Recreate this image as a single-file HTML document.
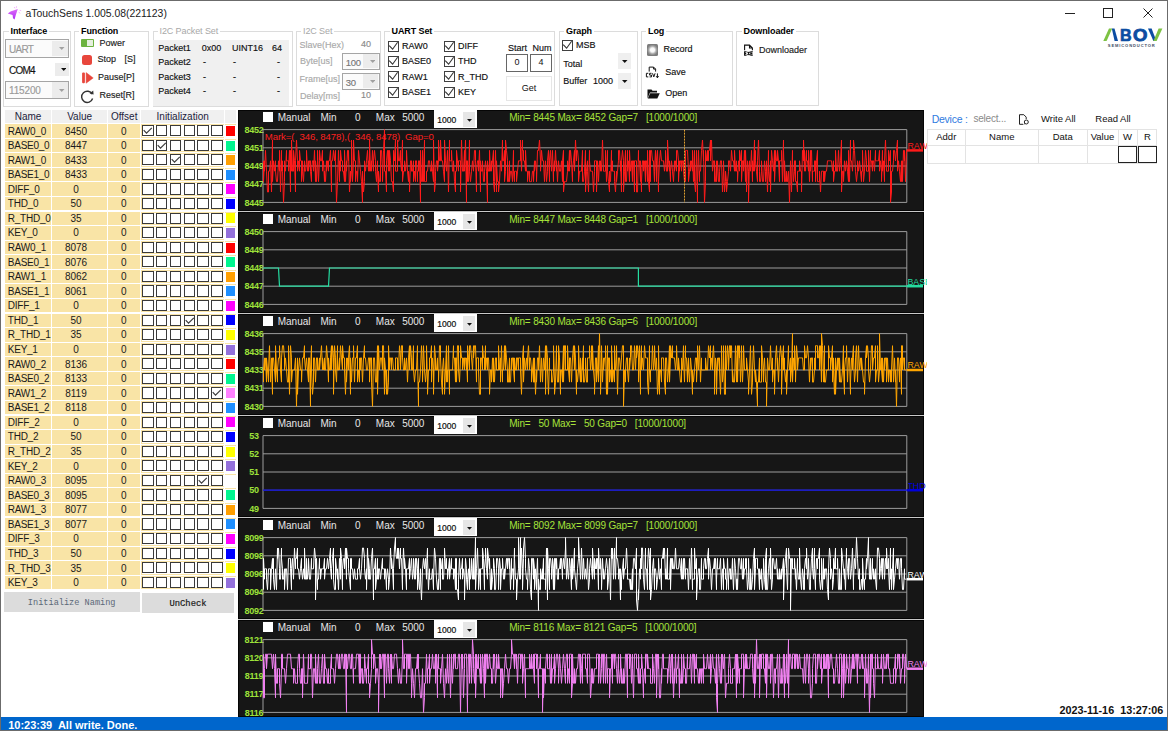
<!DOCTYPE html><html><head><meta charset="utf-8"><style>
*{margin:0;padding:0;box-sizing:border-box}
html,body{width:1168px;height:731px;overflow:hidden;background:#fff;font-family:"Liberation Sans",sans-serif;color:#000}
.ab{position:absolute;white-space:nowrap}
.t9{font-size:9px;line-height:10px;-webkit-text-stroke:0.15px currentColor}
.gb{position:absolute;border:1px solid #dcdcdc}
.gt{position:absolute;font-weight:bold;font-size:9px;line-height:10px;background:#fff;padding:0 2px;letter-spacing:-0.1px}
.cb{position:absolute;width:11px;height:11px;border:1px solid #333;background:#fff}
.cb svg{position:absolute;left:0;top:0}
</style></head><body>

<div class="ab" style="left:0;top:0;width:1168px;height:1px;background:#6b6b6b"></div>
<div class="ab" style="left:0;top:0;width:1px;height:731px;background:#6b6b6b"></div>
<div class="ab" style="left:1167px;top:0;width:1px;height:731px;background:#6b6b6b"></div>
<div class="ab" style="left:0;top:730px;width:1168px;height:1px;background:#6b6b6b"></div>
<svg class="ab" style="left:0;top:0" width="24" height="24" viewBox="0 0 24 24">
<defs><linearGradient id="ig" x1="0" y1="0" x2="0" y2="1"><stop offset="0" stop-color="#dc6cf8"/><stop offset="1" stop-color="#b02cf6"/></linearGradient></defs>
<path d="M7.8 13.4 L10.5 11.6 L17.8 9 L15.8 15 L14.6 19.6 L13 18.2 L12.6 15 Z" fill="url(#ig)"/>
<path d="M14.2 7 L14.9 8.3 M16.5 6.3 L16.3 7.9 M19.6 10.3 L21.2 10.6 M18.6 12.2 L20.3 13.3" stroke="#f0b0fa" stroke-width="0.9"/>
</svg>
<div class="ab" style="left:25.5px;top:7px;font-size:10.4px;line-height:14px;color:#1a1a1a">aTouchSens 1.005.08(221123)</div>
<div class="ab" style="left:1065px;top:12.5px;width:9.5px;height:1px;background:#222"></div>
<div class="ab" style="left:1103px;top:8px;width:9.5px;height:9.5px;border:1px solid #222"></div>
<svg class="ab" style="left:1142.5px;top:8px" width="10" height="10" viewBox="0 0 10 10"><path d="M0.5 0.5 L9.5 9.5 M9.5 0.5 L0.5 9.5" stroke="#222" stroke-width="1"/></svg>
<svg class="ab" style="left:1098px;top:22px" width="68" height="30" viewBox="0 0 68 30">
<path d="M5.3 18.9 L11 6.4 L14.2 6.4 L8.6 18.9 Z" fill="#7dc243"/>
<path d="M13.8 6.4 L16.5 6.4 L20 18.9 L16.6 18.9 Z" fill="#0c4da2"/>
<text x="22" y="18.6" font-family="Liberation Sans" font-weight="bold" font-size="17.4" fill="#0c4da2" stroke="#0c4da2" stroke-width="0.7" textLength="11.6" lengthAdjust="spacingAndGlyphs">B</text>
<text x="35" y="18.6" font-family="Liberation Sans" font-weight="bold" font-size="17.4" fill="#0c4da2" stroke="#0c4da2" stroke-width="0.9" textLength="14.4" lengthAdjust="spacingAndGlyphs">O</text>
<path d="M50 6.4 L53.6 6.4 L58.4 18.9 L55.4 18.9 Z" fill="#0c4da2"/>
<path d="M60.6 6.4 L64.4 6.4 L58.6 18.9 L55.4 18.9 Z" fill="#7dc243"/>
<text x="9.8" y="24.8" font-family="Liberation Sans" font-weight="bold" font-size="4.1" fill="#3d4c63" textLength="47" lengthAdjust="spacing">SEMICONDUCTOR</text>
</svg>
<div class="gb" style="left:3px;top:31px;width:68px;height:75.5px"></div>
<div class="gt" style="left:8.5px;top:26px;color:#000;font-weight:bold">Interface</div>
<div class="gb" style="left:73.5px;top:31px;width:75.5px;height:75.5px"></div>
<div class="gt" style="left:79px;top:26px;color:#000;font-weight:bold">Function</div>
<div class="gb" style="left:152.5px;top:31px;width:140.0px;height:75.5px"></div>
<div class="gt" style="left:157.5px;top:26px;color:#a8a8a8;font-weight:normal">I2C Packet Set</div>
<div class="gb" style="left:295.5px;top:31px;width:85.0px;height:74.5px"></div>
<div class="gt" style="left:301px;top:26px;color:#a8a8a8;font-weight:normal">I2C Set</div>
<div class="gb" style="left:384px;top:31px;width:171px;height:74.5px"></div>
<div class="gt" style="left:389.5px;top:26px;color:#000;font-weight:bold">UART Set</div>
<div class="gb" style="left:558.5px;top:31px;width:79.0px;height:74.5px"></div>
<div class="gt" style="left:564px;top:26px;color:#000;font-weight:bold">Graph</div>
<div class="gb" style="left:640.5px;top:31px;width:92.0px;height:74.5px"></div>
<div class="gt" style="left:646px;top:26px;color:#000;font-weight:bold">Log</div>
<div class="gb" style="left:735.5px;top:31px;width:83.0px;height:74.5px"></div>
<div class="gt" style="left:741.5px;top:26px;color:#000;font-weight:bold">Downloader</div>
<div class="ab" style="left:5px;top:39px;width:64px;height:18.5px;border:1.5px solid #a5a5a5;background:#fbfbfb"></div>
<div class="ab" style="left:52px;top:40.5px;width:15.5px;height:15.5px;background:#ececec"></div>
<svg class="ab" style="left:59.25px;top:47.25px" width="5.5" height="3.2" viewBox="0 0 5.5 3.2"><path d="M0 0 L5.5 0 L2.75 3Z" fill="#a0a0a0"/></svg>
<div class="ab t9" style="left:9px;top:43.65px;color:#9a9a9a;font-size:10px;line-height:11px;letter-spacing:-0.7px">UART</div>
<div class="ab" style="left:55px;top:62.5px;width:14.0px;height:13.5px;background:#ececec"></div>
<svg class="ab" style="left:60.75px;top:68.25px" width="5.5" height="3.2" viewBox="0 0 5.5 3.2"><path d="M0 0 L5.5 0 L2.75 3Z" fill="#111"/></svg>
<div class="ab t9" style="left:9px;top:64.65px;color:#111;font-size:10px;line-height:11px;letter-spacing:-0.75px">COM4</div>
<div class="ab" style="left:5px;top:80.5px;width:64px;height:18.5px;border:1.5px solid #a5a5a5;background:#fbfbfb"></div>
<div class="ab" style="left:52px;top:82.0px;width:15.5px;height:15.5px;background:#ececec"></div>
<svg class="ab" style="left:59.25px;top:88.75px" width="5.5" height="3.2" viewBox="0 0 5.5 3.2"><path d="M0 0 L5.5 0 L2.75 3Z" fill="#a0a0a0"/></svg>
<div class="ab t9" style="left:9px;top:85.15px;color:#9a9a9a;font-size:10px;line-height:11px;letter-spacing:-0.15px">115200</div>
<div class="ab" style="left:80.7px;top:38.7px;width:13.5px;height:8.1px;background:#6db33f;border-radius:1px"></div>
<div class="ab" style="left:86.5px;top:39.9px;width:6.5px;height:5.7px;background:#e6efdf"></div>
<div class="ab t9" style="left:99.5px;top:38px;font-size:9px;line-height:11px;color:#222">Power</div>
<div class="ab" style="left:82px;top:54.5px;width:10px;height:10px;background:#e8463c;border-radius:2.5px"></div>
<div class="ab t9" style="left:97.5px;top:54px;font-size:9px;line-height:11px;color:#222">Stop</div>
<div class="ab t9" style="left:124.5px;top:54px;font-size:9px;line-height:11px;color:#222">[S]</div>
<svg class="ab" style="left:81px;top:71.5px" width="13" height="12" viewBox="0 0 13 12"><rect x="1.1" y="0.6" width="2.8" height="10.6" rx="1" fill="#e8463c"/><path d="M5.1 0.6 L12.2 5.9 L5.1 11.2Z" fill="#e8463c" stroke="#e8463c" stroke-width="0.5" stroke-linejoin="round"/></svg>
<div class="ab t9" style="left:98px;top:72px;font-size:9px;line-height:11px;color:#222">Pause[P]</div>
<svg class="ab" style="left:80px;top:88.5px" width="15" height="15" viewBox="0 0 15 15"><path d="M12.2 5.2 A5.6 5.6 0 1 0 12.6 9.5" fill="none" stroke="#333" stroke-width="1.4"/><path d="M9.6 4.6 L13.6 5.6 L13.2 1.4Z" fill="#333"/></svg>
<div class="ab t9" style="left:99.5px;top:89.5px;font-size:9px;line-height:11px;color:#222">Reset[R]</div>
<div class="ab" style="left:153px;top:40px;width:136px;height:65.5px;background:#f0f0f0"></div>
<div class="ab t9" style="left:158.3px;top:42.5px;font-size:9px;line-height:11px;color:#111">Packet1</div>
<div class="ab t9" style="left:201.8px;top:42.5px;font-size:9px;line-height:11px;color:#111">0x00</div>
<div class="ab t9" style="left:232px;top:42.5px;font-size:9px;line-height:11px;color:#111">UINT16</div>
<div class="ab t9" style="left:272px;top:42.5px;font-size:9px;line-height:11px;color:#111">64</div>
<div class="ab t9" style="left:158.3px;top:57.05px;font-size:9px;line-height:11px;color:#111">Packet2</div>
<div class="ab t9" style="left:203px;top:57.05px;font-size:9px;line-height:11px;color:#111">-</div>
<div class="ab t9" style="left:233px;top:57.05px;font-size:9px;line-height:11px;color:#111">-</div>
<div class="ab t9" style="left:277px;top:57.05px;font-size:9px;line-height:11px;color:#111">-</div>
<div class="ab t9" style="left:158.3px;top:71.6px;font-size:9px;line-height:11px;color:#111">Packet3</div>
<div class="ab t9" style="left:203px;top:71.6px;font-size:9px;line-height:11px;color:#111">-</div>
<div class="ab t9" style="left:233px;top:71.6px;font-size:9px;line-height:11px;color:#111">-</div>
<div class="ab t9" style="left:277px;top:71.6px;font-size:9px;line-height:11px;color:#111">-</div>
<div class="ab t9" style="left:158.3px;top:86.15px;font-size:9px;line-height:11px;color:#111">Packet4</div>
<div class="ab t9" style="left:203px;top:86.15px;font-size:9px;line-height:11px;color:#111">-</div>
<div class="ab t9" style="left:233px;top:86.15px;font-size:9px;line-height:11px;color:#111">-</div>
<div class="ab t9" style="left:277px;top:86.15px;font-size:9px;line-height:11px;color:#111">-</div>
<div class="ab t9" style="left:299.5px;top:40px;font-size:9px;line-height:11px;color:#a9a9a9">Slave(Hex)</div>
<div class="ab t9" style="left:359px;top:39px;width:12px;text-align:right;font-size:9px;line-height:11px;color:#8a8a8a">40</div>
<div class="ab t9" style="left:300px;top:56px;font-size:9px;line-height:11px;color:#a9a9a9">Byte[us]</div>
<div class="ab" style="left:341.7px;top:52.6px;width:38.0px;height:17.4px;border:1.5px solid #a5a5a5;background:#fbfbfb"></div>
<div class="ab" style="left:362.7px;top:54.1px;width:15.5px;height:14.399999999999999px;background:#ececec"></div>
<svg class="ab" style="left:369.95px;top:60.3px" width="5.5" height="3.2" viewBox="0 0 5.5 3.2"><path d="M0 0 L5.5 0 L2.75 3Z" fill="#a0a0a0"/></svg>
<div class="ab t9" style="left:345.7px;top:56.699999999999996px;color:#777;font-size:9.5px;line-height:11px;letter-spacing:-0.2px">100</div>
<div class="ab t9" style="left:299.5px;top:73.5px;font-size:9px;line-height:11px;color:#a9a9a9">Frame[us]</div>
<div class="ab" style="left:341.7px;top:72.7px;width:38.0px;height:16.89999999999999px;border:1.5px solid #a5a5a5;background:#fbfbfb"></div>
<div class="ab" style="left:362.7px;top:74.2px;width:15.5px;height:13.899999999999991px;background:#ececec"></div>
<svg class="ab" style="left:369.95px;top:80.15px" width="5.5" height="3.2" viewBox="0 0 5.5 3.2"><path d="M0 0 L5.5 0 L2.75 3Z" fill="#a0a0a0"/></svg>
<div class="ab t9" style="left:345.7px;top:76.55000000000001px;color:#777;font-size:9.5px;line-height:11px;letter-spacing:-0.2px">30</div>
<div class="ab t9" style="left:300px;top:90.5px;font-size:9px;line-height:11px;color:#a9a9a9">Delay[ms]</div>
<div class="ab t9" style="left:359px;top:90px;width:12px;text-align:right;font-size:9px;line-height:11px;color:#8a8a8a">10</div>
<div class="ab" style="left:388px;top:40.5px;width:11px;height:11px;border:1.5px solid #404040;background:#fff"><svg width="11" height="11" viewBox="0 0 11 11" style="position:absolute;left:-1px;top:-1px"><path d="M1.2 4.6 L4.6 8.2 L9.6 1.2" fill="none" stroke="#333" stroke-width="1.1"/></svg></div>
<div class="ab t9" style="left:402px;top:41.0px;font-size:9px;line-height:11px;color:#111">RAW0</div>
<div class="ab" style="left:444px;top:40.5px;width:11px;height:11px;border:1.5px solid #404040;background:#fff"><svg width="11" height="11" viewBox="0 0 11 11" style="position:absolute;left:-1px;top:-1px"><path d="M1.2 4.6 L4.6 8.2 L9.6 1.2" fill="none" stroke="#333" stroke-width="1.1"/></svg></div>
<div class="ab t9" style="left:458px;top:41.0px;font-size:9px;line-height:11px;color:#111">DIFF</div>
<div class="ab" style="left:388px;top:55.85px;width:11px;height:11px;border:1.5px solid #404040;background:#fff"><svg width="11" height="11" viewBox="0 0 11 11" style="position:absolute;left:-1px;top:-1px"><path d="M1.2 4.6 L4.6 8.2 L9.6 1.2" fill="none" stroke="#333" stroke-width="1.1"/></svg></div>
<div class="ab t9" style="left:402px;top:56.35px;font-size:9px;line-height:11px;color:#111">BASE0</div>
<div class="ab" style="left:444px;top:55.85px;width:11px;height:11px;border:1.5px solid #404040;background:#fff"><svg width="11" height="11" viewBox="0 0 11 11" style="position:absolute;left:-1px;top:-1px"><path d="M1.2 4.6 L4.6 8.2 L9.6 1.2" fill="none" stroke="#333" stroke-width="1.1"/></svg></div>
<div class="ab t9" style="left:458px;top:56.35px;font-size:9px;line-height:11px;color:#111">THD</div>
<div class="ab" style="left:388px;top:71.2px;width:11px;height:11px;border:1.5px solid #404040;background:#fff"><svg width="11" height="11" viewBox="0 0 11 11" style="position:absolute;left:-1px;top:-1px"><path d="M1.2 4.6 L4.6 8.2 L9.6 1.2" fill="none" stroke="#333" stroke-width="1.1"/></svg></div>
<div class="ab t9" style="left:402px;top:71.7px;font-size:9px;line-height:11px;color:#111">RAW1</div>
<div class="ab" style="left:444px;top:71.2px;width:11px;height:11px;border:1.5px solid #404040;background:#fff"><svg width="11" height="11" viewBox="0 0 11 11" style="position:absolute;left:-1px;top:-1px"><path d="M1.2 4.6 L4.6 8.2 L9.6 1.2" fill="none" stroke="#333" stroke-width="1.1"/></svg></div>
<div class="ab t9" style="left:458px;top:71.7px;font-size:9px;line-height:11px;color:#111">R_THD</div>
<div class="ab" style="left:388px;top:86.55px;width:11px;height:11px;border:1.5px solid #404040;background:#fff"><svg width="11" height="11" viewBox="0 0 11 11" style="position:absolute;left:-1px;top:-1px"><path d="M1.2 4.6 L4.6 8.2 L9.6 1.2" fill="none" stroke="#333" stroke-width="1.1"/></svg></div>
<div class="ab t9" style="left:402px;top:87.05px;font-size:9px;line-height:11px;color:#111">BASE1</div>
<div class="ab" style="left:444px;top:86.55px;width:11px;height:11px;border:1.5px solid #404040;background:#fff"><svg width="11" height="11" viewBox="0 0 11 11" style="position:absolute;left:-1px;top:-1px"><path d="M1.2 4.6 L4.6 8.2 L9.6 1.2" fill="none" stroke="#333" stroke-width="1.1"/></svg></div>
<div class="ab t9" style="left:458px;top:87.05px;font-size:9px;line-height:11px;color:#111">KEY</div>
<div class="ab t9" style="left:508px;top:43px;font-size:9px;line-height:11px;color:#111">Start</div>
<div class="ab t9" style="left:532.5px;top:43px;font-size:9px;line-height:11px;color:#111">Num</div>
<div class="ab" style="left:506.4px;top:54.2px;width:21.4px;height:17.6px;border:1.2px solid #666;background:#fff;font-size:9px;line-height:14.5px;text-align:center;color:#111">0</div>
<div class="ab" style="left:530.3px;top:54.2px;width:21.4px;height:17.6px;border:1.2px solid #666;background:#fff;font-size:9px;line-height:14.5px;text-align:center;color:#111">4</div>
<div class="ab" style="left:506.4px;top:75.5px;width:45.3px;height:25px;border:1px solid #e6e6e6;background:#fff;font-size:9px;line-height:23px;text-align:center;color:#111">Get</div>
<div class="ab" style="left:562.2px;top:39.5px;width:11px;height:11px;border:1.5px solid #404040;background:#fff"><svg width="11" height="11" viewBox="0 0 11 11" style="position:absolute;left:-1px;top:-1px"><path d="M1.2 4.6 L4.6 8.2 L9.6 1.2" fill="none" stroke="#333" stroke-width="1.1"/></svg></div>
<div class="ab t9" style="left:576px;top:40px;font-size:9px;line-height:11px;color:#111">MSB</div>
<div class="ab t9" style="left:563.3px;top:58.5px;font-size:9px;line-height:11px;color:#111">Total</div>
<div class="ab" style="left:618px;top:52.5px;width:13.3px;height:16px;background:#efefef"></div>
<svg class="ab" style="left:622px;top:59.5px" width="5.5" height="3.2" viewBox="0 0 5.5 3.2"><path d="M0 0 L5.5 0 L2.75 3Z" fill="#111"/></svg>
<div class="ab t9" style="left:563.3px;top:76px;font-size:9px;line-height:11px;color:#111">Buffer</div>
<div class="ab t9" style="left:593px;top:75.5px;font-size:9px;line-height:11px;color:#111">1000</div>
<div class="ab" style="left:618px;top:72.9px;width:13.3px;height:15.7px;background:#efefef"></div>
<svg class="ab" style="left:622px;top:79.5px" width="5.5" height="3.2" viewBox="0 0 5.5 3.2"><path d="M0 0 L5.5 0 L2.75 3Z" fill="#111"/></svg>
<div class="ab" style="left:647px;top:44px;width:11.2px;height:11.5px;background:radial-gradient(circle closest-side,#ffffff 0,#f8f8f8 38%,#a8a8a8 70%,#7c7c7c 100%);border-radius:1.5px"></div>
<div class="ab t9" style="left:663.5px;top:44px;font-size:9px;line-height:11px;color:#111">Record</div>
<svg class="ab" style="left:645px;top:66px" width="16" height="13" viewBox="0 0 16 13"><path d="M4.2 5.6 V1.1 H8.6 L10.6 3.1 V5.6 M8.6 1.1 V3.1 H10.6" fill="none" stroke="#111" stroke-width="1"/><path d="M3.3 7.3 H1.4 V10.9 H3.3 M6.5 7.3 H4.6 V9.1 H6.5 V10.9 H4.6 M7.5 7.3 L8.8 10.9 L10.1 7.3" fill="none" stroke="#111" stroke-width="1"/><path d="M12.4 7.4 V11.6 M11.2 10.2 L12.4 11.8 L13.6 10.2" fill="none" stroke="#111" stroke-width="1"/></svg>
<div class="ab t9" style="left:665.2px;top:66.5px;font-size:9px;line-height:11px;color:#111">Save</div>
<svg class="ab" style="left:646.5px;top:88.5px" width="13" height="10" viewBox="0 0 13 10"><path d="M0.5 0.5 H4.5 L5.5 1.7 H10 V3.5 H3 L0.5 9.5Z" fill="#111"/><path d="M3.2 4.2 H12.8 L10.3 9.6 H0.8Z" fill="#111"/></svg>
<div class="ab t9" style="left:665.2px;top:88px;font-size:9px;line-height:11px;color:#111">Open</div>
<svg class="ab" style="left:743px;top:43.5px" width="12" height="13" viewBox="0 0 12 13"><path d="M1.6 6.3 V1.1 H6.5 L9.4 4 V6.3 M6.5 1.1 V4 H9.4" fill="none" stroke="#111" stroke-width="1.1"/><path d="M3.6 7.7 H1.6 V11.1 H3.6 M1.6 9.4 H3.2 M4.6 7.7 L6.6 11.1 M6.6 7.7 L4.6 11.1 M9.8 7.7 H7.8 V11.1 H9.8 M7.8 9.4 H9.4" fill="none" stroke="#111" stroke-width="1.1"/></svg>
<div class="ab t9" style="left:759px;top:44.5px;font-size:9px;line-height:11px;color:#222">Downloader</div>
<div class="ab" style="left:5px;top:109.6px;width:231px;height:13.4px;background:#f0f0f0"></div>
<div class="ab" style="left:50.9px;top:109.6px;width:1.6000000000000014px;height:13.4px;background:#fff"></div>
<div class="ab" style="left:106.8px;top:109.6px;width:1.4000000000000057px;height:13.4px;background:#fff"></div>
<div class="ab" style="left:140.2px;top:109.6px;width:1.200000000000017px;height:13.4px;background:#fff"></div>
<div class="ab" style="left:224px;top:109.6px;width:1.3000000000000114px;height:13.4px;background:#fff"></div>
<div class="ab" style="left:-12px;top:110.5px;width:80px;text-align:center;font-size:10px;line-height:12px;color:#1c1c3c">Name</div>
<div class="ab" style="left:39.599999999999994px;top:110.5px;width:80px;text-align:center;font-size:10px;line-height:12px;color:#1c1c3c">Value</div>
<div class="ab" style="left:84.2px;top:110.5px;width:80px;text-align:center;font-size:10px;line-height:12px;color:#1c1c3c">Offset</div>
<div class="ab" style="left:142.7px;top:110.5px;width:80px;text-align:center;font-size:10px;line-height:12px;color:#1c1c3c">Initialization</div>
<div class="ab" style="left:5px;top:124.20px;width:231px;height:13.4px;background:#f9e4a6"></div>
<div class="ab" style="left:50.9px;top:124.20px;width:1.6000000000000014px;height:13.4px;background:#fff"></div>
<div class="ab" style="left:106.8px;top:124.20px;width:1.4000000000000057px;height:13.4px;background:#fff"></div>
<div class="ab" style="left:140.2px;top:124.20px;width:1.200000000000017px;height:13.4px;background:#fff"></div>
<div class="ab" style="left:224px;top:124.20px;width:1.3000000000000114px;height:13.4px;background:#fff"></div>
<div class="ab" style="left:142px;top:125.20px;width:82px;height:11.4px;background:#fff"></div>
<div class="ab" style="left:7.8px;top:125.50px;font-size:10px;line-height:12.5px;color:#1a1a1a;letter-spacing:-0.25px">RAW0_0</div>
<div class="ab" style="left:52.5px;top:125.50px;width:47px;text-align:center;font-size:10px;line-height:12.5px;color:#1a1a1a">8450</div>
<div class="ab" style="left:108.2px;top:125.50px;width:31px;text-align:center;font-size:10px;line-height:12.5px;color:#1a1a1a">0</div>
<div class="ab" style="left:142.20px;top:125.10px;width:11.5px;height:11.2px;border:1.4px solid #3a3a3a;background:#fff"><svg width="11" height="11" viewBox="0 0 11 11" style="position:absolute;left:-1px;top:-1px"><path d="M1.7 5.2 L4.5 8.1 L9.8 2.9" fill="none" stroke="#3c3c3c" stroke-width="1.2"/></svg></div>
<div class="ab" style="left:155.98px;top:125.10px;width:11.5px;height:11.2px;border:1.4px solid #3a3a3a;background:#fff"></div>
<div class="ab" style="left:169.76px;top:125.10px;width:11.5px;height:11.2px;border:1.4px solid #3a3a3a;background:#fff"></div>
<div class="ab" style="left:183.54px;top:125.10px;width:11.5px;height:11.2px;border:1.4px solid #3a3a3a;background:#fff"></div>
<div class="ab" style="left:197.32px;top:125.10px;width:11.5px;height:11.2px;border:1.4px solid #3a3a3a;background:#fff"></div>
<div class="ab" style="left:211.10px;top:125.10px;width:11.5px;height:11.2px;border:1.4px solid #3a3a3a;background:#fff"></div>
<div class="ab" style="left:225.3px;top:125.20px;width:10.7px;height:12.4px;background:#fff"></div>
<div class="ab" style="left:225.9px;top:126.00px;width:9.3px;height:10px;background:#ff0000"></div>
<div class="ab" style="left:5px;top:138.77px;width:231px;height:13.4px;background:#f9e4a6"></div>
<div class="ab" style="left:50.9px;top:138.77px;width:1.6000000000000014px;height:13.4px;background:#fff"></div>
<div class="ab" style="left:106.8px;top:138.77px;width:1.4000000000000057px;height:13.4px;background:#fff"></div>
<div class="ab" style="left:140.2px;top:138.77px;width:1.200000000000017px;height:13.4px;background:#fff"></div>
<div class="ab" style="left:224px;top:138.77px;width:1.3000000000000114px;height:13.4px;background:#fff"></div>
<div class="ab" style="left:142px;top:139.77px;width:82px;height:11.4px;background:#fff"></div>
<div class="ab" style="left:7.8px;top:140.07px;font-size:10px;line-height:12.5px;color:#1a1a1a;letter-spacing:-0.25px">BASE0_0</div>
<div class="ab" style="left:52.5px;top:140.07px;width:47px;text-align:center;font-size:10px;line-height:12.5px;color:#1a1a1a">8447</div>
<div class="ab" style="left:108.2px;top:140.07px;width:31px;text-align:center;font-size:10px;line-height:12.5px;color:#1a1a1a">0</div>
<div class="ab" style="left:142.20px;top:139.67px;width:11.5px;height:11.2px;border:1.4px solid #3a3a3a;background:#fff"></div>
<div class="ab" style="left:155.98px;top:139.67px;width:11.5px;height:11.2px;border:1.4px solid #3a3a3a;background:#fff"><svg width="11" height="11" viewBox="0 0 11 11" style="position:absolute;left:-1px;top:-1px"><path d="M1.7 5.2 L4.5 8.1 L9.8 2.9" fill="none" stroke="#3c3c3c" stroke-width="1.2"/></svg></div>
<div class="ab" style="left:169.76px;top:139.67px;width:11.5px;height:11.2px;border:1.4px solid #3a3a3a;background:#fff"></div>
<div class="ab" style="left:183.54px;top:139.67px;width:11.5px;height:11.2px;border:1.4px solid #3a3a3a;background:#fff"></div>
<div class="ab" style="left:197.32px;top:139.67px;width:11.5px;height:11.2px;border:1.4px solid #3a3a3a;background:#fff"></div>
<div class="ab" style="left:211.10px;top:139.67px;width:11.5px;height:11.2px;border:1.4px solid #3a3a3a;background:#fff"></div>
<div class="ab" style="left:225.3px;top:139.77px;width:10.7px;height:12.4px;background:#fff"></div>
<div class="ab" style="left:225.9px;top:140.57px;width:9.3px;height:10px;background:#00f590"></div>
<div class="ab" style="left:5px;top:153.34px;width:231px;height:13.4px;background:#f9e4a6"></div>
<div class="ab" style="left:50.9px;top:153.34px;width:1.6000000000000014px;height:13.4px;background:#fff"></div>
<div class="ab" style="left:106.8px;top:153.34px;width:1.4000000000000057px;height:13.4px;background:#fff"></div>
<div class="ab" style="left:140.2px;top:153.34px;width:1.200000000000017px;height:13.4px;background:#fff"></div>
<div class="ab" style="left:224px;top:153.34px;width:1.3000000000000114px;height:13.4px;background:#fff"></div>
<div class="ab" style="left:142px;top:154.34px;width:82px;height:11.4px;background:#fff"></div>
<div class="ab" style="left:7.8px;top:154.64px;font-size:10px;line-height:12.5px;color:#1a1a1a;letter-spacing:-0.25px">RAW1_0</div>
<div class="ab" style="left:52.5px;top:154.64px;width:47px;text-align:center;font-size:10px;line-height:12.5px;color:#1a1a1a">8433</div>
<div class="ab" style="left:108.2px;top:154.64px;width:31px;text-align:center;font-size:10px;line-height:12.5px;color:#1a1a1a">0</div>
<div class="ab" style="left:142.20px;top:154.24px;width:11.5px;height:11.2px;border:1.4px solid #3a3a3a;background:#fff"></div>
<div class="ab" style="left:155.98px;top:154.24px;width:11.5px;height:11.2px;border:1.4px solid #3a3a3a;background:#fff"></div>
<div class="ab" style="left:169.76px;top:154.24px;width:11.5px;height:11.2px;border:1.4px solid #3a3a3a;background:#fff"><svg width="11" height="11" viewBox="0 0 11 11" style="position:absolute;left:-1px;top:-1px"><path d="M1.7 5.2 L4.5 8.1 L9.8 2.9" fill="none" stroke="#3c3c3c" stroke-width="1.2"/></svg></div>
<div class="ab" style="left:183.54px;top:154.24px;width:11.5px;height:11.2px;border:1.4px solid #3a3a3a;background:#fff"></div>
<div class="ab" style="left:197.32px;top:154.24px;width:11.5px;height:11.2px;border:1.4px solid #3a3a3a;background:#fff"></div>
<div class="ab" style="left:211.10px;top:154.24px;width:11.5px;height:11.2px;border:1.4px solid #3a3a3a;background:#fff"></div>
<div class="ab" style="left:225.3px;top:154.34px;width:10.7px;height:12.4px;background:#fff"></div>
<div class="ab" style="left:225.9px;top:155.14px;width:9.3px;height:10px;background:#ff9f00"></div>
<div class="ab" style="left:5px;top:167.91px;width:231px;height:13.4px;background:#f9e4a6"></div>
<div class="ab" style="left:50.9px;top:167.91px;width:1.6000000000000014px;height:13.4px;background:#fff"></div>
<div class="ab" style="left:106.8px;top:167.91px;width:1.4000000000000057px;height:13.4px;background:#fff"></div>
<div class="ab" style="left:140.2px;top:167.91px;width:1.200000000000017px;height:13.4px;background:#fff"></div>
<div class="ab" style="left:224px;top:167.91px;width:1.3000000000000114px;height:13.4px;background:#fff"></div>
<div class="ab" style="left:142px;top:168.91px;width:82px;height:11.4px;background:#fff"></div>
<div class="ab" style="left:7.8px;top:169.21px;font-size:10px;line-height:12.5px;color:#1a1a1a;letter-spacing:-0.25px">BASE1_0</div>
<div class="ab" style="left:52.5px;top:169.21px;width:47px;text-align:center;font-size:10px;line-height:12.5px;color:#1a1a1a">8433</div>
<div class="ab" style="left:108.2px;top:169.21px;width:31px;text-align:center;font-size:10px;line-height:12.5px;color:#1a1a1a">0</div>
<div class="ab" style="left:142.20px;top:168.81px;width:11.5px;height:11.2px;border:1.4px solid #3a3a3a;background:#fff"></div>
<div class="ab" style="left:155.98px;top:168.81px;width:11.5px;height:11.2px;border:1.4px solid #3a3a3a;background:#fff"></div>
<div class="ab" style="left:169.76px;top:168.81px;width:11.5px;height:11.2px;border:1.4px solid #3a3a3a;background:#fff"></div>
<div class="ab" style="left:183.54px;top:168.81px;width:11.5px;height:11.2px;border:1.4px solid #3a3a3a;background:#fff"></div>
<div class="ab" style="left:197.32px;top:168.81px;width:11.5px;height:11.2px;border:1.4px solid #3a3a3a;background:#fff"></div>
<div class="ab" style="left:211.10px;top:168.81px;width:11.5px;height:11.2px;border:1.4px solid #3a3a3a;background:#fff"></div>
<div class="ab" style="left:225.3px;top:168.91px;width:10.7px;height:12.4px;background:#fff"></div>
<div class="ab" style="left:225.9px;top:169.71px;width:9.3px;height:10px;background:#1e8fff"></div>
<div class="ab" style="left:5px;top:182.48px;width:231px;height:13.4px;background:#f9e4a6"></div>
<div class="ab" style="left:50.9px;top:182.48px;width:1.6000000000000014px;height:13.4px;background:#fff"></div>
<div class="ab" style="left:106.8px;top:182.48px;width:1.4000000000000057px;height:13.4px;background:#fff"></div>
<div class="ab" style="left:140.2px;top:182.48px;width:1.200000000000017px;height:13.4px;background:#fff"></div>
<div class="ab" style="left:224px;top:182.48px;width:1.3000000000000114px;height:13.4px;background:#fff"></div>
<div class="ab" style="left:142px;top:183.48px;width:82px;height:11.4px;background:#fff"></div>
<div class="ab" style="left:7.8px;top:183.78px;font-size:10px;line-height:12.5px;color:#1a1a1a;letter-spacing:-0.25px">DIFF_0</div>
<div class="ab" style="left:52.5px;top:183.78px;width:47px;text-align:center;font-size:10px;line-height:12.5px;color:#1a1a1a">0</div>
<div class="ab" style="left:108.2px;top:183.78px;width:31px;text-align:center;font-size:10px;line-height:12.5px;color:#1a1a1a">0</div>
<div class="ab" style="left:142.20px;top:183.38px;width:11.5px;height:11.2px;border:1.4px solid #3a3a3a;background:#fff"></div>
<div class="ab" style="left:155.98px;top:183.38px;width:11.5px;height:11.2px;border:1.4px solid #3a3a3a;background:#fff"></div>
<div class="ab" style="left:169.76px;top:183.38px;width:11.5px;height:11.2px;border:1.4px solid #3a3a3a;background:#fff"></div>
<div class="ab" style="left:183.54px;top:183.38px;width:11.5px;height:11.2px;border:1.4px solid #3a3a3a;background:#fff"></div>
<div class="ab" style="left:197.32px;top:183.38px;width:11.5px;height:11.2px;border:1.4px solid #3a3a3a;background:#fff"></div>
<div class="ab" style="left:211.10px;top:183.38px;width:11.5px;height:11.2px;border:1.4px solid #3a3a3a;background:#fff"></div>
<div class="ab" style="left:225.3px;top:183.48px;width:10.7px;height:12.4px;background:#fff"></div>
<div class="ab" style="left:225.9px;top:184.28px;width:9.3px;height:10px;background:#ff00ff"></div>
<div class="ab" style="left:5px;top:197.05px;width:231px;height:13.4px;background:#f9e4a6"></div>
<div class="ab" style="left:50.9px;top:197.05px;width:1.6000000000000014px;height:13.4px;background:#fff"></div>
<div class="ab" style="left:106.8px;top:197.05px;width:1.4000000000000057px;height:13.4px;background:#fff"></div>
<div class="ab" style="left:140.2px;top:197.05px;width:1.200000000000017px;height:13.4px;background:#fff"></div>
<div class="ab" style="left:224px;top:197.05px;width:1.3000000000000114px;height:13.4px;background:#fff"></div>
<div class="ab" style="left:142px;top:198.05px;width:82px;height:11.4px;background:#fff"></div>
<div class="ab" style="left:7.8px;top:198.35px;font-size:10px;line-height:12.5px;color:#1a1a1a;letter-spacing:-0.25px">THD_0</div>
<div class="ab" style="left:52.5px;top:198.35px;width:47px;text-align:center;font-size:10px;line-height:12.5px;color:#1a1a1a">50</div>
<div class="ab" style="left:108.2px;top:198.35px;width:31px;text-align:center;font-size:10px;line-height:12.5px;color:#1a1a1a">0</div>
<div class="ab" style="left:142.20px;top:197.95px;width:11.5px;height:11.2px;border:1.4px solid #3a3a3a;background:#fff"></div>
<div class="ab" style="left:155.98px;top:197.95px;width:11.5px;height:11.2px;border:1.4px solid #3a3a3a;background:#fff"></div>
<div class="ab" style="left:169.76px;top:197.95px;width:11.5px;height:11.2px;border:1.4px solid #3a3a3a;background:#fff"></div>
<div class="ab" style="left:183.54px;top:197.95px;width:11.5px;height:11.2px;border:1.4px solid #3a3a3a;background:#fff"></div>
<div class="ab" style="left:197.32px;top:197.95px;width:11.5px;height:11.2px;border:1.4px solid #3a3a3a;background:#fff"></div>
<div class="ab" style="left:211.10px;top:197.95px;width:11.5px;height:11.2px;border:1.4px solid #3a3a3a;background:#fff"></div>
<div class="ab" style="left:225.3px;top:198.05px;width:10.7px;height:12.4px;background:#fff"></div>
<div class="ab" style="left:225.9px;top:198.85px;width:9.3px;height:10px;background:#0000ff"></div>
<div class="ab" style="left:5px;top:211.62px;width:231px;height:13.4px;background:#f9e4a6"></div>
<div class="ab" style="left:50.9px;top:211.62px;width:1.6000000000000014px;height:13.4px;background:#fff"></div>
<div class="ab" style="left:106.8px;top:211.62px;width:1.4000000000000057px;height:13.4px;background:#fff"></div>
<div class="ab" style="left:140.2px;top:211.62px;width:1.200000000000017px;height:13.4px;background:#fff"></div>
<div class="ab" style="left:224px;top:211.62px;width:1.3000000000000114px;height:13.4px;background:#fff"></div>
<div class="ab" style="left:142px;top:212.62px;width:82px;height:11.4px;background:#fff"></div>
<div class="ab" style="left:7.8px;top:212.92px;font-size:10px;line-height:12.5px;color:#1a1a1a;letter-spacing:-0.25px">R_THD_0</div>
<div class="ab" style="left:52.5px;top:212.92px;width:47px;text-align:center;font-size:10px;line-height:12.5px;color:#1a1a1a">35</div>
<div class="ab" style="left:108.2px;top:212.92px;width:31px;text-align:center;font-size:10px;line-height:12.5px;color:#1a1a1a">0</div>
<div class="ab" style="left:142.20px;top:212.52px;width:11.5px;height:11.2px;border:1.4px solid #3a3a3a;background:#fff"></div>
<div class="ab" style="left:155.98px;top:212.52px;width:11.5px;height:11.2px;border:1.4px solid #3a3a3a;background:#fff"></div>
<div class="ab" style="left:169.76px;top:212.52px;width:11.5px;height:11.2px;border:1.4px solid #3a3a3a;background:#fff"></div>
<div class="ab" style="left:183.54px;top:212.52px;width:11.5px;height:11.2px;border:1.4px solid #3a3a3a;background:#fff"></div>
<div class="ab" style="left:197.32px;top:212.52px;width:11.5px;height:11.2px;border:1.4px solid #3a3a3a;background:#fff"></div>
<div class="ab" style="left:211.10px;top:212.52px;width:11.5px;height:11.2px;border:1.4px solid #3a3a3a;background:#fff"></div>
<div class="ab" style="left:225.3px;top:212.62px;width:10.7px;height:12.4px;background:#fff"></div>
<div class="ab" style="left:225.9px;top:213.42px;width:9.3px;height:10px;background:#ffff00"></div>
<div class="ab" style="left:5px;top:226.19px;width:231px;height:13.4px;background:#f9e4a6"></div>
<div class="ab" style="left:50.9px;top:226.19px;width:1.6000000000000014px;height:13.4px;background:#fff"></div>
<div class="ab" style="left:106.8px;top:226.19px;width:1.4000000000000057px;height:13.4px;background:#fff"></div>
<div class="ab" style="left:140.2px;top:226.19px;width:1.200000000000017px;height:13.4px;background:#fff"></div>
<div class="ab" style="left:224px;top:226.19px;width:1.3000000000000114px;height:13.4px;background:#fff"></div>
<div class="ab" style="left:142px;top:227.19px;width:82px;height:11.4px;background:#fff"></div>
<div class="ab" style="left:7.8px;top:227.49px;font-size:10px;line-height:12.5px;color:#1a1a1a;letter-spacing:-0.25px">KEY_0</div>
<div class="ab" style="left:52.5px;top:227.49px;width:47px;text-align:center;font-size:10px;line-height:12.5px;color:#1a1a1a">0</div>
<div class="ab" style="left:108.2px;top:227.49px;width:31px;text-align:center;font-size:10px;line-height:12.5px;color:#1a1a1a">0</div>
<div class="ab" style="left:142.20px;top:227.09px;width:11.5px;height:11.2px;border:1.4px solid #3a3a3a;background:#fff"></div>
<div class="ab" style="left:155.98px;top:227.09px;width:11.5px;height:11.2px;border:1.4px solid #3a3a3a;background:#fff"></div>
<div class="ab" style="left:169.76px;top:227.09px;width:11.5px;height:11.2px;border:1.4px solid #3a3a3a;background:#fff"></div>
<div class="ab" style="left:183.54px;top:227.09px;width:11.5px;height:11.2px;border:1.4px solid #3a3a3a;background:#fff"></div>
<div class="ab" style="left:197.32px;top:227.09px;width:11.5px;height:11.2px;border:1.4px solid #3a3a3a;background:#fff"></div>
<div class="ab" style="left:211.10px;top:227.09px;width:11.5px;height:11.2px;border:1.4px solid #3a3a3a;background:#fff"></div>
<div class="ab" style="left:225.3px;top:227.19px;width:10.7px;height:12.4px;background:#fff"></div>
<div class="ab" style="left:225.9px;top:227.99px;width:9.3px;height:10px;background:#9370db"></div>
<div class="ab" style="left:5px;top:240.76px;width:231px;height:13.4px;background:#f9e4a6"></div>
<div class="ab" style="left:50.9px;top:240.76px;width:1.6000000000000014px;height:13.4px;background:#fff"></div>
<div class="ab" style="left:106.8px;top:240.76px;width:1.4000000000000057px;height:13.4px;background:#fff"></div>
<div class="ab" style="left:140.2px;top:240.76px;width:1.200000000000017px;height:13.4px;background:#fff"></div>
<div class="ab" style="left:224px;top:240.76px;width:1.3000000000000114px;height:13.4px;background:#fff"></div>
<div class="ab" style="left:142px;top:241.76px;width:82px;height:11.4px;background:#fff"></div>
<div class="ab" style="left:7.8px;top:242.06px;font-size:10px;line-height:12.5px;color:#1a1a1a;letter-spacing:-0.25px">RAW0_1</div>
<div class="ab" style="left:52.5px;top:242.06px;width:47px;text-align:center;font-size:10px;line-height:12.5px;color:#1a1a1a">8078</div>
<div class="ab" style="left:108.2px;top:242.06px;width:31px;text-align:center;font-size:10px;line-height:12.5px;color:#1a1a1a">0</div>
<div class="ab" style="left:142.20px;top:241.66px;width:11.5px;height:11.2px;border:1.4px solid #3a3a3a;background:#fff"></div>
<div class="ab" style="left:155.98px;top:241.66px;width:11.5px;height:11.2px;border:1.4px solid #3a3a3a;background:#fff"></div>
<div class="ab" style="left:169.76px;top:241.66px;width:11.5px;height:11.2px;border:1.4px solid #3a3a3a;background:#fff"></div>
<div class="ab" style="left:183.54px;top:241.66px;width:11.5px;height:11.2px;border:1.4px solid #3a3a3a;background:#fff"></div>
<div class="ab" style="left:197.32px;top:241.66px;width:11.5px;height:11.2px;border:1.4px solid #3a3a3a;background:#fff"></div>
<div class="ab" style="left:211.10px;top:241.66px;width:11.5px;height:11.2px;border:1.4px solid #3a3a3a;background:#fff"></div>
<div class="ab" style="left:225.3px;top:241.76px;width:10.7px;height:12.4px;background:#fff"></div>
<div class="ab" style="left:225.9px;top:242.56px;width:9.3px;height:10px;background:#ff0000"></div>
<div class="ab" style="left:5px;top:255.33px;width:231px;height:13.4px;background:#f9e4a6"></div>
<div class="ab" style="left:50.9px;top:255.33px;width:1.6000000000000014px;height:13.4px;background:#fff"></div>
<div class="ab" style="left:106.8px;top:255.33px;width:1.4000000000000057px;height:13.4px;background:#fff"></div>
<div class="ab" style="left:140.2px;top:255.33px;width:1.200000000000017px;height:13.4px;background:#fff"></div>
<div class="ab" style="left:224px;top:255.33px;width:1.3000000000000114px;height:13.4px;background:#fff"></div>
<div class="ab" style="left:142px;top:256.33px;width:82px;height:11.4px;background:#fff"></div>
<div class="ab" style="left:7.8px;top:256.63px;font-size:10px;line-height:12.5px;color:#1a1a1a;letter-spacing:-0.25px">BASE0_1</div>
<div class="ab" style="left:52.5px;top:256.63px;width:47px;text-align:center;font-size:10px;line-height:12.5px;color:#1a1a1a">8076</div>
<div class="ab" style="left:108.2px;top:256.63px;width:31px;text-align:center;font-size:10px;line-height:12.5px;color:#1a1a1a">0</div>
<div class="ab" style="left:142.20px;top:256.23px;width:11.5px;height:11.2px;border:1.4px solid #3a3a3a;background:#fff"></div>
<div class="ab" style="left:155.98px;top:256.23px;width:11.5px;height:11.2px;border:1.4px solid #3a3a3a;background:#fff"></div>
<div class="ab" style="left:169.76px;top:256.23px;width:11.5px;height:11.2px;border:1.4px solid #3a3a3a;background:#fff"></div>
<div class="ab" style="left:183.54px;top:256.23px;width:11.5px;height:11.2px;border:1.4px solid #3a3a3a;background:#fff"></div>
<div class="ab" style="left:197.32px;top:256.23px;width:11.5px;height:11.2px;border:1.4px solid #3a3a3a;background:#fff"></div>
<div class="ab" style="left:211.10px;top:256.23px;width:11.5px;height:11.2px;border:1.4px solid #3a3a3a;background:#fff"></div>
<div class="ab" style="left:225.3px;top:256.33px;width:10.7px;height:12.4px;background:#fff"></div>
<div class="ab" style="left:225.9px;top:257.13px;width:9.3px;height:10px;background:#00f590"></div>
<div class="ab" style="left:5px;top:269.90px;width:231px;height:13.4px;background:#f9e4a6"></div>
<div class="ab" style="left:50.9px;top:269.90px;width:1.6000000000000014px;height:13.4px;background:#fff"></div>
<div class="ab" style="left:106.8px;top:269.90px;width:1.4000000000000057px;height:13.4px;background:#fff"></div>
<div class="ab" style="left:140.2px;top:269.90px;width:1.200000000000017px;height:13.4px;background:#fff"></div>
<div class="ab" style="left:224px;top:269.90px;width:1.3000000000000114px;height:13.4px;background:#fff"></div>
<div class="ab" style="left:142px;top:270.90px;width:82px;height:11.4px;background:#fff"></div>
<div class="ab" style="left:7.8px;top:271.20px;font-size:10px;line-height:12.5px;color:#1a1a1a;letter-spacing:-0.25px">RAW1_1</div>
<div class="ab" style="left:52.5px;top:271.20px;width:47px;text-align:center;font-size:10px;line-height:12.5px;color:#1a1a1a">8062</div>
<div class="ab" style="left:108.2px;top:271.20px;width:31px;text-align:center;font-size:10px;line-height:12.5px;color:#1a1a1a">0</div>
<div class="ab" style="left:142.20px;top:270.80px;width:11.5px;height:11.2px;border:1.4px solid #3a3a3a;background:#fff"></div>
<div class="ab" style="left:155.98px;top:270.80px;width:11.5px;height:11.2px;border:1.4px solid #3a3a3a;background:#fff"></div>
<div class="ab" style="left:169.76px;top:270.80px;width:11.5px;height:11.2px;border:1.4px solid #3a3a3a;background:#fff"></div>
<div class="ab" style="left:183.54px;top:270.80px;width:11.5px;height:11.2px;border:1.4px solid #3a3a3a;background:#fff"></div>
<div class="ab" style="left:197.32px;top:270.80px;width:11.5px;height:11.2px;border:1.4px solid #3a3a3a;background:#fff"></div>
<div class="ab" style="left:211.10px;top:270.80px;width:11.5px;height:11.2px;border:1.4px solid #3a3a3a;background:#fff"></div>
<div class="ab" style="left:225.3px;top:270.90px;width:10.7px;height:12.4px;background:#fff"></div>
<div class="ab" style="left:225.9px;top:271.70px;width:9.3px;height:10px;background:#ff9f00"></div>
<div class="ab" style="left:5px;top:284.47px;width:231px;height:13.4px;background:#f9e4a6"></div>
<div class="ab" style="left:50.9px;top:284.47px;width:1.6000000000000014px;height:13.4px;background:#fff"></div>
<div class="ab" style="left:106.8px;top:284.47px;width:1.4000000000000057px;height:13.4px;background:#fff"></div>
<div class="ab" style="left:140.2px;top:284.47px;width:1.200000000000017px;height:13.4px;background:#fff"></div>
<div class="ab" style="left:224px;top:284.47px;width:1.3000000000000114px;height:13.4px;background:#fff"></div>
<div class="ab" style="left:142px;top:285.47px;width:82px;height:11.4px;background:#fff"></div>
<div class="ab" style="left:7.8px;top:285.77px;font-size:10px;line-height:12.5px;color:#1a1a1a;letter-spacing:-0.25px">BASE1_1</div>
<div class="ab" style="left:52.5px;top:285.77px;width:47px;text-align:center;font-size:10px;line-height:12.5px;color:#1a1a1a">8061</div>
<div class="ab" style="left:108.2px;top:285.77px;width:31px;text-align:center;font-size:10px;line-height:12.5px;color:#1a1a1a">0</div>
<div class="ab" style="left:142.20px;top:285.37px;width:11.5px;height:11.2px;border:1.4px solid #3a3a3a;background:#fff"></div>
<div class="ab" style="left:155.98px;top:285.37px;width:11.5px;height:11.2px;border:1.4px solid #3a3a3a;background:#fff"></div>
<div class="ab" style="left:169.76px;top:285.37px;width:11.5px;height:11.2px;border:1.4px solid #3a3a3a;background:#fff"></div>
<div class="ab" style="left:183.54px;top:285.37px;width:11.5px;height:11.2px;border:1.4px solid #3a3a3a;background:#fff"></div>
<div class="ab" style="left:197.32px;top:285.37px;width:11.5px;height:11.2px;border:1.4px solid #3a3a3a;background:#fff"></div>
<div class="ab" style="left:211.10px;top:285.37px;width:11.5px;height:11.2px;border:1.4px solid #3a3a3a;background:#fff"></div>
<div class="ab" style="left:225.3px;top:285.47px;width:10.7px;height:12.4px;background:#fff"></div>
<div class="ab" style="left:225.9px;top:286.27px;width:9.3px;height:10px;background:#1e8fff"></div>
<div class="ab" style="left:5px;top:299.04px;width:231px;height:13.4px;background:#f9e4a6"></div>
<div class="ab" style="left:50.9px;top:299.04px;width:1.6000000000000014px;height:13.4px;background:#fff"></div>
<div class="ab" style="left:106.8px;top:299.04px;width:1.4000000000000057px;height:13.4px;background:#fff"></div>
<div class="ab" style="left:140.2px;top:299.04px;width:1.200000000000017px;height:13.4px;background:#fff"></div>
<div class="ab" style="left:224px;top:299.04px;width:1.3000000000000114px;height:13.4px;background:#fff"></div>
<div class="ab" style="left:142px;top:300.04px;width:82px;height:11.4px;background:#fff"></div>
<div class="ab" style="left:7.8px;top:300.34px;font-size:10px;line-height:12.5px;color:#1a1a1a;letter-spacing:-0.25px">DIFF_1</div>
<div class="ab" style="left:52.5px;top:300.34px;width:47px;text-align:center;font-size:10px;line-height:12.5px;color:#1a1a1a">0</div>
<div class="ab" style="left:108.2px;top:300.34px;width:31px;text-align:center;font-size:10px;line-height:12.5px;color:#1a1a1a">0</div>
<div class="ab" style="left:142.20px;top:299.94px;width:11.5px;height:11.2px;border:1.4px solid #3a3a3a;background:#fff"></div>
<div class="ab" style="left:155.98px;top:299.94px;width:11.5px;height:11.2px;border:1.4px solid #3a3a3a;background:#fff"></div>
<div class="ab" style="left:169.76px;top:299.94px;width:11.5px;height:11.2px;border:1.4px solid #3a3a3a;background:#fff"></div>
<div class="ab" style="left:183.54px;top:299.94px;width:11.5px;height:11.2px;border:1.4px solid #3a3a3a;background:#fff"></div>
<div class="ab" style="left:197.32px;top:299.94px;width:11.5px;height:11.2px;border:1.4px solid #3a3a3a;background:#fff"></div>
<div class="ab" style="left:211.10px;top:299.94px;width:11.5px;height:11.2px;border:1.4px solid #3a3a3a;background:#fff"></div>
<div class="ab" style="left:225.3px;top:300.04px;width:10.7px;height:12.4px;background:#fff"></div>
<div class="ab" style="left:225.9px;top:300.84px;width:9.3px;height:10px;background:#ff00ff"></div>
<div class="ab" style="left:5px;top:313.61px;width:231px;height:13.4px;background:#f9e4a6"></div>
<div class="ab" style="left:50.9px;top:313.61px;width:1.6000000000000014px;height:13.4px;background:#fff"></div>
<div class="ab" style="left:106.8px;top:313.61px;width:1.4000000000000057px;height:13.4px;background:#fff"></div>
<div class="ab" style="left:140.2px;top:313.61px;width:1.200000000000017px;height:13.4px;background:#fff"></div>
<div class="ab" style="left:224px;top:313.61px;width:1.3000000000000114px;height:13.4px;background:#fff"></div>
<div class="ab" style="left:142px;top:314.61px;width:82px;height:11.4px;background:#fff"></div>
<div class="ab" style="left:7.8px;top:314.91px;font-size:10px;line-height:12.5px;color:#1a1a1a;letter-spacing:-0.25px">THD_1</div>
<div class="ab" style="left:52.5px;top:314.91px;width:47px;text-align:center;font-size:10px;line-height:12.5px;color:#1a1a1a">50</div>
<div class="ab" style="left:108.2px;top:314.91px;width:31px;text-align:center;font-size:10px;line-height:12.5px;color:#1a1a1a">0</div>
<div class="ab" style="left:142.20px;top:314.51px;width:11.5px;height:11.2px;border:1.4px solid #3a3a3a;background:#fff"></div>
<div class="ab" style="left:155.98px;top:314.51px;width:11.5px;height:11.2px;border:1.4px solid #3a3a3a;background:#fff"></div>
<div class="ab" style="left:169.76px;top:314.51px;width:11.5px;height:11.2px;border:1.4px solid #3a3a3a;background:#fff"></div>
<div class="ab" style="left:183.54px;top:314.51px;width:11.5px;height:11.2px;border:1.4px solid #3a3a3a;background:#fff"><svg width="11" height="11" viewBox="0 0 11 11" style="position:absolute;left:-1px;top:-1px"><path d="M1.7 5.2 L4.5 8.1 L9.8 2.9" fill="none" stroke="#3c3c3c" stroke-width="1.2"/></svg></div>
<div class="ab" style="left:197.32px;top:314.51px;width:11.5px;height:11.2px;border:1.4px solid #3a3a3a;background:#fff"></div>
<div class="ab" style="left:211.10px;top:314.51px;width:11.5px;height:11.2px;border:1.4px solid #3a3a3a;background:#fff"></div>
<div class="ab" style="left:225.3px;top:314.61px;width:10.7px;height:12.4px;background:#fff"></div>
<div class="ab" style="left:225.9px;top:315.41px;width:9.3px;height:10px;background:#0000ff"></div>
<div class="ab" style="left:5px;top:328.18px;width:231px;height:13.4px;background:#f9e4a6"></div>
<div class="ab" style="left:50.9px;top:328.18px;width:1.6000000000000014px;height:13.4px;background:#fff"></div>
<div class="ab" style="left:106.8px;top:328.18px;width:1.4000000000000057px;height:13.4px;background:#fff"></div>
<div class="ab" style="left:140.2px;top:328.18px;width:1.200000000000017px;height:13.4px;background:#fff"></div>
<div class="ab" style="left:224px;top:328.18px;width:1.3000000000000114px;height:13.4px;background:#fff"></div>
<div class="ab" style="left:142px;top:329.18px;width:82px;height:11.4px;background:#fff"></div>
<div class="ab" style="left:7.8px;top:329.48px;font-size:10px;line-height:12.5px;color:#1a1a1a;letter-spacing:-0.25px">R_THD_1</div>
<div class="ab" style="left:52.5px;top:329.48px;width:47px;text-align:center;font-size:10px;line-height:12.5px;color:#1a1a1a">35</div>
<div class="ab" style="left:108.2px;top:329.48px;width:31px;text-align:center;font-size:10px;line-height:12.5px;color:#1a1a1a">0</div>
<div class="ab" style="left:142.20px;top:329.08px;width:11.5px;height:11.2px;border:1.4px solid #3a3a3a;background:#fff"></div>
<div class="ab" style="left:155.98px;top:329.08px;width:11.5px;height:11.2px;border:1.4px solid #3a3a3a;background:#fff"></div>
<div class="ab" style="left:169.76px;top:329.08px;width:11.5px;height:11.2px;border:1.4px solid #3a3a3a;background:#fff"></div>
<div class="ab" style="left:183.54px;top:329.08px;width:11.5px;height:11.2px;border:1.4px solid #3a3a3a;background:#fff"></div>
<div class="ab" style="left:197.32px;top:329.08px;width:11.5px;height:11.2px;border:1.4px solid #3a3a3a;background:#fff"></div>
<div class="ab" style="left:211.10px;top:329.08px;width:11.5px;height:11.2px;border:1.4px solid #3a3a3a;background:#fff"></div>
<div class="ab" style="left:225.3px;top:329.18px;width:10.7px;height:12.4px;background:#fff"></div>
<div class="ab" style="left:225.9px;top:329.98px;width:9.3px;height:10px;background:#ffff00"></div>
<div class="ab" style="left:5px;top:342.75px;width:231px;height:13.4px;background:#f9e4a6"></div>
<div class="ab" style="left:50.9px;top:342.75px;width:1.6000000000000014px;height:13.4px;background:#fff"></div>
<div class="ab" style="left:106.8px;top:342.75px;width:1.4000000000000057px;height:13.4px;background:#fff"></div>
<div class="ab" style="left:140.2px;top:342.75px;width:1.200000000000017px;height:13.4px;background:#fff"></div>
<div class="ab" style="left:224px;top:342.75px;width:1.3000000000000114px;height:13.4px;background:#fff"></div>
<div class="ab" style="left:142px;top:343.75px;width:82px;height:11.4px;background:#fff"></div>
<div class="ab" style="left:7.8px;top:344.05px;font-size:10px;line-height:12.5px;color:#1a1a1a;letter-spacing:-0.25px">KEY_1</div>
<div class="ab" style="left:52.5px;top:344.05px;width:47px;text-align:center;font-size:10px;line-height:12.5px;color:#1a1a1a">0</div>
<div class="ab" style="left:108.2px;top:344.05px;width:31px;text-align:center;font-size:10px;line-height:12.5px;color:#1a1a1a">0</div>
<div class="ab" style="left:142.20px;top:343.65px;width:11.5px;height:11.2px;border:1.4px solid #3a3a3a;background:#fff"></div>
<div class="ab" style="left:155.98px;top:343.65px;width:11.5px;height:11.2px;border:1.4px solid #3a3a3a;background:#fff"></div>
<div class="ab" style="left:169.76px;top:343.65px;width:11.5px;height:11.2px;border:1.4px solid #3a3a3a;background:#fff"></div>
<div class="ab" style="left:183.54px;top:343.65px;width:11.5px;height:11.2px;border:1.4px solid #3a3a3a;background:#fff"></div>
<div class="ab" style="left:197.32px;top:343.65px;width:11.5px;height:11.2px;border:1.4px solid #3a3a3a;background:#fff"></div>
<div class="ab" style="left:211.10px;top:343.65px;width:11.5px;height:11.2px;border:1.4px solid #3a3a3a;background:#fff"></div>
<div class="ab" style="left:225.3px;top:343.75px;width:10.7px;height:12.4px;background:#fff"></div>
<div class="ab" style="left:225.9px;top:344.55px;width:9.3px;height:10px;background:#9370db"></div>
<div class="ab" style="left:5px;top:357.32px;width:231px;height:13.4px;background:#f9e4a6"></div>
<div class="ab" style="left:50.9px;top:357.32px;width:1.6000000000000014px;height:13.4px;background:#fff"></div>
<div class="ab" style="left:106.8px;top:357.32px;width:1.4000000000000057px;height:13.4px;background:#fff"></div>
<div class="ab" style="left:140.2px;top:357.32px;width:1.200000000000017px;height:13.4px;background:#fff"></div>
<div class="ab" style="left:224px;top:357.32px;width:1.3000000000000114px;height:13.4px;background:#fff"></div>
<div class="ab" style="left:142px;top:358.32px;width:82px;height:11.4px;background:#fff"></div>
<div class="ab" style="left:7.8px;top:358.62px;font-size:10px;line-height:12.5px;color:#1a1a1a;letter-spacing:-0.25px">RAW0_2</div>
<div class="ab" style="left:52.5px;top:358.62px;width:47px;text-align:center;font-size:10px;line-height:12.5px;color:#1a1a1a">8136</div>
<div class="ab" style="left:108.2px;top:358.62px;width:31px;text-align:center;font-size:10px;line-height:12.5px;color:#1a1a1a">0</div>
<div class="ab" style="left:142.20px;top:358.22px;width:11.5px;height:11.2px;border:1.4px solid #3a3a3a;background:#fff"></div>
<div class="ab" style="left:155.98px;top:358.22px;width:11.5px;height:11.2px;border:1.4px solid #3a3a3a;background:#fff"></div>
<div class="ab" style="left:169.76px;top:358.22px;width:11.5px;height:11.2px;border:1.4px solid #3a3a3a;background:#fff"></div>
<div class="ab" style="left:183.54px;top:358.22px;width:11.5px;height:11.2px;border:1.4px solid #3a3a3a;background:#fff"></div>
<div class="ab" style="left:197.32px;top:358.22px;width:11.5px;height:11.2px;border:1.4px solid #3a3a3a;background:#fff"></div>
<div class="ab" style="left:211.10px;top:358.22px;width:11.5px;height:11.2px;border:1.4px solid #3a3a3a;background:#fff"></div>
<div class="ab" style="left:225.3px;top:358.32px;width:10.7px;height:12.4px;background:#fff"></div>
<div class="ab" style="left:225.9px;top:359.12px;width:9.3px;height:10px;background:#ff0000"></div>
<div class="ab" style="left:5px;top:371.89px;width:231px;height:13.4px;background:#f9e4a6"></div>
<div class="ab" style="left:50.9px;top:371.89px;width:1.6000000000000014px;height:13.4px;background:#fff"></div>
<div class="ab" style="left:106.8px;top:371.89px;width:1.4000000000000057px;height:13.4px;background:#fff"></div>
<div class="ab" style="left:140.2px;top:371.89px;width:1.200000000000017px;height:13.4px;background:#fff"></div>
<div class="ab" style="left:224px;top:371.89px;width:1.3000000000000114px;height:13.4px;background:#fff"></div>
<div class="ab" style="left:142px;top:372.89px;width:82px;height:11.4px;background:#fff"></div>
<div class="ab" style="left:7.8px;top:373.19px;font-size:10px;line-height:12.5px;color:#1a1a1a;letter-spacing:-0.25px">BASE0_2</div>
<div class="ab" style="left:52.5px;top:373.19px;width:47px;text-align:center;font-size:10px;line-height:12.5px;color:#1a1a1a">8133</div>
<div class="ab" style="left:108.2px;top:373.19px;width:31px;text-align:center;font-size:10px;line-height:12.5px;color:#1a1a1a">0</div>
<div class="ab" style="left:142.20px;top:372.79px;width:11.5px;height:11.2px;border:1.4px solid #3a3a3a;background:#fff"></div>
<div class="ab" style="left:155.98px;top:372.79px;width:11.5px;height:11.2px;border:1.4px solid #3a3a3a;background:#fff"></div>
<div class="ab" style="left:169.76px;top:372.79px;width:11.5px;height:11.2px;border:1.4px solid #3a3a3a;background:#fff"></div>
<div class="ab" style="left:183.54px;top:372.79px;width:11.5px;height:11.2px;border:1.4px solid #3a3a3a;background:#fff"></div>
<div class="ab" style="left:197.32px;top:372.79px;width:11.5px;height:11.2px;border:1.4px solid #3a3a3a;background:#fff"></div>
<div class="ab" style="left:211.10px;top:372.79px;width:11.5px;height:11.2px;border:1.4px solid #3a3a3a;background:#fff"></div>
<div class="ab" style="left:225.3px;top:372.89px;width:10.7px;height:12.4px;background:#fff"></div>
<div class="ab" style="left:225.9px;top:373.69px;width:9.3px;height:10px;background:#00f590"></div>
<div class="ab" style="left:5px;top:386.46px;width:231px;height:13.4px;background:#f9e4a6"></div>
<div class="ab" style="left:50.9px;top:386.46px;width:1.6000000000000014px;height:13.4px;background:#fff"></div>
<div class="ab" style="left:106.8px;top:386.46px;width:1.4000000000000057px;height:13.4px;background:#fff"></div>
<div class="ab" style="left:140.2px;top:386.46px;width:1.200000000000017px;height:13.4px;background:#fff"></div>
<div class="ab" style="left:224px;top:386.46px;width:1.3000000000000114px;height:13.4px;background:#fff"></div>
<div class="ab" style="left:142px;top:387.46px;width:82px;height:11.4px;background:#fff"></div>
<div class="ab" style="left:7.8px;top:387.76px;font-size:10px;line-height:12.5px;color:#1a1a1a;letter-spacing:-0.25px">RAW1_2</div>
<div class="ab" style="left:52.5px;top:387.76px;width:47px;text-align:center;font-size:10px;line-height:12.5px;color:#1a1a1a">8119</div>
<div class="ab" style="left:108.2px;top:387.76px;width:31px;text-align:center;font-size:10px;line-height:12.5px;color:#1a1a1a">0</div>
<div class="ab" style="left:142.20px;top:387.36px;width:11.5px;height:11.2px;border:1.4px solid #3a3a3a;background:#fff"></div>
<div class="ab" style="left:155.98px;top:387.36px;width:11.5px;height:11.2px;border:1.4px solid #3a3a3a;background:#fff"></div>
<div class="ab" style="left:169.76px;top:387.36px;width:11.5px;height:11.2px;border:1.4px solid #3a3a3a;background:#fff"></div>
<div class="ab" style="left:183.54px;top:387.36px;width:11.5px;height:11.2px;border:1.4px solid #3a3a3a;background:#fff"></div>
<div class="ab" style="left:197.32px;top:387.36px;width:11.5px;height:11.2px;border:1.4px solid #3a3a3a;background:#fff"></div>
<div class="ab" style="left:211.10px;top:387.36px;width:11.5px;height:11.2px;border:1.4px solid #3a3a3a;background:#fff"><svg width="11" height="11" viewBox="0 0 11 11" style="position:absolute;left:-1px;top:-1px"><path d="M1.7 5.2 L4.5 8.1 L9.8 2.9" fill="none" stroke="#3c3c3c" stroke-width="1.2"/></svg></div>
<div class="ab" style="left:225.3px;top:387.46px;width:10.7px;height:12.4px;background:#fff"></div>
<div class="ab" style="left:225.9px;top:388.26px;width:9.3px;height:10px;background:#ff80ff"></div>
<div class="ab" style="left:5px;top:401.03px;width:231px;height:13.4px;background:#f9e4a6"></div>
<div class="ab" style="left:50.9px;top:401.03px;width:1.6000000000000014px;height:13.4px;background:#fff"></div>
<div class="ab" style="left:106.8px;top:401.03px;width:1.4000000000000057px;height:13.4px;background:#fff"></div>
<div class="ab" style="left:140.2px;top:401.03px;width:1.200000000000017px;height:13.4px;background:#fff"></div>
<div class="ab" style="left:224px;top:401.03px;width:1.3000000000000114px;height:13.4px;background:#fff"></div>
<div class="ab" style="left:142px;top:402.03px;width:82px;height:11.4px;background:#fff"></div>
<div class="ab" style="left:7.8px;top:402.33px;font-size:10px;line-height:12.5px;color:#1a1a1a;letter-spacing:-0.25px">BASE1_2</div>
<div class="ab" style="left:52.5px;top:402.33px;width:47px;text-align:center;font-size:10px;line-height:12.5px;color:#1a1a1a">8118</div>
<div class="ab" style="left:108.2px;top:402.33px;width:31px;text-align:center;font-size:10px;line-height:12.5px;color:#1a1a1a">0</div>
<div class="ab" style="left:142.20px;top:401.93px;width:11.5px;height:11.2px;border:1.4px solid #3a3a3a;background:#fff"></div>
<div class="ab" style="left:155.98px;top:401.93px;width:11.5px;height:11.2px;border:1.4px solid #3a3a3a;background:#fff"></div>
<div class="ab" style="left:169.76px;top:401.93px;width:11.5px;height:11.2px;border:1.4px solid #3a3a3a;background:#fff"></div>
<div class="ab" style="left:183.54px;top:401.93px;width:11.5px;height:11.2px;border:1.4px solid #3a3a3a;background:#fff"></div>
<div class="ab" style="left:197.32px;top:401.93px;width:11.5px;height:11.2px;border:1.4px solid #3a3a3a;background:#fff"></div>
<div class="ab" style="left:211.10px;top:401.93px;width:11.5px;height:11.2px;border:1.4px solid #3a3a3a;background:#fff"></div>
<div class="ab" style="left:225.3px;top:402.03px;width:10.7px;height:12.4px;background:#fff"></div>
<div class="ab" style="left:225.9px;top:402.83px;width:9.3px;height:10px;background:#1e8fff"></div>
<div class="ab" style="left:5px;top:415.60px;width:231px;height:13.4px;background:#f9e4a6"></div>
<div class="ab" style="left:50.9px;top:415.60px;width:1.6000000000000014px;height:13.4px;background:#fff"></div>
<div class="ab" style="left:106.8px;top:415.60px;width:1.4000000000000057px;height:13.4px;background:#fff"></div>
<div class="ab" style="left:140.2px;top:415.60px;width:1.200000000000017px;height:13.4px;background:#fff"></div>
<div class="ab" style="left:224px;top:415.60px;width:1.3000000000000114px;height:13.4px;background:#fff"></div>
<div class="ab" style="left:142px;top:416.60px;width:82px;height:11.4px;background:#fff"></div>
<div class="ab" style="left:7.8px;top:416.90px;font-size:10px;line-height:12.5px;color:#1a1a1a;letter-spacing:-0.25px">DIFF_2</div>
<div class="ab" style="left:52.5px;top:416.90px;width:47px;text-align:center;font-size:10px;line-height:12.5px;color:#1a1a1a">0</div>
<div class="ab" style="left:108.2px;top:416.90px;width:31px;text-align:center;font-size:10px;line-height:12.5px;color:#1a1a1a">0</div>
<div class="ab" style="left:142.20px;top:416.50px;width:11.5px;height:11.2px;border:1.4px solid #3a3a3a;background:#fff"></div>
<div class="ab" style="left:155.98px;top:416.50px;width:11.5px;height:11.2px;border:1.4px solid #3a3a3a;background:#fff"></div>
<div class="ab" style="left:169.76px;top:416.50px;width:11.5px;height:11.2px;border:1.4px solid #3a3a3a;background:#fff"></div>
<div class="ab" style="left:183.54px;top:416.50px;width:11.5px;height:11.2px;border:1.4px solid #3a3a3a;background:#fff"></div>
<div class="ab" style="left:197.32px;top:416.50px;width:11.5px;height:11.2px;border:1.4px solid #3a3a3a;background:#fff"></div>
<div class="ab" style="left:211.10px;top:416.50px;width:11.5px;height:11.2px;border:1.4px solid #3a3a3a;background:#fff"></div>
<div class="ab" style="left:225.3px;top:416.60px;width:10.7px;height:12.4px;background:#fff"></div>
<div class="ab" style="left:225.9px;top:417.40px;width:9.3px;height:10px;background:#ff00ff"></div>
<div class="ab" style="left:5px;top:430.17px;width:231px;height:13.4px;background:#f9e4a6"></div>
<div class="ab" style="left:50.9px;top:430.17px;width:1.6000000000000014px;height:13.4px;background:#fff"></div>
<div class="ab" style="left:106.8px;top:430.17px;width:1.4000000000000057px;height:13.4px;background:#fff"></div>
<div class="ab" style="left:140.2px;top:430.17px;width:1.200000000000017px;height:13.4px;background:#fff"></div>
<div class="ab" style="left:224px;top:430.17px;width:1.3000000000000114px;height:13.4px;background:#fff"></div>
<div class="ab" style="left:142px;top:431.17px;width:82px;height:11.4px;background:#fff"></div>
<div class="ab" style="left:7.8px;top:431.47px;font-size:10px;line-height:12.5px;color:#1a1a1a;letter-spacing:-0.25px">THD_2</div>
<div class="ab" style="left:52.5px;top:431.47px;width:47px;text-align:center;font-size:10px;line-height:12.5px;color:#1a1a1a">50</div>
<div class="ab" style="left:108.2px;top:431.47px;width:31px;text-align:center;font-size:10px;line-height:12.5px;color:#1a1a1a">0</div>
<div class="ab" style="left:142.20px;top:431.07px;width:11.5px;height:11.2px;border:1.4px solid #3a3a3a;background:#fff"></div>
<div class="ab" style="left:155.98px;top:431.07px;width:11.5px;height:11.2px;border:1.4px solid #3a3a3a;background:#fff"></div>
<div class="ab" style="left:169.76px;top:431.07px;width:11.5px;height:11.2px;border:1.4px solid #3a3a3a;background:#fff"></div>
<div class="ab" style="left:183.54px;top:431.07px;width:11.5px;height:11.2px;border:1.4px solid #3a3a3a;background:#fff"></div>
<div class="ab" style="left:197.32px;top:431.07px;width:11.5px;height:11.2px;border:1.4px solid #3a3a3a;background:#fff"></div>
<div class="ab" style="left:211.10px;top:431.07px;width:11.5px;height:11.2px;border:1.4px solid #3a3a3a;background:#fff"></div>
<div class="ab" style="left:225.3px;top:431.17px;width:10.7px;height:12.4px;background:#fff"></div>
<div class="ab" style="left:225.9px;top:431.97px;width:9.3px;height:10px;background:#0000ff"></div>
<div class="ab" style="left:5px;top:444.74px;width:231px;height:13.4px;background:#f9e4a6"></div>
<div class="ab" style="left:50.9px;top:444.74px;width:1.6000000000000014px;height:13.4px;background:#fff"></div>
<div class="ab" style="left:106.8px;top:444.74px;width:1.4000000000000057px;height:13.4px;background:#fff"></div>
<div class="ab" style="left:140.2px;top:444.74px;width:1.200000000000017px;height:13.4px;background:#fff"></div>
<div class="ab" style="left:224px;top:444.74px;width:1.3000000000000114px;height:13.4px;background:#fff"></div>
<div class="ab" style="left:142px;top:445.74px;width:82px;height:11.4px;background:#fff"></div>
<div class="ab" style="left:7.8px;top:446.04px;font-size:10px;line-height:12.5px;color:#1a1a1a;letter-spacing:-0.25px">R_THD_2</div>
<div class="ab" style="left:52.5px;top:446.04px;width:47px;text-align:center;font-size:10px;line-height:12.5px;color:#1a1a1a">35</div>
<div class="ab" style="left:108.2px;top:446.04px;width:31px;text-align:center;font-size:10px;line-height:12.5px;color:#1a1a1a">0</div>
<div class="ab" style="left:142.20px;top:445.64px;width:11.5px;height:11.2px;border:1.4px solid #3a3a3a;background:#fff"></div>
<div class="ab" style="left:155.98px;top:445.64px;width:11.5px;height:11.2px;border:1.4px solid #3a3a3a;background:#fff"></div>
<div class="ab" style="left:169.76px;top:445.64px;width:11.5px;height:11.2px;border:1.4px solid #3a3a3a;background:#fff"></div>
<div class="ab" style="left:183.54px;top:445.64px;width:11.5px;height:11.2px;border:1.4px solid #3a3a3a;background:#fff"></div>
<div class="ab" style="left:197.32px;top:445.64px;width:11.5px;height:11.2px;border:1.4px solid #3a3a3a;background:#fff"></div>
<div class="ab" style="left:211.10px;top:445.64px;width:11.5px;height:11.2px;border:1.4px solid #3a3a3a;background:#fff"></div>
<div class="ab" style="left:225.3px;top:445.74px;width:10.7px;height:12.4px;background:#fff"></div>
<div class="ab" style="left:225.9px;top:446.54px;width:9.3px;height:10px;background:#ffff00"></div>
<div class="ab" style="left:5px;top:459.31px;width:231px;height:13.4px;background:#f9e4a6"></div>
<div class="ab" style="left:50.9px;top:459.31px;width:1.6000000000000014px;height:13.4px;background:#fff"></div>
<div class="ab" style="left:106.8px;top:459.31px;width:1.4000000000000057px;height:13.4px;background:#fff"></div>
<div class="ab" style="left:140.2px;top:459.31px;width:1.200000000000017px;height:13.4px;background:#fff"></div>
<div class="ab" style="left:224px;top:459.31px;width:1.3000000000000114px;height:13.4px;background:#fff"></div>
<div class="ab" style="left:142px;top:460.31px;width:82px;height:11.4px;background:#fff"></div>
<div class="ab" style="left:7.8px;top:460.61px;font-size:10px;line-height:12.5px;color:#1a1a1a;letter-spacing:-0.25px">KEY_2</div>
<div class="ab" style="left:52.5px;top:460.61px;width:47px;text-align:center;font-size:10px;line-height:12.5px;color:#1a1a1a">0</div>
<div class="ab" style="left:108.2px;top:460.61px;width:31px;text-align:center;font-size:10px;line-height:12.5px;color:#1a1a1a">0</div>
<div class="ab" style="left:142.20px;top:460.21px;width:11.5px;height:11.2px;border:1.4px solid #3a3a3a;background:#fff"></div>
<div class="ab" style="left:155.98px;top:460.21px;width:11.5px;height:11.2px;border:1.4px solid #3a3a3a;background:#fff"></div>
<div class="ab" style="left:169.76px;top:460.21px;width:11.5px;height:11.2px;border:1.4px solid #3a3a3a;background:#fff"></div>
<div class="ab" style="left:183.54px;top:460.21px;width:11.5px;height:11.2px;border:1.4px solid #3a3a3a;background:#fff"></div>
<div class="ab" style="left:197.32px;top:460.21px;width:11.5px;height:11.2px;border:1.4px solid #3a3a3a;background:#fff"></div>
<div class="ab" style="left:211.10px;top:460.21px;width:11.5px;height:11.2px;border:1.4px solid #3a3a3a;background:#fff"></div>
<div class="ab" style="left:225.3px;top:460.31px;width:10.7px;height:12.4px;background:#fff"></div>
<div class="ab" style="left:225.9px;top:461.11px;width:9.3px;height:10px;background:#9370db"></div>
<div class="ab" style="left:5px;top:473.88px;width:231px;height:13.4px;background:#f9e4a6"></div>
<div class="ab" style="left:50.9px;top:473.88px;width:1.6000000000000014px;height:13.4px;background:#fff"></div>
<div class="ab" style="left:106.8px;top:473.88px;width:1.4000000000000057px;height:13.4px;background:#fff"></div>
<div class="ab" style="left:140.2px;top:473.88px;width:1.200000000000017px;height:13.4px;background:#fff"></div>
<div class="ab" style="left:224px;top:473.88px;width:1.3000000000000114px;height:13.4px;background:#fff"></div>
<div class="ab" style="left:142px;top:474.88px;width:82px;height:11.4px;background:#fff"></div>
<div class="ab" style="left:7.8px;top:475.18px;font-size:10px;line-height:12.5px;color:#1a1a1a;letter-spacing:-0.25px">RAW0_3</div>
<div class="ab" style="left:52.5px;top:475.18px;width:47px;text-align:center;font-size:10px;line-height:12.5px;color:#1a1a1a">8095</div>
<div class="ab" style="left:108.2px;top:475.18px;width:31px;text-align:center;font-size:10px;line-height:12.5px;color:#1a1a1a">0</div>
<div class="ab" style="left:142.20px;top:474.78px;width:11.5px;height:11.2px;border:1.4px solid #3a3a3a;background:#fff"></div>
<div class="ab" style="left:155.98px;top:474.78px;width:11.5px;height:11.2px;border:1.4px solid #3a3a3a;background:#fff"></div>
<div class="ab" style="left:169.76px;top:474.78px;width:11.5px;height:11.2px;border:1.4px solid #3a3a3a;background:#fff"></div>
<div class="ab" style="left:183.54px;top:474.78px;width:11.5px;height:11.2px;border:1.4px solid #3a3a3a;background:#fff"></div>
<div class="ab" style="left:197.32px;top:474.78px;width:11.5px;height:11.2px;border:1.4px solid #3a3a3a;background:#fff"><svg width="11" height="11" viewBox="0 0 11 11" style="position:absolute;left:-1px;top:-1px"><path d="M1.7 5.2 L4.5 8.1 L9.8 2.9" fill="none" stroke="#3c3c3c" stroke-width="1.2"/></svg></div>
<div class="ab" style="left:211.10px;top:474.78px;width:11.5px;height:11.2px;border:1.4px solid #3a3a3a;background:#fff"></div>
<div class="ab" style="left:225.3px;top:474.88px;width:10.7px;height:12.4px;background:#fff"></div>
<div class="ab" style="left:225.9px;top:475.68px;width:9.3px;height:10px;background:#ffffff"></div>
<div class="ab" style="left:5px;top:488.45px;width:231px;height:13.4px;background:#f9e4a6"></div>
<div class="ab" style="left:50.9px;top:488.45px;width:1.6000000000000014px;height:13.4px;background:#fff"></div>
<div class="ab" style="left:106.8px;top:488.45px;width:1.4000000000000057px;height:13.4px;background:#fff"></div>
<div class="ab" style="left:140.2px;top:488.45px;width:1.200000000000017px;height:13.4px;background:#fff"></div>
<div class="ab" style="left:224px;top:488.45px;width:1.3000000000000114px;height:13.4px;background:#fff"></div>
<div class="ab" style="left:142px;top:489.45px;width:82px;height:11.4px;background:#fff"></div>
<div class="ab" style="left:7.8px;top:489.75px;font-size:10px;line-height:12.5px;color:#1a1a1a;letter-spacing:-0.25px">BASE0_3</div>
<div class="ab" style="left:52.5px;top:489.75px;width:47px;text-align:center;font-size:10px;line-height:12.5px;color:#1a1a1a">8095</div>
<div class="ab" style="left:108.2px;top:489.75px;width:31px;text-align:center;font-size:10px;line-height:12.5px;color:#1a1a1a">0</div>
<div class="ab" style="left:142.20px;top:489.35px;width:11.5px;height:11.2px;border:1.4px solid #3a3a3a;background:#fff"></div>
<div class="ab" style="left:155.98px;top:489.35px;width:11.5px;height:11.2px;border:1.4px solid #3a3a3a;background:#fff"></div>
<div class="ab" style="left:169.76px;top:489.35px;width:11.5px;height:11.2px;border:1.4px solid #3a3a3a;background:#fff"></div>
<div class="ab" style="left:183.54px;top:489.35px;width:11.5px;height:11.2px;border:1.4px solid #3a3a3a;background:#fff"></div>
<div class="ab" style="left:197.32px;top:489.35px;width:11.5px;height:11.2px;border:1.4px solid #3a3a3a;background:#fff"></div>
<div class="ab" style="left:211.10px;top:489.35px;width:11.5px;height:11.2px;border:1.4px solid #3a3a3a;background:#fff"></div>
<div class="ab" style="left:225.3px;top:489.45px;width:10.7px;height:12.4px;background:#fff"></div>
<div class="ab" style="left:225.9px;top:490.25px;width:9.3px;height:10px;background:#00f590"></div>
<div class="ab" style="left:5px;top:503.02px;width:231px;height:13.4px;background:#f9e4a6"></div>
<div class="ab" style="left:50.9px;top:503.02px;width:1.6000000000000014px;height:13.4px;background:#fff"></div>
<div class="ab" style="left:106.8px;top:503.02px;width:1.4000000000000057px;height:13.4px;background:#fff"></div>
<div class="ab" style="left:140.2px;top:503.02px;width:1.200000000000017px;height:13.4px;background:#fff"></div>
<div class="ab" style="left:224px;top:503.02px;width:1.3000000000000114px;height:13.4px;background:#fff"></div>
<div class="ab" style="left:142px;top:504.02px;width:82px;height:11.4px;background:#fff"></div>
<div class="ab" style="left:7.8px;top:504.32px;font-size:10px;line-height:12.5px;color:#1a1a1a;letter-spacing:-0.25px">RAW1_3</div>
<div class="ab" style="left:52.5px;top:504.32px;width:47px;text-align:center;font-size:10px;line-height:12.5px;color:#1a1a1a">8077</div>
<div class="ab" style="left:108.2px;top:504.32px;width:31px;text-align:center;font-size:10px;line-height:12.5px;color:#1a1a1a">0</div>
<div class="ab" style="left:142.20px;top:503.92px;width:11.5px;height:11.2px;border:1.4px solid #3a3a3a;background:#fff"></div>
<div class="ab" style="left:155.98px;top:503.92px;width:11.5px;height:11.2px;border:1.4px solid #3a3a3a;background:#fff"></div>
<div class="ab" style="left:169.76px;top:503.92px;width:11.5px;height:11.2px;border:1.4px solid #3a3a3a;background:#fff"></div>
<div class="ab" style="left:183.54px;top:503.92px;width:11.5px;height:11.2px;border:1.4px solid #3a3a3a;background:#fff"></div>
<div class="ab" style="left:197.32px;top:503.92px;width:11.5px;height:11.2px;border:1.4px solid #3a3a3a;background:#fff"></div>
<div class="ab" style="left:211.10px;top:503.92px;width:11.5px;height:11.2px;border:1.4px solid #3a3a3a;background:#fff"></div>
<div class="ab" style="left:225.3px;top:504.02px;width:10.7px;height:12.4px;background:#fff"></div>
<div class="ab" style="left:225.9px;top:504.82px;width:9.3px;height:10px;background:#ff9f00"></div>
<div class="ab" style="left:5px;top:517.59px;width:231px;height:13.4px;background:#f9e4a6"></div>
<div class="ab" style="left:50.9px;top:517.59px;width:1.6000000000000014px;height:13.4px;background:#fff"></div>
<div class="ab" style="left:106.8px;top:517.59px;width:1.4000000000000057px;height:13.4px;background:#fff"></div>
<div class="ab" style="left:140.2px;top:517.59px;width:1.200000000000017px;height:13.4px;background:#fff"></div>
<div class="ab" style="left:224px;top:517.59px;width:1.3000000000000114px;height:13.4px;background:#fff"></div>
<div class="ab" style="left:142px;top:518.59px;width:82px;height:11.4px;background:#fff"></div>
<div class="ab" style="left:7.8px;top:518.89px;font-size:10px;line-height:12.5px;color:#1a1a1a;letter-spacing:-0.25px">BASE1_3</div>
<div class="ab" style="left:52.5px;top:518.89px;width:47px;text-align:center;font-size:10px;line-height:12.5px;color:#1a1a1a">8077</div>
<div class="ab" style="left:108.2px;top:518.89px;width:31px;text-align:center;font-size:10px;line-height:12.5px;color:#1a1a1a">0</div>
<div class="ab" style="left:142.20px;top:518.49px;width:11.5px;height:11.2px;border:1.4px solid #3a3a3a;background:#fff"></div>
<div class="ab" style="left:155.98px;top:518.49px;width:11.5px;height:11.2px;border:1.4px solid #3a3a3a;background:#fff"></div>
<div class="ab" style="left:169.76px;top:518.49px;width:11.5px;height:11.2px;border:1.4px solid #3a3a3a;background:#fff"></div>
<div class="ab" style="left:183.54px;top:518.49px;width:11.5px;height:11.2px;border:1.4px solid #3a3a3a;background:#fff"></div>
<div class="ab" style="left:197.32px;top:518.49px;width:11.5px;height:11.2px;border:1.4px solid #3a3a3a;background:#fff"></div>
<div class="ab" style="left:211.10px;top:518.49px;width:11.5px;height:11.2px;border:1.4px solid #3a3a3a;background:#fff"></div>
<div class="ab" style="left:225.3px;top:518.59px;width:10.7px;height:12.4px;background:#fff"></div>
<div class="ab" style="left:225.9px;top:519.39px;width:9.3px;height:10px;background:#1e8fff"></div>
<div class="ab" style="left:5px;top:532.16px;width:231px;height:13.4px;background:#f9e4a6"></div>
<div class="ab" style="left:50.9px;top:532.16px;width:1.6000000000000014px;height:13.4px;background:#fff"></div>
<div class="ab" style="left:106.8px;top:532.16px;width:1.4000000000000057px;height:13.4px;background:#fff"></div>
<div class="ab" style="left:140.2px;top:532.16px;width:1.200000000000017px;height:13.4px;background:#fff"></div>
<div class="ab" style="left:224px;top:532.16px;width:1.3000000000000114px;height:13.4px;background:#fff"></div>
<div class="ab" style="left:142px;top:533.16px;width:82px;height:11.4px;background:#fff"></div>
<div class="ab" style="left:7.8px;top:533.46px;font-size:10px;line-height:12.5px;color:#1a1a1a;letter-spacing:-0.25px">DIFF_3</div>
<div class="ab" style="left:52.5px;top:533.46px;width:47px;text-align:center;font-size:10px;line-height:12.5px;color:#1a1a1a">0</div>
<div class="ab" style="left:108.2px;top:533.46px;width:31px;text-align:center;font-size:10px;line-height:12.5px;color:#1a1a1a">0</div>
<div class="ab" style="left:142.20px;top:533.06px;width:11.5px;height:11.2px;border:1.4px solid #3a3a3a;background:#fff"></div>
<div class="ab" style="left:155.98px;top:533.06px;width:11.5px;height:11.2px;border:1.4px solid #3a3a3a;background:#fff"></div>
<div class="ab" style="left:169.76px;top:533.06px;width:11.5px;height:11.2px;border:1.4px solid #3a3a3a;background:#fff"></div>
<div class="ab" style="left:183.54px;top:533.06px;width:11.5px;height:11.2px;border:1.4px solid #3a3a3a;background:#fff"></div>
<div class="ab" style="left:197.32px;top:533.06px;width:11.5px;height:11.2px;border:1.4px solid #3a3a3a;background:#fff"></div>
<div class="ab" style="left:211.10px;top:533.06px;width:11.5px;height:11.2px;border:1.4px solid #3a3a3a;background:#fff"></div>
<div class="ab" style="left:225.3px;top:533.16px;width:10.7px;height:12.4px;background:#fff"></div>
<div class="ab" style="left:225.9px;top:533.96px;width:9.3px;height:10px;background:#ff00ff"></div>
<div class="ab" style="left:5px;top:546.73px;width:231px;height:13.4px;background:#f9e4a6"></div>
<div class="ab" style="left:50.9px;top:546.73px;width:1.6000000000000014px;height:13.4px;background:#fff"></div>
<div class="ab" style="left:106.8px;top:546.73px;width:1.4000000000000057px;height:13.4px;background:#fff"></div>
<div class="ab" style="left:140.2px;top:546.73px;width:1.200000000000017px;height:13.4px;background:#fff"></div>
<div class="ab" style="left:224px;top:546.73px;width:1.3000000000000114px;height:13.4px;background:#fff"></div>
<div class="ab" style="left:142px;top:547.73px;width:82px;height:11.4px;background:#fff"></div>
<div class="ab" style="left:7.8px;top:548.03px;font-size:10px;line-height:12.5px;color:#1a1a1a;letter-spacing:-0.25px">THD_3</div>
<div class="ab" style="left:52.5px;top:548.03px;width:47px;text-align:center;font-size:10px;line-height:12.5px;color:#1a1a1a">50</div>
<div class="ab" style="left:108.2px;top:548.03px;width:31px;text-align:center;font-size:10px;line-height:12.5px;color:#1a1a1a">0</div>
<div class="ab" style="left:142.20px;top:547.63px;width:11.5px;height:11.2px;border:1.4px solid #3a3a3a;background:#fff"></div>
<div class="ab" style="left:155.98px;top:547.63px;width:11.5px;height:11.2px;border:1.4px solid #3a3a3a;background:#fff"></div>
<div class="ab" style="left:169.76px;top:547.63px;width:11.5px;height:11.2px;border:1.4px solid #3a3a3a;background:#fff"></div>
<div class="ab" style="left:183.54px;top:547.63px;width:11.5px;height:11.2px;border:1.4px solid #3a3a3a;background:#fff"></div>
<div class="ab" style="left:197.32px;top:547.63px;width:11.5px;height:11.2px;border:1.4px solid #3a3a3a;background:#fff"></div>
<div class="ab" style="left:211.10px;top:547.63px;width:11.5px;height:11.2px;border:1.4px solid #3a3a3a;background:#fff"></div>
<div class="ab" style="left:225.3px;top:547.73px;width:10.7px;height:12.4px;background:#fff"></div>
<div class="ab" style="left:225.9px;top:548.53px;width:9.3px;height:10px;background:#0000ff"></div>
<div class="ab" style="left:5px;top:561.30px;width:231px;height:13.4px;background:#f9e4a6"></div>
<div class="ab" style="left:50.9px;top:561.30px;width:1.6000000000000014px;height:13.4px;background:#fff"></div>
<div class="ab" style="left:106.8px;top:561.30px;width:1.4000000000000057px;height:13.4px;background:#fff"></div>
<div class="ab" style="left:140.2px;top:561.30px;width:1.200000000000017px;height:13.4px;background:#fff"></div>
<div class="ab" style="left:224px;top:561.30px;width:1.3000000000000114px;height:13.4px;background:#fff"></div>
<div class="ab" style="left:142px;top:562.30px;width:82px;height:11.4px;background:#fff"></div>
<div class="ab" style="left:7.8px;top:562.60px;font-size:10px;line-height:12.5px;color:#1a1a1a;letter-spacing:-0.25px">R_THD_3</div>
<div class="ab" style="left:52.5px;top:562.60px;width:47px;text-align:center;font-size:10px;line-height:12.5px;color:#1a1a1a">35</div>
<div class="ab" style="left:108.2px;top:562.60px;width:31px;text-align:center;font-size:10px;line-height:12.5px;color:#1a1a1a">0</div>
<div class="ab" style="left:142.20px;top:562.20px;width:11.5px;height:11.2px;border:1.4px solid #3a3a3a;background:#fff"></div>
<div class="ab" style="left:155.98px;top:562.20px;width:11.5px;height:11.2px;border:1.4px solid #3a3a3a;background:#fff"></div>
<div class="ab" style="left:169.76px;top:562.20px;width:11.5px;height:11.2px;border:1.4px solid #3a3a3a;background:#fff"></div>
<div class="ab" style="left:183.54px;top:562.20px;width:11.5px;height:11.2px;border:1.4px solid #3a3a3a;background:#fff"></div>
<div class="ab" style="left:197.32px;top:562.20px;width:11.5px;height:11.2px;border:1.4px solid #3a3a3a;background:#fff"></div>
<div class="ab" style="left:211.10px;top:562.20px;width:11.5px;height:11.2px;border:1.4px solid #3a3a3a;background:#fff"></div>
<div class="ab" style="left:225.3px;top:562.30px;width:10.7px;height:12.4px;background:#fff"></div>
<div class="ab" style="left:225.9px;top:563.10px;width:9.3px;height:10px;background:#ffff00"></div>
<div class="ab" style="left:5px;top:575.87px;width:231px;height:13.4px;background:#f9e4a6"></div>
<div class="ab" style="left:50.9px;top:575.87px;width:1.6000000000000014px;height:13.4px;background:#fff"></div>
<div class="ab" style="left:106.8px;top:575.87px;width:1.4000000000000057px;height:13.4px;background:#fff"></div>
<div class="ab" style="left:140.2px;top:575.87px;width:1.200000000000017px;height:13.4px;background:#fff"></div>
<div class="ab" style="left:224px;top:575.87px;width:1.3000000000000114px;height:13.4px;background:#fff"></div>
<div class="ab" style="left:142px;top:576.87px;width:82px;height:11.4px;background:#fff"></div>
<div class="ab" style="left:7.8px;top:577.17px;font-size:10px;line-height:12.5px;color:#1a1a1a;letter-spacing:-0.25px">KEY_3</div>
<div class="ab" style="left:52.5px;top:577.17px;width:47px;text-align:center;font-size:10px;line-height:12.5px;color:#1a1a1a">0</div>
<div class="ab" style="left:108.2px;top:577.17px;width:31px;text-align:center;font-size:10px;line-height:12.5px;color:#1a1a1a">0</div>
<div class="ab" style="left:142.20px;top:576.77px;width:11.5px;height:11.2px;border:1.4px solid #3a3a3a;background:#fff"></div>
<div class="ab" style="left:155.98px;top:576.77px;width:11.5px;height:11.2px;border:1.4px solid #3a3a3a;background:#fff"></div>
<div class="ab" style="left:169.76px;top:576.77px;width:11.5px;height:11.2px;border:1.4px solid #3a3a3a;background:#fff"></div>
<div class="ab" style="left:183.54px;top:576.77px;width:11.5px;height:11.2px;border:1.4px solid #3a3a3a;background:#fff"></div>
<div class="ab" style="left:197.32px;top:576.77px;width:11.5px;height:11.2px;border:1.4px solid #3a3a3a;background:#fff"></div>
<div class="ab" style="left:211.10px;top:576.77px;width:11.5px;height:11.2px;border:1.4px solid #3a3a3a;background:#fff"></div>
<div class="ab" style="left:225.3px;top:576.87px;width:10.7px;height:12.4px;background:#fff"></div>
<div class="ab" style="left:225.9px;top:577.67px;width:9.3px;height:10px;background:#9370db"></div>
<div class="ab" style="left:3.7px;top:592.2px;width:136px;height:19.5px;background:#dcdcdc;font-family:'Liberation Mono',monospace;font-size:8.6px;line-height:22.5px;text-align:center;color:#5b6878">Initialize Naming</div>
<div class="ab" style="left:141.8px;top:593px;width:92.4px;height:19.5px;background:#dcdcdc;font-family:'Liberation Mono',monospace;font-size:8.8px;line-height:22px;text-align:center;color:#1a1a1a;-webkit-text-stroke:0.2px #1a1a1a">UnCheck</div>
<div class="ab" style="left:1px;top:717px;width:1166px;height:13px;background:#0066cc"></div>
<div class="ab" style="left:8.2px;top:718.5px;font-size:11px;line-height:13.5px;font-weight:bold;color:#fff">10:23:39&nbsp; All write. Done.</div>
<div class="ab" style="left:1059.5px;top:703.5px;font-size:10.8px;line-height:12px;font-weight:bold;color:#111;letter-spacing:0px">2023-11-16&nbsp;&nbsp;13:27:06</div>
<div class="ab" style="left:238px;top:109.5px;width:685.5px;height:607.5px;background:#c8c8c8"></div>
<div class="ab" style="left:238px;top:109.5px;width:685.5px;height:101.5px;background:#161616;border:1px solid #050505"></div>
<div class="ab" style="left:263.1px;top:112.1px;width:10.1px;height:10px;background:#fff"></div>
<div class="ab" style="left:277.7px;top:112.1px;font-size:10px;line-height:12px;color:#e8e8e8">Manual</div>
<div class="ab" style="left:320.4px;top:112.1px;font-size:10px;line-height:12px;color:#e8e8e8">Min</div>
<div class="ab" style="left:354.9px;top:112.1px;font-size:10px;line-height:12px;color:#e8e8e8">0</div>
<div class="ab" style="left:375.8px;top:112.1px;font-size:10px;line-height:12px;color:#e8e8e8">Max</div>
<div class="ab" style="left:402.2px;top:112.1px;font-size:10px;line-height:12px;color:#e8e8e8">5000</div>
<div class="ab" style="left:434.3px;top:110.4px;width:42.8px;height:18px;background:#fff"></div>
<div class="ab" style="left:462.7px;top:111.9px;width:12.5px;height:15px;background:#e6e6e6"></div>
<svg class="ab" style="left:466.5px;top:118.5px" width="5" height="3" viewBox="0 0 5 3"><path d="M0 0 L5 0 L2.5 2.8Z" fill="#111"/></svg>
<div class="ab" style="left:437.3px;top:114.5px;font-size:8.5px;line-height:10px;color:#111;-webkit-text-stroke:0.2px #111">1000</div>
<div class="ab" style="left:509.2px;top:111.8px;font-size:10px;line-height:12px;letter-spacing:-0.15px;color:#a6e33a">Min= 8445 Max= 8452 Gap=7&nbsp;&nbsp;&nbsp;[1000/1000]</div>
<div class="ab" style="left:234px;top:124.80px;width:40px;text-align:center;font-size:9px;line-height:11px;font-weight:bold;letter-spacing:-0.2px;color:#9ee23a">8452</div>
<div class="ab" style="left:234px;top:143.00px;width:40px;text-align:center;font-size:9px;line-height:11px;font-weight:bold;letter-spacing:-0.2px;color:#9ee23a">8451</div>
<div class="ab" style="left:234px;top:161.20px;width:40px;text-align:center;font-size:9px;line-height:11px;font-weight:bold;letter-spacing:-0.2px;color:#9ee23a">8449</div>
<div class="ab" style="left:234px;top:179.40px;width:40px;text-align:center;font-size:9px;line-height:11px;font-weight:bold;letter-spacing:-0.2px;color:#9ee23a">8447</div>
<div class="ab" style="left:234px;top:197.60px;width:40px;text-align:center;font-size:9px;line-height:11px;font-weight:bold;letter-spacing:-0.2px;color:#9ee23a">8445</div>
<div class="ab" style="left:907.5px;top:141.8px;width:19.5px;overflow:hidden;font-size:8.8px;line-height:9px;color:#ff1a1a;z-index:3">RAW0</div>
<div class="ab" style="left:264.8px;top:130.8px;font-size:9.6px;line-height:11px;letter-spacing:-0.1px;color:#ff2020;z-index:3">Mark=(&nbsp;&nbsp;346, 8478),(&nbsp;&nbsp;346, 8478)&nbsp;&nbsp;Gap=0</div>
<div class="ab" style="left:238px;top:211.5px;width:685.5px;height:101.5px;background:#161616;border:1px solid #050505"></div>
<div class="ab" style="left:263.1px;top:214.1px;width:10.1px;height:10px;background:#fff"></div>
<div class="ab" style="left:277.7px;top:214.1px;font-size:10px;line-height:12px;color:#e8e8e8">Manual</div>
<div class="ab" style="left:320.4px;top:214.1px;font-size:10px;line-height:12px;color:#e8e8e8">Min</div>
<div class="ab" style="left:354.9px;top:214.1px;font-size:10px;line-height:12px;color:#e8e8e8">0</div>
<div class="ab" style="left:375.8px;top:214.1px;font-size:10px;line-height:12px;color:#e8e8e8">Max</div>
<div class="ab" style="left:402.2px;top:214.1px;font-size:10px;line-height:12px;color:#e8e8e8">5000</div>
<div class="ab" style="left:434.3px;top:212.4px;width:42.8px;height:18px;background:#fff"></div>
<div class="ab" style="left:462.7px;top:213.9px;width:12.5px;height:15px;background:#e6e6e6"></div>
<svg class="ab" style="left:466.5px;top:220.5px" width="5" height="3" viewBox="0 0 5 3"><path d="M0 0 L5 0 L2.5 2.8Z" fill="#111"/></svg>
<div class="ab" style="left:437.3px;top:216.5px;font-size:8.5px;line-height:10px;color:#111;-webkit-text-stroke:0.2px #111">1000</div>
<div class="ab" style="left:509.2px;top:213.79999999999998px;font-size:10px;line-height:12px;letter-spacing:-0.15px;color:#a6e33a">Min= 8447 Max= 8448 Gap=1&nbsp;&nbsp;&nbsp;[1000/1000]</div>
<div class="ab" style="left:234px;top:226.80px;width:40px;text-align:center;font-size:9px;line-height:11px;font-weight:bold;letter-spacing:-0.2px;color:#9ee23a">8450</div>
<div class="ab" style="left:234px;top:245.00px;width:40px;text-align:center;font-size:9px;line-height:11px;font-weight:bold;letter-spacing:-0.2px;color:#9ee23a">8449</div>
<div class="ab" style="left:234px;top:263.20px;width:40px;text-align:center;font-size:9px;line-height:11px;font-weight:bold;letter-spacing:-0.2px;color:#9ee23a">8448</div>
<div class="ab" style="left:234px;top:281.40px;width:40px;text-align:center;font-size:9px;line-height:11px;font-weight:bold;letter-spacing:-0.2px;color:#9ee23a">8447</div>
<div class="ab" style="left:234px;top:299.60px;width:40px;text-align:center;font-size:9px;line-height:11px;font-weight:bold;letter-spacing:-0.2px;color:#9ee23a">8446</div>
<div class="ab" style="left:907.5px;top:277.6px;width:19.5px;overflow:hidden;font-size:8.8px;line-height:9px;color:#24dca0;z-index:3">BASE0</div>
<div class="ab" style="left:238px;top:313.5px;width:685.5px;height:101.5px;background:#161616;border:1px solid #050505"></div>
<div class="ab" style="left:263.1px;top:316.1px;width:10.1px;height:10px;background:#fff"></div>
<div class="ab" style="left:277.7px;top:316.1px;font-size:10px;line-height:12px;color:#e8e8e8">Manual</div>
<div class="ab" style="left:320.4px;top:316.1px;font-size:10px;line-height:12px;color:#e8e8e8">Min</div>
<div class="ab" style="left:354.9px;top:316.1px;font-size:10px;line-height:12px;color:#e8e8e8">0</div>
<div class="ab" style="left:375.8px;top:316.1px;font-size:10px;line-height:12px;color:#e8e8e8">Max</div>
<div class="ab" style="left:402.2px;top:316.1px;font-size:10px;line-height:12px;color:#e8e8e8">5000</div>
<div class="ab" style="left:434.3px;top:314.4px;width:42.8px;height:18px;background:#fff"></div>
<div class="ab" style="left:462.7px;top:315.9px;width:12.5px;height:15px;background:#e6e6e6"></div>
<svg class="ab" style="left:466.5px;top:322.5px" width="5" height="3" viewBox="0 0 5 3"><path d="M0 0 L5 0 L2.5 2.8Z" fill="#111"/></svg>
<div class="ab" style="left:437.3px;top:318.5px;font-size:8.5px;line-height:10px;color:#111;-webkit-text-stroke:0.2px #111">1000</div>
<div class="ab" style="left:509.2px;top:315.8px;font-size:10px;line-height:12px;letter-spacing:-0.15px;color:#a6e33a">Min= 8430 Max= 8436 Gap=6&nbsp;&nbsp;&nbsp;[1000/1000]</div>
<div class="ab" style="left:234px;top:328.80px;width:40px;text-align:center;font-size:9px;line-height:11px;font-weight:bold;letter-spacing:-0.2px;color:#9ee23a">8436</div>
<div class="ab" style="left:234px;top:347.00px;width:40px;text-align:center;font-size:9px;line-height:11px;font-weight:bold;letter-spacing:-0.2px;color:#9ee23a">8435</div>
<div class="ab" style="left:234px;top:365.20px;width:40px;text-align:center;font-size:9px;line-height:11px;font-weight:bold;letter-spacing:-0.2px;color:#9ee23a">8433</div>
<div class="ab" style="left:234px;top:383.40px;width:40px;text-align:center;font-size:9px;line-height:11px;font-weight:bold;letter-spacing:-0.2px;color:#9ee23a">8431</div>
<div class="ab" style="left:234px;top:401.60px;width:40px;text-align:center;font-size:9px;line-height:11px;font-weight:bold;letter-spacing:-0.2px;color:#9ee23a">8430</div>
<div class="ab" style="left:907.5px;top:361.4px;width:19.5px;overflow:hidden;font-size:8.8px;line-height:9px;color:#ffa500;z-index:3">RAW1</div>
<div class="ab" style="left:238px;top:415.5px;width:685.5px;height:101.5px;background:#161616;border:1px solid #050505"></div>
<div class="ab" style="left:263.1px;top:418.1px;width:10.1px;height:10px;background:#fff"></div>
<div class="ab" style="left:277.7px;top:418.1px;font-size:10px;line-height:12px;color:#e8e8e8">Manual</div>
<div class="ab" style="left:320.4px;top:418.1px;font-size:10px;line-height:12px;color:#e8e8e8">Min</div>
<div class="ab" style="left:354.9px;top:418.1px;font-size:10px;line-height:12px;color:#e8e8e8">0</div>
<div class="ab" style="left:375.8px;top:418.1px;font-size:10px;line-height:12px;color:#e8e8e8">Max</div>
<div class="ab" style="left:402.2px;top:418.1px;font-size:10px;line-height:12px;color:#e8e8e8">5000</div>
<div class="ab" style="left:434.3px;top:416.4px;width:42.8px;height:18px;background:#fff"></div>
<div class="ab" style="left:462.7px;top:417.9px;width:12.5px;height:15px;background:#e6e6e6"></div>
<svg class="ab" style="left:466.5px;top:424.5px" width="5" height="3" viewBox="0 0 5 3"><path d="M0 0 L5 0 L2.5 2.8Z" fill="#111"/></svg>
<div class="ab" style="left:437.3px;top:420.5px;font-size:8.5px;line-height:10px;color:#111;-webkit-text-stroke:0.2px #111">1000</div>
<div class="ab" style="left:509.2px;top:417.8px;font-size:10px;line-height:12px;letter-spacing:-0.15px;color:#a6e33a">Min=&nbsp;&nbsp;&nbsp;50 Max=&nbsp;&nbsp;&nbsp;50 Gap=0&nbsp;&nbsp;&nbsp;[1000/1000]</div>
<div class="ab" style="left:234px;top:430.80px;width:40px;text-align:center;font-size:9px;line-height:11px;font-weight:bold;letter-spacing:-0.2px;color:#9ee23a">53</div>
<div class="ab" style="left:234px;top:449.00px;width:40px;text-align:center;font-size:9px;line-height:11px;font-weight:bold;letter-spacing:-0.2px;color:#9ee23a">52</div>
<div class="ab" style="left:234px;top:467.20px;width:40px;text-align:center;font-size:9px;line-height:11px;font-weight:bold;letter-spacing:-0.2px;color:#9ee23a">51</div>
<div class="ab" style="left:234px;top:485.40px;width:40px;text-align:center;font-size:9px;line-height:11px;font-weight:bold;letter-spacing:-0.2px;color:#9ee23a">50</div>
<div class="ab" style="left:234px;top:503.60px;width:40px;text-align:center;font-size:9px;line-height:11px;font-weight:bold;letter-spacing:-0.2px;color:#9ee23a">49</div>
<div class="ab" style="left:907.5px;top:481.6px;width:19.5px;overflow:hidden;font-size:8.8px;line-height:9px;color:#0000dd;z-index:3">THD</div>
<div class="ab" style="left:238px;top:517.5px;width:685.5px;height:101.5px;background:#161616;border:1px solid #050505"></div>
<div class="ab" style="left:263.1px;top:520.1px;width:10.1px;height:10px;background:#fff"></div>
<div class="ab" style="left:277.7px;top:520.1px;font-size:10px;line-height:12px;color:#e8e8e8">Manual</div>
<div class="ab" style="left:320.4px;top:520.1px;font-size:10px;line-height:12px;color:#e8e8e8">Min</div>
<div class="ab" style="left:354.9px;top:520.1px;font-size:10px;line-height:12px;color:#e8e8e8">0</div>
<div class="ab" style="left:375.8px;top:520.1px;font-size:10px;line-height:12px;color:#e8e8e8">Max</div>
<div class="ab" style="left:402.2px;top:520.1px;font-size:10px;line-height:12px;color:#e8e8e8">5000</div>
<div class="ab" style="left:434.3px;top:518.4px;width:42.8px;height:18px;background:#fff"></div>
<div class="ab" style="left:462.7px;top:519.9px;width:12.5px;height:15px;background:#e6e6e6"></div>
<svg class="ab" style="left:466.5px;top:526.5px" width="5" height="3" viewBox="0 0 5 3"><path d="M0 0 L5 0 L2.5 2.8Z" fill="#111"/></svg>
<div class="ab" style="left:437.3px;top:522.5px;font-size:8.5px;line-height:10px;color:#111;-webkit-text-stroke:0.2px #111">1000</div>
<div class="ab" style="left:509.2px;top:519.8000000000001px;font-size:10px;line-height:12px;letter-spacing:-0.15px;color:#a6e33a">Min= 8092 Max= 8099 Gap=7&nbsp;&nbsp;&nbsp;[1000/1000]</div>
<div class="ab" style="left:234px;top:532.80px;width:40px;text-align:center;font-size:9px;line-height:11px;font-weight:bold;letter-spacing:-0.2px;color:#9ee23a">8099</div>
<div class="ab" style="left:234px;top:551.00px;width:40px;text-align:center;font-size:9px;line-height:11px;font-weight:bold;letter-spacing:-0.2px;color:#9ee23a">8098</div>
<div class="ab" style="left:234px;top:569.20px;width:40px;text-align:center;font-size:9px;line-height:11px;font-weight:bold;letter-spacing:-0.2px;color:#9ee23a">8096</div>
<div class="ab" style="left:234px;top:587.40px;width:40px;text-align:center;font-size:9px;line-height:11px;font-weight:bold;letter-spacing:-0.2px;color:#9ee23a">8094</div>
<div class="ab" style="left:234px;top:605.60px;width:40px;text-align:center;font-size:9px;line-height:11px;font-weight:bold;letter-spacing:-0.2px;color:#9ee23a">8092</div>
<div class="ab" style="left:907.5px;top:570.6px;width:19.5px;overflow:hidden;font-size:8.8px;line-height:9px;color:#ffffff;z-index:3">RAW0</div>
<div class="ab" style="left:238px;top:619.5px;width:685.5px;height:97.5px;background:#161616;border:1px solid #050505"></div>
<div class="ab" style="left:263.1px;top:622.1px;width:10.1px;height:10px;background:#fff"></div>
<div class="ab" style="left:277.7px;top:622.1px;font-size:10px;line-height:12px;color:#e8e8e8">Manual</div>
<div class="ab" style="left:320.4px;top:622.1px;font-size:10px;line-height:12px;color:#e8e8e8">Min</div>
<div class="ab" style="left:354.9px;top:622.1px;font-size:10px;line-height:12px;color:#e8e8e8">0</div>
<div class="ab" style="left:375.8px;top:622.1px;font-size:10px;line-height:12px;color:#e8e8e8">Max</div>
<div class="ab" style="left:402.2px;top:622.1px;font-size:10px;line-height:12px;color:#e8e8e8">5000</div>
<div class="ab" style="left:434.3px;top:620.4px;width:42.8px;height:18px;background:#fff"></div>
<div class="ab" style="left:462.7px;top:621.9px;width:12.5px;height:15px;background:#e6e6e6"></div>
<svg class="ab" style="left:466.5px;top:628.5px" width="5" height="3" viewBox="0 0 5 3"><path d="M0 0 L5 0 L2.5 2.8Z" fill="#111"/></svg>
<div class="ab" style="left:437.3px;top:624.5px;font-size:8.5px;line-height:10px;color:#111;-webkit-text-stroke:0.2px #111">1000</div>
<div class="ab" style="left:509.2px;top:621.8000000000001px;font-size:10px;line-height:12px;letter-spacing:-0.15px;color:#a6e33a">Min= 8116 Max= 8121 Gap=5&nbsp;&nbsp;&nbsp;[1000/1000]</div>
<div class="ab" style="left:234px;top:634.80px;width:40px;text-align:center;font-size:9px;line-height:11px;font-weight:bold;letter-spacing:-0.2px;color:#9ee23a">8121</div>
<div class="ab" style="left:234px;top:653.00px;width:40px;text-align:center;font-size:9px;line-height:11px;font-weight:bold;letter-spacing:-0.2px;color:#9ee23a">8120</div>
<div class="ab" style="left:234px;top:671.20px;width:40px;text-align:center;font-size:9px;line-height:11px;font-weight:bold;letter-spacing:-0.2px;color:#9ee23a">8119</div>
<div class="ab" style="left:234px;top:689.40px;width:40px;text-align:center;font-size:9px;line-height:11px;font-weight:bold;letter-spacing:-0.2px;color:#9ee23a">8117</div>
<div class="ab" style="left:234px;top:707.60px;width:40px;text-align:center;font-size:9px;line-height:11px;font-weight:bold;letter-spacing:-0.2px;color:#9ee23a">8116</div>
<div class="ab" style="left:907.5px;top:660.1px;width:19.5px;overflow:hidden;font-size:8.8px;line-height:9px;color:#f080f0;z-index:3">RAW1</div>
<div class="ab" style="left:0;top:0;width:1168px;height:731px;z-index:2"><svg class="ab" style="left:0;top:0" width="1168" height="731" viewBox="0 0 1168 731">
<line x1="263.0" y1="129.60" x2="906.8" y2="129.60" stroke="#9c9c9c" stroke-width="1"/>
<line x1="263.0" y1="147.80" x2="906.8" y2="147.80" stroke="#9c9c9c" stroke-width="1"/>
<line x1="263.0" y1="166.00" x2="906.8" y2="166.00" stroke="#9c9c9c" stroke-width="1"/>
<line x1="263.0" y1="184.20" x2="906.8" y2="184.20" stroke="#9c9c9c" stroke-width="1"/>
<line x1="263.0" y1="202.40" x2="906.8" y2="202.40" stroke="#9c9c9c" stroke-width="1"/>
<line x1="263.0" y1="129.60" x2="263.0" y2="202.40" stroke="#9c9c9c" stroke-width="1"/>
<line x1="906.8" y1="129.60" x2="906.8" y2="202.40" stroke="#9c9c9c" stroke-width="1"/>
<polyline points="263.5,160.8 263.5,181.6 264.5,160.8 264.5,171.2 265.5,150.4 266.5,171.2 266.5,171.2 267.5,192.0 268.5,192.0 268.5,171.2 269.5,171.2 270.5,160.8 270.5,160.8 271.5,192.0 272.5,140.0 272.5,181.6 273.5,160.8 273.5,160.8 274.5,171.2 275.5,160.8 275.5,171.2 276.5,181.6 277.5,181.6 277.5,181.6 278.5,160.8 279.5,171.2 279.5,150.4 280.5,192.0 281.5,150.4 281.5,171.2 282.5,160.8 282.5,171.2 283.5,202.4 284.5,181.6 284.5,160.8 285.5,171.2 286.5,150.4 286.5,160.8 287.5,160.8 288.5,160.8 288.5,171.2 289.5,150.4 290.5,192.0 290.5,150.4 291.5,171.2 291.5,140.0 292.5,171.2 293.5,171.2 293.5,150.4 294.5,160.8 295.5,192.0 295.5,160.8 296.5,140.0 297.5,160.8 297.5,171.2 298.5,160.8 299.5,171.2 299.5,150.4 300.5,160.8 301.5,160.8 301.5,181.6 302.5,160.8 302.5,171.2 303.5,181.6 304.5,160.8 304.5,171.2 305.5,171.2 306.5,160.8 306.5,150.4 307.5,171.2 308.5,160.8 308.5,171.2 309.5,160.8 310.5,160.8 310.5,171.2 311.5,181.6 311.5,171.2 312.5,160.8 313.5,160.8 313.5,171.2 314.5,150.4 315.5,181.6 315.5,160.8 316.5,181.6 317.5,160.8 317.5,150.4 318.5,181.6 319.5,160.8 319.5,150.4 320.5,160.8 320.5,160.8 321.5,160.8 322.5,150.4 322.5,171.2 323.5,160.8 324.5,181.6 324.5,171.2 325.5,181.6 326.5,160.8 326.5,171.2 327.5,160.8 328.5,171.2 328.5,160.8 329.5,160.8 330.5,150.4 330.5,150.4 331.5,192.0 331.5,160.8 332.5,160.8 333.5,150.4 333.5,150.4 334.5,160.8 335.5,150.4 335.5,160.8 336.5,202.4 337.5,181.6 337.5,181.6 338.5,150.4 339.5,181.6 339.5,160.8 340.5,171.2 340.5,150.4 341.5,160.8 342.5,160.8 342.5,171.2 343.5,171.2 344.5,181.6 344.5,150.4 345.5,181.6 346.5,160.8 346.5,171.2 347.5,150.4 348.5,160.8 348.5,150.4 349.5,192.0 350.5,171.2 350.5,181.6 351.5,171.2 351.5,140.0 352.5,181.6 353.5,160.8 353.5,140.0 354.5,160.8 355.5,160.8 355.5,181.6 356.5,171.2 357.5,171.2 357.5,181.6 358.5,150.4 359.5,160.8 359.5,160.8 360.5,171.2 360.5,171.2 361.5,181.6 362.5,202.4 362.5,171.2 363.5,192.0 364.5,181.6 364.5,160.8 365.5,171.2 366.5,160.8 366.5,160.8 367.5,150.4 368.5,171.2 368.5,160.8 369.5,171.2 369.5,140.0 370.5,171.2 371.5,160.8 371.5,171.2 372.5,150.4 373.5,171.2 373.5,160.8 374.5,150.4 375.5,160.8 375.5,171.2 376.5,181.6 377.5,160.8 377.5,171.2 378.5,192.0 378.5,171.2 379.5,181.6 380.5,181.6 380.5,150.4 381.5,150.4 382.5,171.2 382.5,181.6 383.5,150.4 384.5,129.6 384.5,171.2 385.5,171.2 386.5,192.0 386.5,160.8 387.5,150.4 388.5,171.2 388.5,150.4 389.5,171.2 389.5,150.4 390.5,160.8 391.5,181.6 391.5,181.6 392.5,181.6 393.5,192.0 393.5,150.4 394.5,160.8 395.5,140.0 395.5,171.2 396.5,171.2 397.5,171.2 397.5,140.0 398.5,160.8 398.5,160.8 399.5,160.8 400.5,150.4 400.5,160.8 401.5,171.2 402.5,140.0 402.5,181.6 403.5,171.2 404.5,171.2 404.5,160.8 405.5,171.2 406.5,160.8 406.5,150.4 407.5,171.2 408.5,181.6 408.5,171.2 409.5,181.6 409.5,192.0 410.5,160.8 411.5,160.8 411.5,171.2 412.5,171.2 413.5,160.8 413.5,181.6 414.5,171.2 415.5,181.6 415.5,160.8 416.5,160.8 417.5,181.6 417.5,171.2 418.5,171.2 418.5,160.8 419.5,160.8 420.5,202.4 420.5,150.4 421.5,181.6 422.5,181.6 422.5,150.4 423.5,181.6 424.5,140.0 424.5,181.6 425.5,181.6 426.5,181.6 426.5,171.2 427.5,171.2 427.5,171.2 428.5,160.8 429.5,160.8 429.5,160.8 430.5,171.2 431.5,171.2 431.5,160.8 432.5,171.2 433.5,181.6 433.5,140.0 434.5,192.0 435.5,181.6 435.5,171.2 436.5,160.8 437.5,160.8 437.5,171.2 438.5,160.8 438.5,140.0 439.5,160.8 440.5,160.8 440.5,140.0 441.5,160.8 442.5,160.8 442.5,160.8 443.5,171.2 444.5,181.6 444.5,140.0 445.5,160.8 446.5,171.2 446.5,171.2 447.5,150.4 447.5,150.4 448.5,192.0 449.5,140.0 449.5,160.8 450.5,160.8 451.5,160.8 451.5,150.4 452.5,171.2 453.5,171.2 453.5,160.8 454.5,181.6 455.5,192.0 455.5,171.2 456.5,171.2 456.5,150.4 457.5,160.8 458.5,171.2 458.5,160.8 459.5,160.8 460.5,160.8 460.5,192.0 461.5,140.0 462.5,171.2 462.5,171.2 463.5,171.2 464.5,150.4 464.5,171.2 465.5,140.0 466.5,202.4 466.5,160.8 467.5,160.8 467.5,181.6 468.5,181.6 469.5,140.0 469.5,171.2 470.5,181.6 471.5,171.2 471.5,171.2 472.5,160.8 473.5,171.2 473.5,171.2 474.5,150.4 475.5,150.4 475.5,160.8 476.5,192.0 476.5,171.2 477.5,160.8 478.5,160.8 478.5,171.2 479.5,150.4 480.5,192.0 480.5,160.8 481.5,171.2 482.5,171.2 482.5,160.8 483.5,181.6 484.5,181.6 484.5,171.2 485.5,160.8 485.5,160.8 486.5,171.2 487.5,202.4 487.5,160.8 488.5,171.2 489.5,171.2 489.5,150.4 490.5,171.2 491.5,160.8 491.5,171.2 492.5,160.8 493.5,150.4 493.5,181.6 494.5,192.0 494.5,181.6 495.5,150.4 496.5,192.0 496.5,160.8 497.5,181.6 498.5,181.6 498.5,192.0 499.5,181.6 500.5,160.8 500.5,160.8 501.5,171.2 502.5,140.0 502.5,160.8 503.5,160.8 504.5,150.4 504.5,181.6 505.5,171.2 505.5,140.0 506.5,150.4 507.5,160.8 507.5,181.6 508.5,181.6 509.5,160.8 509.5,181.6 510.5,171.2 511.5,171.2 511.5,171.2 512.5,181.6 513.5,150.4 513.5,171.2 514.5,181.6 514.5,171.2 515.5,171.2 516.5,171.2 516.5,181.6 517.5,171.2 518.5,160.8 518.5,160.8 519.5,160.8 520.5,160.8 520.5,140.0 521.5,171.2 522.5,140.0 522.5,150.4 523.5,150.4 523.5,160.8 524.5,160.8 525.5,171.2 525.5,150.4 526.5,171.2 527.5,171.2 527.5,181.6 528.5,171.2 529.5,171.2 529.5,181.6 530.5,181.6 531.5,181.6 531.5,181.6 532.5,171.2 533.5,171.2 533.5,181.6 534.5,160.8 534.5,171.2 535.5,160.8 536.5,171.2 536.5,181.6 537.5,150.4 538.5,150.4 538.5,150.4 539.5,140.0 540.5,160.8 540.5,171.2 541.5,150.4 542.5,160.8 542.5,160.8 543.5,160.8 543.5,160.8 544.5,181.6 545.5,160.8 545.5,160.8 546.5,181.6 547.5,171.2 547.5,160.8 548.5,150.4 549.5,181.6 549.5,160.8 550.5,150.4 551.5,171.2 551.5,171.2 552.5,150.4 553.5,181.6 553.5,171.2 554.5,160.8 554.5,171.2 555.5,150.4 556.5,171.2 556.5,160.8 557.5,181.6 558.5,160.8 558.5,160.8 559.5,171.2 560.5,171.2 560.5,171.2 561.5,160.8 562.5,181.6 562.5,160.8 563.5,150.4 563.5,192.0 564.5,181.6 565.5,181.6 565.5,181.6 566.5,181.6 567.5,171.2 567.5,160.8 568.5,171.2 569.5,150.4 569.5,171.2 570.5,150.4 571.5,160.8 571.5,160.8 572.5,181.6 572.5,171.2 573.5,160.8 574.5,150.4 574.5,171.2 575.5,140.0 576.5,160.8 576.5,150.4 577.5,150.4 578.5,160.8 578.5,181.6 579.5,171.2 580.5,171.2 580.5,171.2 581.5,171.2 582.5,150.4 582.5,181.6 583.5,181.6 583.5,181.6 584.5,171.2 585.5,150.4 585.5,192.0 586.5,171.2 587.5,160.8 587.5,171.2 588.5,192.0 589.5,150.4 589.5,160.8 590.5,171.2 591.5,171.2 591.5,171.2 592.5,171.2 592.5,171.2 593.5,192.0 594.5,171.2 594.5,160.8 595.5,160.8 596.5,160.8 596.5,192.0 597.5,160.8 598.5,181.6 598.5,181.6 599.5,160.8 600.5,171.2 600.5,160.8 601.5,171.2 601.5,171.2 602.5,140.0 603.5,171.2 603.5,171.2 604.5,171.2 605.5,171.2 605.5,150.4 606.5,181.6 607.5,150.4 607.5,171.2 608.5,181.6 609.5,192.0 609.5,171.2 610.5,181.6 611.5,150.4 611.5,171.2 612.5,160.8 612.5,171.2 613.5,171.2 614.5,171.2 614.5,181.6 615.5,192.0 616.5,171.2 616.5,181.6 617.5,171.2 618.5,160.8 618.5,150.4 619.5,150.4 620.5,171.2 620.5,160.8 621.5,192.0 621.5,160.8 622.5,150.4 623.5,160.8 623.5,192.0 624.5,171.2 625.5,150.4 625.5,181.6 626.5,181.6 627.5,150.4 627.5,171.2 628.5,160.8 629.5,181.6 629.5,150.4 630.5,171.2 630.5,171.2 631.5,160.8 632.5,181.6 632.5,160.8 633.5,160.8 634.5,192.0 634.5,160.8 635.5,160.8 636.5,160.8 636.5,192.0 637.5,192.0 638.5,150.4 638.5,160.8 639.5,160.8 640.5,181.6 640.5,160.8 641.5,192.0 641.5,181.6 642.5,160.8 643.5,160.8 643.5,171.2 644.5,160.8 645.5,181.6 645.5,160.8 646.5,160.8 647.5,181.6 647.5,150.4 648.5,181.6 649.5,192.0 649.5,150.4 650.5,181.6 650.5,150.4 651.5,150.4 652.5,160.8 652.5,160.8 653.5,160.8 654.5,181.6 654.5,171.2 655.5,150.4 656.5,181.6 656.5,160.8 657.5,150.4 658.5,192.0 658.5,181.6 659.5,160.8 659.5,160.8 660.5,150.4 661.5,160.8 661.5,160.8 662.5,160.8 663.5,160.8 663.5,160.8 664.5,171.2 665.5,160.8 665.5,150.4 666.5,171.2 667.5,171.2 667.5,140.0 668.5,160.8 669.5,171.2 669.5,160.8 670.5,181.6 670.5,171.2 671.5,160.8 672.5,171.2 672.5,171.2 673.5,181.6 674.5,160.8 674.5,171.2 675.5,160.8 676.5,171.2 676.5,150.4 677.5,150.4 678.5,160.8 678.5,181.6 679.5,160.8 679.5,171.2 680.5,160.8 681.5,160.8 681.5,171.2 682.5,160.8 683.5,160.8 683.5,171.2 684.5,181.6 685.5,181.6 685.5,150.4 686.5,150.4 687.5,150.4 687.5,150.4 688.5,171.2 688.5,181.6 689.5,171.2 690.5,160.8 690.5,171.2 691.5,160.8 692.5,171.2 692.5,150.4 693.5,181.6 694.5,150.4 694.5,181.6 695.5,192.0 696.5,150.4 696.5,150.4 697.5,202.4 697.5,181.6 698.5,150.4 699.5,181.6 699.5,171.2 700.5,171.2 701.5,150.4 701.5,150.4 702.5,140.0 703.5,160.8 703.5,150.4 704.5,202.4 705.5,181.6 705.5,150.4 706.5,160.8 707.5,150.4 707.5,160.8 708.5,160.8 708.5,150.4 709.5,150.4 710.5,140.0 710.5,160.8 711.5,140.0 712.5,171.2 712.5,171.2 713.5,160.8 714.5,160.8 714.5,181.6 715.5,181.6 716.5,160.8 716.5,181.6 717.5,160.8 717.5,160.8 718.5,181.6 719.5,181.6 719.5,171.2 720.5,160.8 721.5,160.8 721.5,160.8 722.5,192.0 723.5,171.2 723.5,160.8 724.5,192.0 725.5,181.6 725.5,171.2 726.5,181.6 726.5,192.0 727.5,181.6 728.5,171.2 728.5,160.8 729.5,160.8 730.5,171.2 730.5,171.2 731.5,150.4 732.5,160.8 732.5,160.8 733.5,160.8 734.5,171.2 734.5,150.4 735.5,171.2 736.5,160.8 736.5,171.2 737.5,171.2 737.5,181.6 738.5,160.8 739.5,171.2 739.5,150.4 740.5,160.8 741.5,150.4 741.5,181.6 742.5,160.8 743.5,160.8 743.5,171.2 744.5,150.4 745.5,181.6 745.5,150.4 746.5,181.6 746.5,192.0 747.5,160.8 748.5,171.2 748.5,202.4 749.5,160.8 750.5,171.2 750.5,171.2 751.5,150.4 752.5,181.6 752.5,160.8 753.5,171.2 754.5,140.0 754.5,171.2 755.5,150.4 755.5,160.8 756.5,171.2 757.5,181.6 757.5,160.8 758.5,140.0 759.5,171.2 759.5,181.6 760.5,181.6 761.5,171.2 761.5,160.8 762.5,181.6 763.5,181.6 763.5,181.6 764.5,160.8 765.5,171.2 765.5,181.6 766.5,171.2 766.5,160.8 767.5,192.0 768.5,150.4 768.5,171.2 769.5,181.6 770.5,160.8 770.5,192.0 771.5,150.4 772.5,160.8 772.5,160.8 773.5,171.2 774.5,150.4 774.5,181.6 775.5,160.8 775.5,150.4 776.5,160.8 777.5,160.8 777.5,150.4 778.5,160.8 779.5,181.6 779.5,160.8 780.5,160.8 781.5,160.8 781.5,150.4 782.5,181.6 783.5,140.0 783.5,150.4 784.5,181.6 784.5,160.8 785.5,181.6 786.5,181.6 786.5,171.2 787.5,181.6 788.5,171.2 788.5,171.2 789.5,202.4 790.5,160.8 790.5,160.8 791.5,192.0 792.5,150.4 792.5,160.8 793.5,181.6 794.5,171.2 794.5,160.8 795.5,160.8 795.5,181.6 796.5,181.6 797.5,192.0 797.5,171.2 798.5,171.2 799.5,171.2 799.5,160.8 800.5,171.2 801.5,171.2 801.5,192.0 802.5,150.4 803.5,160.8 803.5,140.0 804.5,171.2 804.5,150.4 805.5,171.2 806.5,150.4 806.5,160.8 807.5,160.8 808.5,171.2 808.5,150.4 809.5,181.6 810.5,150.4 810.5,171.2 811.5,150.4 812.5,181.6 812.5,171.2 813.5,171.2 814.5,171.2 814.5,160.8 815.5,160.8 815.5,181.6 816.5,160.8 817.5,150.4 817.5,181.6 818.5,181.6 819.5,181.6 819.5,171.2 820.5,192.0 821.5,171.2 821.5,171.2 822.5,171.2 823.5,171.2 823.5,181.6 824.5,171.2 824.5,181.6 825.5,171.2 826.5,171.2 826.5,171.2 827.5,160.8 828.5,160.8 828.5,160.8 829.5,160.8 830.5,160.8 830.5,160.8 831.5,160.8 832.5,171.2 832.5,171.2 833.5,160.8 833.5,181.6 834.5,171.2 835.5,171.2 835.5,150.4 836.5,171.2 837.5,171.2 837.5,171.2 838.5,150.4 839.5,171.2 839.5,171.2 840.5,160.8 841.5,140.0 841.5,192.0 842.5,171.2 843.5,171.2 843.5,181.6 844.5,160.8 844.5,160.8 845.5,171.2 846.5,160.8 846.5,160.8 847.5,171.2 848.5,181.6 848.5,150.4 849.5,181.6 850.5,140.0 850.5,160.8 851.5,160.8 852.5,171.2 852.5,171.2 853.5,150.4 853.5,140.0 854.5,150.4 855.5,171.2 855.5,171.2 856.5,181.6 857.5,171.2 857.5,160.8 858.5,171.2 859.5,160.8 859.5,160.8 860.5,171.2 861.5,181.6 861.5,171.2 862.5,171.2 862.5,150.4 863.5,181.6 864.5,171.2 864.5,171.2 865.5,150.4 866.5,160.8 866.5,171.2 867.5,171.2 868.5,171.2 868.5,150.4 869.5,181.6 870.5,150.4 870.5,160.8 871.5,160.8 872.5,171.2 872.5,160.8 873.5,160.8 873.5,160.8 874.5,171.2 875.5,150.4 875.5,160.8 876.5,160.8 877.5,160.8 877.5,160.8 878.5,160.8 879.5,150.4 879.5,171.2 880.5,160.8 881.5,171.2 881.5,181.6 882.5,150.4 882.5,171.2 883.5,160.8 884.5,181.6 884.5,160.8 885.5,140.0 886.5,171.2 886.5,171.2 887.5,171.2 888.5,171.2 888.5,150.4 889.5,160.8 890.5,150.4 890.5,202.4 891.5,192.0 891.5,171.2 892.5,171.2 893.5,160.8 893.5,150.4 894.5,150.4 895.5,160.8 895.5,160.8 896.5,150.4 897.5,140.0 897.5,171.2 898.5,160.8 899.5,171.2 899.5,171.2 900.5,181.6 901.5,160.8 901.5,181.6 902.5,160.8 902.5,181.6 903.5,150.4 904.5,160.8 904.5,150.4 905.5,181.6 906.5,150.4 906.5,150.4" fill="none" stroke="#ff1a1a" stroke-width="1"/>
<line x1="906.8" y1="150.4" x2="923" y2="150.4" stroke="#ff1a1a" stroke-width="2.5"/>
<line x1="684.5" y1="129.6" x2="684.5" y2="202.39999999999998" stroke="#e0a030" stroke-width="1" stroke-dasharray="2,1"/>
<line x1="263.0" y1="231.60" x2="906.8" y2="231.60" stroke="#9c9c9c" stroke-width="1"/>
<line x1="263.0" y1="249.80" x2="906.8" y2="249.80" stroke="#9c9c9c" stroke-width="1"/>
<line x1="263.0" y1="268.00" x2="906.8" y2="268.00" stroke="#9c9c9c" stroke-width="1"/>
<line x1="263.0" y1="286.20" x2="906.8" y2="286.20" stroke="#9c9c9c" stroke-width="1"/>
<line x1="263.0" y1="304.40" x2="906.8" y2="304.40" stroke="#9c9c9c" stroke-width="1"/>
<line x1="263.0" y1="231.60" x2="263.0" y2="304.40" stroke="#9c9c9c" stroke-width="1"/>
<line x1="906.8" y1="231.60" x2="906.8" y2="304.40" stroke="#9c9c9c" stroke-width="1"/>
<path d="M263.0,268.0 H278.5 L279.5,286.2 H328.5 L329.5,268.0 H638.4 V286.2 H906.8" fill="none" stroke="#24dca0" stroke-width="1.2"/>
<line x1="906.8" y1="286.2" x2="923" y2="286.2" stroke="#24dca0" stroke-width="2.5"/>
<line x1="263.0" y1="333.60" x2="906.8" y2="333.60" stroke="#9c9c9c" stroke-width="1"/>
<line x1="263.0" y1="351.80" x2="906.8" y2="351.80" stroke="#9c9c9c" stroke-width="1"/>
<line x1="263.0" y1="370.00" x2="906.8" y2="370.00" stroke="#9c9c9c" stroke-width="1"/>
<line x1="263.0" y1="388.20" x2="906.8" y2="388.20" stroke="#9c9c9c" stroke-width="1"/>
<line x1="263.0" y1="406.40" x2="906.8" y2="406.40" stroke="#9c9c9c" stroke-width="1"/>
<line x1="263.0" y1="333.60" x2="263.0" y2="406.40" stroke="#9c9c9c" stroke-width="1"/>
<line x1="906.8" y1="333.60" x2="906.8" y2="406.40" stroke="#9c9c9c" stroke-width="1"/>
<polyline points="263.5,382.1 263.5,370.0 264.5,357.9 264.5,370.0 265.5,357.9 266.5,382.1 266.5,357.9 267.5,370.0 268.5,382.1 268.5,370.0 269.5,345.7 270.5,382.1 270.5,382.1 271.5,357.9 272.5,394.3 272.5,357.9 273.5,357.9 273.5,357.9 274.5,370.0 275.5,382.1 275.5,345.7 276.5,370.0 277.5,382.1 277.5,370.0 278.5,357.9 279.5,357.9 279.5,345.7 280.5,370.0 281.5,382.1 281.5,357.9 282.5,345.7 282.5,345.7 283.5,345.7 284.5,357.9 284.5,370.0 285.5,357.9 286.5,370.0 286.5,370.0 287.5,382.1 288.5,382.1 288.5,345.7 289.5,394.3 290.5,345.7 290.5,345.7 291.5,357.9 291.5,382.1 292.5,370.0 293.5,370.0 293.5,370.0 294.5,370.0 295.5,357.9 295.5,357.9 296.5,406.4 297.5,357.9 297.5,394.3 298.5,370.0 299.5,357.9 299.5,357.9 300.5,370.0 301.5,370.0 301.5,382.1 302.5,357.9 302.5,357.9 303.5,357.9 304.5,345.7 304.5,357.9 305.5,370.0 306.5,357.9 306.5,357.9 307.5,370.0 308.5,382.1 308.5,357.9 309.5,357.9 310.5,406.4 310.5,370.0 311.5,345.7 311.5,370.0 312.5,394.3 313.5,382.1 313.5,357.9 314.5,357.9 315.5,382.1 315.5,382.1 316.5,357.9 317.5,357.9 317.5,370.0 318.5,370.0 319.5,357.9 319.5,370.0 320.5,357.9 320.5,357.9 321.5,345.7 322.5,370.0 322.5,357.9 323.5,370.0 324.5,357.9 324.5,370.0 325.5,370.0 326.5,345.7 326.5,345.7 327.5,357.9 328.5,382.1 328.5,357.9 329.5,370.0 330.5,370.0 330.5,357.9 331.5,345.7 331.5,370.0 332.5,345.7 333.5,357.9 333.5,394.3 334.5,345.7 335.5,357.9 335.5,370.0 336.5,382.1 337.5,345.7 337.5,370.0 338.5,370.0 339.5,357.9 339.5,370.0 340.5,345.7 340.5,345.7 341.5,357.9 342.5,370.0 342.5,345.7 343.5,357.9 344.5,357.9 344.5,370.0 345.5,394.3 346.5,357.9 346.5,382.1 347.5,357.9 348.5,370.0 348.5,357.9 349.5,345.7 350.5,394.3 350.5,357.9 351.5,382.1 351.5,382.1 352.5,357.9 353.5,357.9 353.5,345.7 354.5,382.1 355.5,357.9 355.5,357.9 356.5,357.9 357.5,345.7 357.5,382.1 358.5,370.0 359.5,382.1 359.5,357.9 360.5,370.0 360.5,357.9 361.5,357.9 362.5,382.1 362.5,382.1 363.5,357.9 364.5,345.7 364.5,357.9 365.5,357.9 366.5,370.0 366.5,370.0 367.5,370.0 368.5,357.9 368.5,357.9 369.5,357.9 369.5,382.1 370.5,357.9 371.5,357.9 371.5,382.1 372.5,406.4 373.5,357.9 373.5,357.9 374.5,357.9 375.5,382.1 375.5,382.1 376.5,382.1 377.5,345.7 377.5,394.3 378.5,357.9 378.5,345.7 379.5,370.0 380.5,357.9 380.5,357.9 381.5,357.9 382.5,370.0 382.5,345.7 383.5,345.7 384.5,394.3 384.5,357.9 385.5,370.0 386.5,394.3 386.5,370.0 387.5,394.3 388.5,382.1 388.5,345.7 389.5,370.0 389.5,357.9 390.5,357.9 391.5,370.0 391.5,357.9 392.5,357.9 393.5,370.0 393.5,370.0 394.5,370.0 395.5,370.0 395.5,357.9 396.5,357.9 397.5,357.9 397.5,370.0 398.5,370.0 398.5,370.0 399.5,345.7 400.5,357.9 400.5,370.0 401.5,345.7 402.5,345.7 402.5,357.9 403.5,370.0 404.5,370.0 404.5,357.9 405.5,370.0 406.5,357.9 406.5,357.9 407.5,382.1 408.5,357.9 408.5,357.9 409.5,345.7 409.5,370.0 410.5,345.7 411.5,357.9 411.5,370.0 412.5,370.0 413.5,345.7 413.5,370.0 414.5,382.1 415.5,370.0 415.5,370.0 416.5,370.0 417.5,345.7 417.5,357.9 418.5,406.4 418.5,382.1 419.5,382.1 420.5,370.0 420.5,370.0 421.5,345.7 422.5,370.0 422.5,382.1 423.5,345.7 424.5,370.0 424.5,370.0 425.5,382.1 426.5,370.0 426.5,345.7 427.5,382.1 427.5,394.3 428.5,370.0 429.5,370.0 429.5,357.9 430.5,357.9 431.5,345.7 431.5,382.1 432.5,357.9 433.5,370.0 433.5,394.3 434.5,345.7 435.5,357.9 435.5,370.0 436.5,370.0 437.5,357.9 437.5,370.0 438.5,370.0 438.5,382.1 439.5,345.7 440.5,345.7 440.5,357.9 441.5,382.1 442.5,394.3 442.5,370.0 443.5,357.9 444.5,382.1 444.5,394.3 445.5,370.0 446.5,345.7 446.5,382.1 447.5,370.0 447.5,382.1 448.5,345.7 449.5,394.3 449.5,370.0 450.5,370.0 451.5,370.0 451.5,370.0 452.5,370.0 453.5,345.7 453.5,357.9 454.5,357.9 455.5,382.1 455.5,357.9 456.5,357.9 456.5,382.1 457.5,345.7 458.5,345.7 458.5,370.0 459.5,382.1 460.5,357.9 460.5,345.7 461.5,357.9 462.5,357.9 462.5,370.0 463.5,357.9 464.5,370.0 464.5,357.9 465.5,357.9 466.5,370.0 466.5,357.9 467.5,382.1 467.5,345.7 468.5,357.9 469.5,370.0 469.5,345.7 470.5,345.7 471.5,357.9 471.5,357.9 472.5,370.0 473.5,345.7 473.5,357.9 474.5,345.7 475.5,345.7 475.5,345.7 476.5,382.1 476.5,357.9 477.5,357.9 478.5,357.9 478.5,370.0 479.5,394.3 480.5,394.3 480.5,357.9 481.5,357.9 482.5,370.0 482.5,345.7 483.5,357.9 484.5,357.9 484.5,370.0 485.5,345.7 485.5,370.0 486.5,357.9 487.5,370.0 487.5,357.9 488.5,357.9 489.5,382.1 489.5,394.3 490.5,370.0 491.5,370.0 491.5,382.1 492.5,357.9 493.5,382.1 493.5,357.9 494.5,382.1 494.5,382.1 495.5,357.9 496.5,357.9 496.5,370.0 497.5,370.0 498.5,370.0 498.5,345.7 499.5,370.0 500.5,357.9 500.5,382.1 501.5,345.7 502.5,382.1 502.5,370.0 503.5,370.0 504.5,345.7 504.5,357.9 505.5,370.0 505.5,345.7 506.5,357.9 507.5,370.0 507.5,382.1 508.5,382.1 509.5,357.9 509.5,382.1 510.5,382.1 511.5,357.9 511.5,370.0 512.5,357.9 513.5,357.9 513.5,370.0 514.5,382.1 514.5,357.9 515.5,370.0 516.5,370.0 516.5,357.9 517.5,357.9 518.5,370.0 518.5,357.9 519.5,357.9 520.5,357.9 520.5,370.0 521.5,394.3 522.5,357.9 522.5,357.9 523.5,345.7 523.5,382.1 524.5,357.9 525.5,370.0 525.5,370.0 526.5,357.9 527.5,370.0 527.5,357.9 528.5,345.7 529.5,370.0 529.5,357.9 530.5,357.9 531.5,370.0 531.5,382.1 532.5,370.0 533.5,357.9 533.5,382.1 534.5,382.1 534.5,357.9 535.5,394.3 536.5,370.0 536.5,382.1 537.5,357.9 538.5,357.9 538.5,370.0 539.5,345.7 540.5,382.1 540.5,382.1 541.5,357.9 542.5,382.1 542.5,382.1 543.5,357.9 543.5,357.9 544.5,370.0 545.5,345.7 545.5,394.3 546.5,345.7 547.5,357.9 547.5,370.0 548.5,394.3 549.5,357.9 549.5,370.0 550.5,370.0 551.5,370.0 551.5,382.1 552.5,382.1 553.5,370.0 553.5,345.7 554.5,382.1 554.5,394.3 555.5,382.1 556.5,345.7 556.5,357.9 557.5,382.1 558.5,382.1 558.5,345.7 559.5,357.9 560.5,394.3 560.5,370.0 561.5,370.0 562.5,382.1 562.5,370.0 563.5,345.7 563.5,382.1 564.5,345.7 565.5,345.7 565.5,370.0 566.5,370.0 567.5,370.0 567.5,345.7 568.5,370.0 569.5,382.1 569.5,357.9 570.5,357.9 571.5,382.1 571.5,382.1 572.5,357.9 572.5,357.9 573.5,345.7 574.5,370.0 574.5,345.7 575.5,357.9 576.5,394.3 576.5,370.0 577.5,382.1 578.5,370.0 578.5,345.7 579.5,370.0 580.5,382.1 580.5,357.9 581.5,382.1 582.5,357.9 582.5,370.0 583.5,345.7 583.5,382.1 584.5,382.1 585.5,370.0 585.5,357.9 586.5,382.1 587.5,382.1 587.5,357.9 588.5,357.9 589.5,357.9 589.5,345.7 590.5,370.0 591.5,357.9 591.5,345.7 592.5,370.0 592.5,345.7 593.5,370.0 594.5,382.1 594.5,394.3 595.5,357.9 596.5,357.9 596.5,382.1 597.5,370.0 598.5,345.7 598.5,382.1 599.5,333.6 600.5,382.1 600.5,394.3 601.5,357.9 601.5,345.7 602.5,382.1 603.5,357.9 603.5,370.0 604.5,357.9 605.5,357.9 605.5,345.7 606.5,394.3 607.5,345.7 607.5,394.3 608.5,357.9 609.5,357.9 609.5,382.1 610.5,370.0 611.5,382.1 611.5,345.7 612.5,370.0 612.5,382.1 613.5,370.0 614.5,382.1 614.5,345.7 615.5,370.0 616.5,357.9 616.5,345.7 617.5,394.3 618.5,357.9 618.5,357.9 619.5,357.9 620.5,370.0 620.5,370.0 621.5,357.9 621.5,357.9 622.5,345.7 623.5,345.7 623.5,406.4 624.5,370.0 625.5,382.1 625.5,370.0 626.5,357.9 627.5,357.9 627.5,370.0 628.5,382.1 629.5,357.9 629.5,370.0 630.5,357.9 630.5,345.7 631.5,345.7 632.5,370.0 632.5,370.0 633.5,370.0 634.5,345.7 634.5,345.7 635.5,370.0 636.5,345.7 636.5,357.9 637.5,345.7 638.5,357.9 638.5,382.1 639.5,345.7 640.5,394.3 640.5,370.0 641.5,345.7 641.5,370.0 642.5,357.9 643.5,370.0 643.5,370.0 644.5,345.7 645.5,357.9 645.5,357.9 646.5,357.9 647.5,357.9 647.5,382.1 648.5,394.3 649.5,345.7 649.5,370.0 650.5,382.1 650.5,370.0 651.5,370.0 652.5,345.7 652.5,345.7 653.5,370.0 654.5,357.9 654.5,345.7 655.5,370.0 656.5,357.9 656.5,357.9 657.5,394.3 658.5,382.1 658.5,345.7 659.5,394.3 659.5,370.0 660.5,370.0 661.5,382.1 661.5,357.9 662.5,357.9 663.5,357.9 663.5,357.9 664.5,382.1 665.5,394.3 665.5,357.9 666.5,357.9 667.5,382.1 667.5,382.1 668.5,370.0 669.5,345.7 669.5,382.1 670.5,357.9 670.5,345.7 671.5,357.9 672.5,345.7 672.5,357.9 673.5,357.9 674.5,357.9 674.5,357.9 675.5,370.0 676.5,357.9 676.5,345.7 677.5,370.0 678.5,370.0 678.5,357.9 679.5,370.0 679.5,370.0 680.5,382.1 681.5,382.1 681.5,357.9 682.5,370.0 683.5,345.7 683.5,357.9 684.5,382.1 685.5,345.7 685.5,357.9 686.5,357.9 687.5,382.1 687.5,370.0 688.5,357.9 688.5,370.0 689.5,382.1 690.5,357.9 690.5,357.9 691.5,370.0 692.5,394.3 692.5,370.0 693.5,382.1 694.5,370.0 694.5,370.0 695.5,357.9 696.5,357.9 696.5,382.1 697.5,357.9 697.5,345.7 698.5,370.0 699.5,345.7 699.5,345.7 700.5,382.1 701.5,357.9 701.5,370.0 702.5,370.0 703.5,370.0 703.5,370.0 704.5,370.0 705.5,370.0 705.5,357.9 706.5,370.0 707.5,370.0 707.5,370.0 708.5,345.7 708.5,345.7 709.5,357.9 710.5,345.7 710.5,370.0 711.5,357.9 712.5,370.0 712.5,357.9 713.5,345.7 714.5,370.0 714.5,394.3 715.5,357.9 716.5,370.0 716.5,394.3 717.5,357.9 717.5,370.0 718.5,357.9 719.5,357.9 719.5,370.0 720.5,394.3 721.5,357.9 721.5,345.7 722.5,382.1 723.5,370.0 723.5,345.7 724.5,394.3 725.5,394.3 725.5,345.7 726.5,370.0 726.5,370.0 727.5,345.7 728.5,357.9 728.5,370.0 729.5,345.7 730.5,345.7 730.5,357.9 731.5,345.7 732.5,382.1 732.5,370.0 733.5,382.1 734.5,382.1 734.5,382.1 735.5,345.7 736.5,382.1 736.5,370.0 737.5,345.7 737.5,382.1 738.5,345.7 739.5,357.9 739.5,345.7 740.5,382.1 741.5,357.9 741.5,345.7 742.5,382.1 743.5,357.9 743.5,345.7 744.5,370.0 745.5,370.0 745.5,370.0 746.5,370.0 746.5,357.9 747.5,370.0 748.5,382.1 748.5,394.3 749.5,370.0 750.5,345.7 750.5,345.7 751.5,394.3 752.5,382.1 752.5,370.0 753.5,345.7 754.5,370.0 754.5,370.0 755.5,382.1 755.5,370.0 756.5,382.1 757.5,406.4 757.5,382.1 758.5,382.1 759.5,357.9 759.5,382.1 760.5,382.1 761.5,382.1 761.5,345.7 762.5,357.9 763.5,382.1 763.5,370.0 764.5,357.9 765.5,382.1 765.5,382.1 766.5,382.1 766.5,406.4 767.5,357.9 768.5,370.0 768.5,370.0 769.5,370.0 770.5,345.7 770.5,345.7 771.5,370.0 772.5,357.9 772.5,382.1 773.5,370.0 774.5,370.0 774.5,394.3 775.5,357.9 775.5,357.9 776.5,345.7 777.5,370.0 777.5,357.9 778.5,382.1 779.5,357.9 779.5,357.9 780.5,345.7 781.5,357.9 781.5,394.3 782.5,357.9 783.5,345.7 783.5,370.0 784.5,357.9 784.5,370.0 785.5,382.1 786.5,370.0 786.5,394.3 787.5,370.0 788.5,345.7 788.5,357.9 789.5,370.0 790.5,357.9 790.5,382.1 791.5,370.0 792.5,333.6 792.5,382.1 793.5,357.9 794.5,370.0 794.5,345.7 795.5,370.0 795.5,382.1 796.5,345.7 797.5,357.9 797.5,370.0 798.5,357.9 799.5,357.9 799.5,357.9 800.5,357.9 801.5,357.9 801.5,357.9 802.5,357.9 803.5,370.0 803.5,370.0 804.5,370.0 804.5,345.7 805.5,357.9 806.5,357.9 806.5,357.9 807.5,345.7 808.5,357.9 808.5,357.9 809.5,382.1 810.5,357.9 810.5,370.0 811.5,357.9 812.5,357.9 812.5,382.1 813.5,382.1 814.5,370.0 814.5,357.9 815.5,370.0 815.5,345.7 816.5,345.7 817.5,345.7 817.5,357.9 818.5,357.9 819.5,345.7 819.5,370.0 820.5,345.7 821.5,382.1 821.5,333.6 822.5,345.7 823.5,382.1 823.5,382.1 824.5,345.7 824.5,382.1 825.5,382.1 826.5,370.0 826.5,370.0 827.5,370.0 828.5,370.0 828.5,345.7 829.5,357.9 830.5,357.9 830.5,370.0 831.5,357.9 832.5,345.7 832.5,382.1 833.5,357.9 833.5,370.0 834.5,394.3 835.5,357.9 835.5,394.3 836.5,370.0 837.5,357.9 837.5,370.0 838.5,357.9 839.5,382.1 839.5,357.9 840.5,382.1 841.5,382.1 841.5,382.1 842.5,370.0 843.5,345.7 843.5,370.0 844.5,394.3 844.5,370.0 845.5,357.9 846.5,357.9 846.5,345.7 847.5,382.1 848.5,357.9 848.5,357.9 849.5,357.9 850.5,394.3 850.5,382.1 851.5,357.9 852.5,370.0 852.5,357.9 853.5,345.7 853.5,357.9 854.5,382.1 855.5,370.0 855.5,357.9 856.5,345.7 857.5,382.1 857.5,382.1 858.5,345.7 859.5,370.0 859.5,370.0 860.5,357.9 861.5,370.0 861.5,357.9 862.5,370.0 862.5,370.0 863.5,382.1 864.5,382.1 864.5,394.3 865.5,357.9 866.5,345.7 866.5,357.9 867.5,345.7 868.5,357.9 868.5,370.0 869.5,382.1 870.5,370.0 870.5,370.0 871.5,345.7 872.5,345.7 872.5,370.0 873.5,357.9 873.5,357.9 874.5,357.9 875.5,345.7 875.5,382.1 876.5,370.0 877.5,370.0 877.5,345.7 878.5,382.1 879.5,370.0 879.5,333.6 880.5,370.0 881.5,357.9 881.5,370.0 882.5,382.1 882.5,357.9 883.5,382.1 884.5,357.9 884.5,370.0 885.5,357.9 886.5,357.9 886.5,382.1 887.5,357.9 888.5,382.1 888.5,370.0 889.5,370.0 890.5,382.1 890.5,370.0 891.5,382.1 891.5,370.0 892.5,345.7 893.5,382.1 893.5,382.1 894.5,357.9 895.5,382.1 895.5,370.0 896.5,406.4 897.5,357.9 897.5,357.9 898.5,357.9 899.5,382.1 899.5,370.0 900.5,357.9 901.5,394.3 901.5,345.7 902.5,345.7 902.5,370.0 903.5,357.9 904.5,357.9 904.5,370.0 905.5,370.0 906.5,370.0 906.5,370.0" fill="none" stroke="#ffa500" stroke-width="1"/>
<line x1="906.8" y1="370.0" x2="923" y2="370.0" stroke="#ffa500" stroke-width="2.5"/>
<line x1="263.0" y1="435.60" x2="906.8" y2="435.60" stroke="#9c9c9c" stroke-width="1"/>
<line x1="263.0" y1="453.80" x2="906.8" y2="453.80" stroke="#9c9c9c" stroke-width="1"/>
<line x1="263.0" y1="472.00" x2="906.8" y2="472.00" stroke="#9c9c9c" stroke-width="1"/>
<line x1="263.0" y1="490.20" x2="906.8" y2="490.20" stroke="#9c9c9c" stroke-width="1"/>
<line x1="263.0" y1="508.40" x2="906.8" y2="508.40" stroke="#9c9c9c" stroke-width="1"/>
<line x1="263.0" y1="435.60" x2="263.0" y2="508.40" stroke="#9c9c9c" stroke-width="1"/>
<line x1="906.8" y1="435.60" x2="906.8" y2="508.40" stroke="#9c9c9c" stroke-width="1"/>
<line x1="263.0" y1="490.2" x2="906.8" y2="490.2" stroke="#0000dd" stroke-width="1.2"/>
<line x1="906.8" y1="490.2" x2="923" y2="490.2" stroke="#0000dd" stroke-width="2.5"/>
<line x1="263.0" y1="537.60" x2="906.8" y2="537.60" stroke="#9c9c9c" stroke-width="1"/>
<line x1="263.0" y1="555.80" x2="906.8" y2="555.80" stroke="#9c9c9c" stroke-width="1"/>
<line x1="263.0" y1="574.00" x2="906.8" y2="574.00" stroke="#9c9c9c" stroke-width="1"/>
<line x1="263.0" y1="592.20" x2="906.8" y2="592.20" stroke="#9c9c9c" stroke-width="1"/>
<line x1="263.0" y1="610.40" x2="906.8" y2="610.40" stroke="#9c9c9c" stroke-width="1"/>
<line x1="263.0" y1="537.60" x2="263.0" y2="610.40" stroke="#9c9c9c" stroke-width="1"/>
<line x1="906.8" y1="537.60" x2="906.8" y2="610.40" stroke="#9c9c9c" stroke-width="1"/>
<polyline points="263.5,589.6 263.5,558.4 264.5,579.2 264.5,568.8 265.5,568.8 266.5,568.8 266.5,579.2 267.5,589.6 268.5,568.8 268.5,568.8 269.5,568.8 270.5,568.8 270.5,589.6 271.5,568.8 272.5,558.4 272.5,568.8 273.5,558.4 273.5,579.2 274.5,589.6 275.5,568.8 275.5,568.8 276.5,589.6 277.5,548.0 277.5,558.4 278.5,548.0 279.5,568.8 279.5,579.2 280.5,579.2 281.5,548.0 281.5,558.4 282.5,568.8 282.5,579.2 283.5,579.2 284.5,568.8 284.5,589.6 285.5,568.8 286.5,568.8 286.5,568.8 287.5,589.6 288.5,558.4 288.5,558.4 289.5,558.4 290.5,558.4 290.5,568.8 291.5,589.6 291.5,568.8 292.5,558.4 293.5,579.2 293.5,579.2 294.5,548.0 295.5,568.8 295.5,558.4 296.5,558.4 297.5,548.0 297.5,568.8 298.5,568.8 299.5,579.2 299.5,579.2 300.5,568.8 301.5,558.4 301.5,568.8 302.5,579.2 302.5,579.2 303.5,568.8 304.5,579.2 304.5,548.0 305.5,579.2 306.5,579.2 306.5,558.4 307.5,579.2 308.5,568.8 308.5,558.4 309.5,579.2 310.5,579.2 310.5,579.2 311.5,558.4 311.5,568.8 312.5,568.8 313.5,568.8 313.5,568.8 314.5,548.0 315.5,558.4 315.5,600.0 316.5,558.4 317.5,589.6 317.5,579.2 318.5,579.2 319.5,558.4 319.5,568.8 320.5,568.8 320.5,579.2 321.5,568.8 322.5,568.8 322.5,568.8 323.5,568.8 324.5,558.4 324.5,579.2 325.5,568.8 326.5,568.8 326.5,568.8 327.5,558.4 328.5,568.8 328.5,568.8 329.5,558.4 330.5,548.0 330.5,568.8 331.5,579.2 331.5,568.8 332.5,558.4 333.5,548.0 333.5,579.2 334.5,589.6 335.5,589.6 335.5,558.4 336.5,568.8 337.5,579.2 337.5,568.8 338.5,589.6 339.5,558.4 339.5,558.4 340.5,579.2 340.5,548.0 341.5,558.4 342.5,589.6 342.5,568.8 343.5,558.4 344.5,558.4 344.5,568.8 345.5,548.0 346.5,579.2 346.5,548.0 347.5,558.4 348.5,558.4 348.5,568.8 349.5,579.2 350.5,589.6 350.5,558.4 351.5,558.4 351.5,568.8 352.5,568.8 353.5,579.2 353.5,579.2 354.5,568.8 355.5,579.2 355.5,579.2 356.5,579.2 357.5,579.2 357.5,568.8 358.5,568.8 359.5,558.4 359.5,568.8 360.5,579.2 360.5,579.2 361.5,568.8 362.5,548.0 362.5,548.0 363.5,548.0 364.5,558.4 364.5,568.8 365.5,579.2 366.5,568.8 366.5,589.6 367.5,548.0 368.5,579.2 368.5,558.4 369.5,568.8 369.5,579.2 370.5,579.2 371.5,558.4 371.5,558.4 372.5,548.0 373.5,600.0 373.5,568.8 374.5,568.8 375.5,558.4 375.5,589.6 376.5,579.2 377.5,558.4 377.5,579.2 378.5,579.2 378.5,568.8 379.5,568.8 380.5,579.2 380.5,579.2 381.5,568.8 382.5,558.4 382.5,568.8 383.5,568.8 384.5,568.8 384.5,579.2 385.5,568.8 386.5,589.6 386.5,579.2 387.5,568.8 388.5,579.2 388.5,589.6 389.5,579.2 389.5,579.2 390.5,548.0 391.5,568.8 391.5,558.4 392.5,568.8 393.5,589.6 393.5,568.8 394.5,548.0 395.5,537.6 395.5,548.0 396.5,558.4 397.5,558.4 397.5,548.0 398.5,558.4 398.5,548.0 399.5,568.8 400.5,548.0 400.5,558.4 401.5,558.4 402.5,589.6 402.5,579.2 403.5,548.0 404.5,568.8 404.5,558.4 405.5,568.8 406.5,589.6 406.5,568.8 407.5,568.8 408.5,568.8 408.5,568.8 409.5,558.4 409.5,579.2 410.5,568.8 411.5,558.4 411.5,558.4 412.5,579.2 413.5,568.8 413.5,558.4 414.5,579.2 415.5,558.4 415.5,579.2 416.5,558.4 417.5,568.8 417.5,589.6 418.5,558.4 418.5,579.2 419.5,589.6 420.5,568.8 420.5,579.2 421.5,600.0 422.5,568.8 422.5,568.8 423.5,558.4 424.5,568.8 424.5,568.8 425.5,558.4 426.5,579.2 426.5,568.8 427.5,548.0 427.5,558.4 428.5,589.6 429.5,568.8 429.5,579.2 430.5,579.2 431.5,579.2 431.5,579.2 432.5,568.8 433.5,589.6 433.5,579.2 434.5,548.0 435.5,558.4 435.5,558.4 436.5,579.2 437.5,589.6 437.5,589.6 438.5,579.2 438.5,589.6 439.5,558.4 440.5,589.6 440.5,558.4 441.5,568.8 442.5,558.4 442.5,579.2 443.5,579.2 444.5,558.4 444.5,548.0 445.5,568.8 446.5,558.4 446.5,568.8 447.5,568.8 447.5,579.2 448.5,568.8 449.5,558.4 449.5,579.2 450.5,568.8 451.5,558.4 451.5,568.8 452.5,568.8 453.5,568.8 453.5,579.2 454.5,568.8 455.5,589.6 455.5,558.4 456.5,558.4 456.5,589.6 457.5,589.6 458.5,600.0 458.5,579.2 459.5,558.4 460.5,579.2 460.5,568.8 461.5,568.8 462.5,558.4 462.5,579.2 463.5,568.8 464.5,579.2 464.5,600.0 465.5,558.4 466.5,568.8 466.5,579.2 467.5,589.6 467.5,579.2 468.5,568.8 469.5,589.6 469.5,558.4 470.5,579.2 471.5,568.8 471.5,558.4 472.5,579.2 473.5,558.4 473.5,579.2 474.5,579.2 475.5,537.6 475.5,589.6 476.5,568.8 476.5,568.8 477.5,548.0 478.5,579.2 478.5,589.6 479.5,568.8 480.5,589.6 480.5,568.8 481.5,568.8 482.5,568.8 482.5,548.0 483.5,558.4 484.5,589.6 484.5,568.8 485.5,558.4 485.5,548.0 486.5,568.8 487.5,579.2 487.5,548.0 488.5,558.4 489.5,568.8 489.5,558.4 490.5,589.6 491.5,568.8 491.5,589.6 492.5,579.2 493.5,568.8 493.5,558.4 494.5,568.8 494.5,589.6 495.5,589.6 496.5,568.8 496.5,558.4 497.5,558.4 498.5,568.8 498.5,589.6 499.5,558.4 500.5,568.8 500.5,589.6 501.5,568.8 502.5,568.8 502.5,558.4 503.5,579.2 504.5,568.8 504.5,579.2 505.5,568.8 505.5,568.8 506.5,558.4 507.5,568.8 507.5,558.4 508.5,558.4 509.5,568.8 509.5,558.4 510.5,589.6 511.5,558.4 511.5,579.2 512.5,568.8 513.5,568.8 513.5,589.6 514.5,548.0 514.5,558.4 515.5,579.2 516.5,579.2 516.5,600.0 517.5,579.2 518.5,568.8 518.5,537.6 519.5,579.2 520.5,537.6 520.5,579.2 521.5,548.0 522.5,568.8 522.5,589.6 523.5,558.4 523.5,548.0 524.5,537.6 525.5,558.4 525.5,568.8 526.5,579.2 527.5,579.2 527.5,589.6 528.5,558.4 529.5,568.8 529.5,568.8 530.5,589.6 531.5,600.0 531.5,558.4 532.5,558.4 533.5,579.2 533.5,558.4 534.5,568.8 534.5,589.6 535.5,568.8 536.5,589.6 536.5,579.2 537.5,558.4 538.5,610.4 538.5,579.2 539.5,589.6 540.5,589.6 540.5,568.8 541.5,579.2 542.5,568.8 542.5,579.2 543.5,558.4 543.5,579.2 544.5,579.2 545.5,579.2 545.5,589.6 546.5,548.0 547.5,600.0 547.5,548.0 548.5,568.8 549.5,589.6 549.5,558.4 550.5,558.4 551.5,568.8 551.5,579.2 552.5,558.4 553.5,589.6 553.5,568.8 554.5,558.4 554.5,589.6 555.5,558.4 556.5,568.8 556.5,558.4 557.5,579.2 558.5,579.2 558.5,568.8 559.5,568.8 560.5,558.4 560.5,568.8 561.5,558.4 562.5,579.2 562.5,568.8 563.5,558.4 563.5,558.4 564.5,568.8 565.5,548.0 565.5,537.6 566.5,579.2 567.5,558.4 567.5,568.8 568.5,579.2 569.5,558.4 569.5,558.4 570.5,568.8 571.5,589.6 571.5,558.4 572.5,558.4 572.5,579.2 573.5,568.8 574.5,548.0 574.5,568.8 575.5,579.2 576.5,589.6 576.5,589.6 577.5,568.8 578.5,558.4 578.5,537.6 579.5,558.4 580.5,579.2 580.5,579.2 581.5,548.0 582.5,579.2 582.5,579.2 583.5,558.4 583.5,558.4 584.5,579.2 585.5,568.8 585.5,568.8 586.5,579.2 587.5,558.4 587.5,558.4 588.5,589.6 589.5,579.2 589.5,568.8 590.5,558.4 591.5,568.8 591.5,568.8 592.5,579.2 592.5,548.0 593.5,568.8 594.5,579.2 594.5,558.4 595.5,568.8 596.5,558.4 596.5,568.8 597.5,558.4 598.5,589.6 598.5,548.0 599.5,568.8 600.5,568.8 600.5,558.4 601.5,579.2 601.5,589.6 602.5,558.4 603.5,579.2 603.5,568.8 604.5,579.2 605.5,568.8 605.5,568.8 606.5,558.4 607.5,568.8 607.5,589.6 608.5,579.2 609.5,558.4 609.5,558.4 610.5,600.0 611.5,548.0 611.5,558.4 612.5,558.4 612.5,548.0 613.5,579.2 614.5,548.0 614.5,558.4 615.5,579.2 616.5,537.6 616.5,558.4 617.5,558.4 618.5,568.8 618.5,579.2 619.5,568.8 620.5,600.0 620.5,568.8 621.5,589.6 621.5,579.2 622.5,568.8 623.5,558.4 623.5,579.2 624.5,568.8 625.5,568.8 625.5,568.8 626.5,548.0 627.5,568.8 627.5,579.2 628.5,579.2 629.5,579.2 629.5,579.2 630.5,589.6 630.5,579.2 631.5,589.6 632.5,568.8 632.5,589.6 633.5,558.4 634.5,558.4 634.5,558.4 635.5,568.8 636.5,548.0 636.5,600.0 637.5,610.4 638.5,589.6 638.5,600.0 639.5,568.8 640.5,579.2 640.5,558.4 641.5,568.8 641.5,548.0 642.5,548.0 643.5,579.2 643.5,579.2 644.5,589.6 645.5,548.0 645.5,568.8 646.5,568.8 647.5,589.6 647.5,568.8 648.5,548.0 649.5,558.4 649.5,589.6 650.5,548.0 650.5,600.0 651.5,589.6 652.5,568.8 652.5,568.8 653.5,558.4 654.5,589.6 654.5,568.8 655.5,568.8 656.5,579.2 656.5,589.6 657.5,579.2 658.5,568.8 658.5,558.4 659.5,579.2 659.5,579.2 660.5,568.8 661.5,589.6 661.5,558.4 662.5,558.4 663.5,548.0 663.5,558.4 664.5,548.0 665.5,579.2 665.5,568.8 666.5,579.2 667.5,548.0 667.5,579.2 668.5,579.2 669.5,579.2 669.5,579.2 670.5,558.4 670.5,589.6 671.5,558.4 672.5,568.8 672.5,558.4 673.5,568.8 674.5,568.8 674.5,568.8 675.5,548.0 676.5,568.8 676.5,568.8 677.5,568.8 678.5,568.8 678.5,568.8 679.5,558.4 679.5,558.4 680.5,568.8 681.5,579.2 681.5,558.4 682.5,579.2 683.5,558.4 683.5,579.2 684.5,558.4 685.5,579.2 685.5,568.8 686.5,568.8 687.5,568.8 687.5,568.8 688.5,589.6 688.5,589.6 689.5,558.4 690.5,579.2 690.5,579.2 691.5,548.0 692.5,589.6 692.5,579.2 693.5,579.2 694.5,579.2 694.5,548.0 695.5,568.8 696.5,558.4 696.5,600.0 697.5,579.2 697.5,579.2 698.5,568.8 699.5,568.8 699.5,589.6 700.5,589.6 701.5,558.4 701.5,579.2 702.5,579.2 703.5,579.2 703.5,568.8 704.5,558.4 705.5,558.4 705.5,568.8 706.5,568.8 707.5,558.4 707.5,558.4 708.5,548.0 708.5,579.2 709.5,558.4 710.5,568.8 710.5,568.8 711.5,589.6 712.5,568.8 712.5,568.8 713.5,568.8 714.5,558.4 714.5,568.8 715.5,558.4 716.5,589.6 716.5,579.2 717.5,558.4 717.5,568.8 718.5,568.8 719.5,568.8 719.5,568.8 720.5,558.4 721.5,589.6 721.5,579.2 722.5,568.8 723.5,589.6 723.5,558.4 724.5,568.8 725.5,568.8 725.5,579.2 726.5,579.2 726.5,589.6 727.5,558.4 728.5,589.6 728.5,579.2 729.5,568.8 730.5,568.8 730.5,579.2 731.5,579.2 732.5,558.4 732.5,568.8 733.5,589.6 734.5,558.4 734.5,558.4 735.5,568.8 736.5,589.6 736.5,579.2 737.5,579.2 737.5,589.6 738.5,558.4 739.5,558.4 739.5,558.4 740.5,568.8 741.5,568.8 741.5,558.4 742.5,579.2 743.5,558.4 743.5,579.2 744.5,568.8 745.5,568.8 745.5,558.4 746.5,558.4 746.5,568.8 747.5,589.6 748.5,579.2 748.5,558.4 749.5,589.6 750.5,589.6 750.5,568.8 751.5,589.6 752.5,579.2 752.5,579.2 753.5,558.4 754.5,548.0 754.5,589.6 755.5,568.8 755.5,558.4 756.5,558.4 757.5,558.4 757.5,568.8 758.5,568.8 759.5,589.6 759.5,568.8 760.5,579.2 761.5,568.8 761.5,579.2 762.5,589.6 763.5,568.8 763.5,558.4 764.5,579.2 765.5,589.6 765.5,558.4 766.5,548.0 766.5,589.6 767.5,589.6 768.5,568.8 768.5,568.8 769.5,558.4 770.5,579.2 770.5,548.0 771.5,589.6 772.5,579.2 772.5,558.4 773.5,558.4 774.5,568.8 774.5,568.8 775.5,568.8 775.5,568.8 776.5,558.4 777.5,579.2 777.5,568.8 778.5,579.2 779.5,579.2 779.5,568.8 780.5,579.2 781.5,568.8 781.5,579.2 782.5,568.8 783.5,558.4 783.5,600.0 784.5,568.8 784.5,568.8 785.5,558.4 786.5,548.0 786.5,568.8 787.5,589.6 788.5,548.0 788.5,548.0 789.5,558.4 790.5,558.4 790.5,610.4 791.5,558.4 792.5,558.4 792.5,568.8 793.5,568.8 794.5,568.8 794.5,558.4 795.5,579.2 795.5,568.8 796.5,589.6 797.5,558.4 797.5,568.8 798.5,579.2 799.5,579.2 799.5,548.0 800.5,579.2 801.5,589.6 801.5,589.6 802.5,568.8 803.5,579.2 803.5,589.6 804.5,589.6 804.5,568.8 805.5,558.4 806.5,568.8 806.5,548.0 807.5,579.2 808.5,568.8 808.5,558.4 809.5,589.6 810.5,589.6 810.5,579.2 811.5,558.4 812.5,548.0 812.5,568.8 813.5,579.2 814.5,548.0 814.5,568.8 815.5,589.6 815.5,579.2 816.5,558.4 817.5,568.8 817.5,558.4 818.5,558.4 819.5,548.0 819.5,579.2 820.5,589.6 821.5,579.2 821.5,558.4 822.5,589.6 823.5,558.4 823.5,579.2 824.5,568.8 824.5,579.2 825.5,568.8 826.5,568.8 826.5,568.8 827.5,589.6 828.5,600.0 828.5,568.8 829.5,548.0 830.5,558.4 830.5,579.2 831.5,568.8 832.5,579.2 832.5,589.6 833.5,579.2 833.5,558.4 834.5,568.8 835.5,548.0 835.5,568.8 836.5,568.8 837.5,568.8 837.5,558.4 838.5,589.6 839.5,589.6 839.5,568.8 840.5,589.6 841.5,589.6 841.5,548.0 842.5,558.4 843.5,568.8 843.5,568.8 844.5,579.2 844.5,568.8 845.5,589.6 846.5,548.0 846.5,558.4 847.5,568.8 848.5,579.2 848.5,558.4 849.5,558.4 850.5,579.2 850.5,579.2 851.5,568.8 852.5,548.0 852.5,548.0 853.5,589.6 853.5,579.2 854.5,558.4 855.5,568.8 855.5,568.8 856.5,537.6 857.5,558.4 857.5,558.4 858.5,579.2 859.5,568.8 859.5,589.6 860.5,589.6 861.5,579.2 861.5,579.2 862.5,589.6 862.5,558.4 863.5,579.2 864.5,589.6 864.5,579.2 865.5,579.2 866.5,558.4 866.5,568.8 867.5,558.4 868.5,537.6 868.5,548.0 869.5,579.2 870.5,558.4 870.5,579.2 871.5,579.2 872.5,558.4 872.5,568.8 873.5,579.2 873.5,568.8 874.5,579.2 875.5,568.8 875.5,579.2 876.5,589.6 877.5,548.0 877.5,548.0 878.5,548.0 879.5,558.4 879.5,579.2 880.5,568.8 881.5,558.4 881.5,568.8 882.5,579.2 882.5,558.4 883.5,558.4 884.5,579.2 884.5,579.2 885.5,558.4 886.5,568.8 886.5,548.0 887.5,568.8 888.5,558.4 888.5,568.8 889.5,589.6 890.5,548.0 890.5,579.2 891.5,568.8 891.5,589.6 892.5,568.8 893.5,548.0 893.5,589.6 894.5,579.2 895.5,568.8 895.5,568.8 896.5,558.4 897.5,568.8 897.5,558.4 898.5,558.4 899.5,579.2 899.5,579.2 900.5,558.4 901.5,558.4 901.5,568.8 902.5,589.6 902.5,589.6 903.5,589.6 904.5,568.8 904.5,579.2 905.5,579.2 906.5,579.2 906.5,579.2" fill="none" stroke="#ffffff" stroke-width="1"/>
<line x1="906.8" y1="579.2" x2="923" y2="579.2" stroke="#ffffff" stroke-width="2.5"/>
<line x1="263.0" y1="639.60" x2="906.8" y2="639.60" stroke="#9c9c9c" stroke-width="1"/>
<line x1="263.0" y1="657.80" x2="906.8" y2="657.80" stroke="#9c9c9c" stroke-width="1"/>
<line x1="263.0" y1="676.00" x2="906.8" y2="676.00" stroke="#9c9c9c" stroke-width="1"/>
<line x1="263.0" y1="694.20" x2="906.8" y2="694.20" stroke="#9c9c9c" stroke-width="1"/>
<line x1="263.0" y1="712.40" x2="906.8" y2="712.40" stroke="#9c9c9c" stroke-width="1"/>
<line x1="263.0" y1="639.60" x2="263.0" y2="712.40" stroke="#9c9c9c" stroke-width="1"/>
<line x1="906.8" y1="639.60" x2="906.8" y2="712.40" stroke="#9c9c9c" stroke-width="1"/>
<polyline points="263.5,654.2 263.5,697.8 264.5,697.8 264.5,668.7 265.5,654.2 266.5,654.2 266.5,668.7 267.5,654.2 268.5,654.2 268.5,654.2 269.5,654.2 270.5,654.2 270.5,654.2 271.5,654.2 272.5,668.7 272.5,668.7 273.5,654.2 273.5,654.2 274.5,668.7 275.5,697.8 275.5,654.2 276.5,683.3 277.5,683.3 277.5,668.7 278.5,668.7 279.5,668.7 279.5,683.3 280.5,697.8 281.5,668.7 281.5,654.2 282.5,654.2 282.5,668.7 283.5,668.7 284.5,668.7 284.5,668.7 285.5,683.3 286.5,668.7 286.5,668.7 287.5,654.2 288.5,654.2 288.5,654.2 289.5,654.2 290.5,654.2 290.5,654.2 291.5,668.7 291.5,668.7 292.5,668.7 293.5,668.7 293.5,683.3 294.5,668.7 295.5,683.3 295.5,683.3 296.5,683.3 297.5,683.3 297.5,668.7 298.5,654.2 299.5,654.2 299.5,668.7 300.5,683.3 301.5,683.3 301.5,668.7 302.5,668.7 302.5,697.8 303.5,654.2 304.5,683.3 304.5,683.3 305.5,683.3 306.5,683.3 306.5,683.3 307.5,683.3 308.5,654.2 308.5,668.7 309.5,668.7 310.5,668.7 310.5,654.2 311.5,654.2 311.5,654.2 312.5,697.8 313.5,668.7 313.5,668.7 314.5,668.7 315.5,683.3 315.5,654.2 316.5,683.3 317.5,683.3 317.5,668.7 318.5,654.2 319.5,683.3 319.5,683.3 320.5,683.3 320.5,683.3 321.5,668.7 322.5,654.2 322.5,654.2 323.5,683.3 324.5,683.3 324.5,654.2 325.5,668.7 326.5,668.7 326.5,668.7 327.5,683.3 328.5,668.7 328.5,683.3 329.5,683.3 330.5,683.3 330.5,668.7 331.5,654.2 331.5,668.7 332.5,668.7 333.5,668.7 333.5,668.7 334.5,683.3 335.5,668.7 335.5,668.7 336.5,654.2 337.5,654.2 337.5,654.2 338.5,668.7 339.5,654.2 339.5,668.7 340.5,668.7 340.5,668.7 341.5,654.2 342.5,654.2 342.5,654.2 343.5,668.7 344.5,668.7 344.5,654.2 345.5,654.2 346.5,712.4 346.5,654.2 347.5,668.7 348.5,654.2 348.5,654.2 349.5,654.2 350.5,668.7 350.5,668.7 351.5,668.7 351.5,654.2 352.5,654.2 353.5,683.3 353.5,668.7 354.5,668.7 355.5,668.7 355.5,668.7 356.5,654.2 357.5,654.2 357.5,654.2 358.5,654.2 359.5,683.3 359.5,654.2 360.5,654.2 360.5,683.3 361.5,668.7 362.5,668.7 362.5,683.3 363.5,683.3 364.5,668.7 364.5,654.2 365.5,668.7 366.5,683.3 366.5,668.7 367.5,668.7 368.5,654.2 368.5,683.3 369.5,683.3 369.5,697.8 370.5,683.3 371.5,668.7 371.5,639.6 372.5,654.2 373.5,654.2 373.5,668.7 374.5,654.2 375.5,668.7 375.5,683.3 376.5,668.7 377.5,668.7 377.5,668.7 378.5,683.3 378.5,712.4 379.5,654.2 380.5,668.7 380.5,654.2 381.5,668.7 382.5,654.2 382.5,654.2 383.5,654.2 384.5,697.8 384.5,654.2 385.5,654.2 386.5,683.3 386.5,683.3 387.5,654.2 388.5,654.2 388.5,668.7 389.5,683.3 389.5,683.3 390.5,654.2 391.5,683.3 391.5,654.2 392.5,668.7 393.5,668.7 393.5,668.7 394.5,654.2 395.5,654.2 395.5,654.2 396.5,654.2 397.5,668.7 397.5,668.7 398.5,683.3 398.5,683.3 399.5,668.7 400.5,683.3 400.5,683.3 401.5,683.3 402.5,654.2 402.5,639.6 403.5,668.7 404.5,668.7 404.5,654.2 405.5,654.2 406.5,654.2 406.5,683.3 407.5,654.2 408.5,654.2 408.5,668.7 409.5,668.7 409.5,654.2 410.5,654.2 411.5,683.3 411.5,697.8 412.5,668.7 413.5,683.3 413.5,683.3 414.5,697.8 415.5,668.7 415.5,668.7 416.5,668.7 417.5,654.2 417.5,668.7 418.5,654.2 418.5,668.7 419.5,683.3 420.5,697.8 420.5,697.8 421.5,697.8 422.5,668.7 422.5,668.7 423.5,712.4 424.5,697.8 424.5,683.3 425.5,683.3 426.5,654.2 426.5,654.2 427.5,683.3 427.5,668.7 428.5,668.7 429.5,654.2 429.5,683.3 430.5,668.7 431.5,668.7 431.5,668.7 432.5,654.2 433.5,668.7 433.5,668.7 434.5,668.7 435.5,654.2 435.5,683.3 436.5,654.2 437.5,697.8 437.5,668.7 438.5,654.2 438.5,668.7 439.5,668.7 440.5,668.7 440.5,683.3 441.5,668.7 442.5,654.2 442.5,654.2 443.5,683.3 444.5,697.8 444.5,697.8 445.5,668.7 446.5,683.3 446.5,683.3 447.5,654.2 447.5,668.7 448.5,683.3 449.5,654.2 449.5,654.2 450.5,697.8 451.5,654.2 451.5,668.7 452.5,683.3 453.5,654.2 453.5,668.7 454.5,654.2 455.5,654.2 455.5,668.7 456.5,668.7 456.5,668.7 457.5,668.7 458.5,654.2 458.5,654.2 459.5,654.2 460.5,712.4 460.5,712.4 461.5,654.2 462.5,668.7 462.5,654.2 463.5,697.8 464.5,668.7 464.5,654.2 465.5,654.2 466.5,654.2 466.5,654.2 467.5,712.4 467.5,697.8 468.5,654.2 469.5,654.2 469.5,683.3 470.5,654.2 471.5,668.7 471.5,683.3 472.5,639.6 473.5,654.2 473.5,668.7 474.5,683.3 475.5,654.2 475.5,697.8 476.5,668.7 476.5,654.2 477.5,668.7 478.5,654.2 478.5,668.7 479.5,668.7 480.5,683.3 480.5,654.2 481.5,683.3 482.5,654.2 482.5,654.2 483.5,668.7 484.5,697.8 484.5,654.2 485.5,654.2 485.5,683.3 486.5,654.2 487.5,654.2 487.5,668.7 488.5,668.7 489.5,654.2 489.5,654.2 490.5,668.7 491.5,668.7 491.5,683.3 492.5,683.3 493.5,654.2 493.5,668.7 494.5,654.2 494.5,654.2 495.5,683.3 496.5,668.7 496.5,654.2 497.5,668.7 498.5,668.7 498.5,654.2 499.5,668.7 500.5,668.7 500.5,697.8 501.5,668.7 502.5,668.7 502.5,697.8 503.5,683.3 504.5,668.7 504.5,668.7 505.5,654.2 505.5,654.2 506.5,668.7 507.5,668.7 507.5,668.7 508.5,683.3 509.5,668.7 509.5,668.7 510.5,668.7 511.5,654.2 511.5,639.6 512.5,654.2 513.5,654.2 513.5,654.2 514.5,668.7 514.5,654.2 515.5,654.2 516.5,668.7 516.5,654.2 517.5,683.3 518.5,654.2 518.5,654.2 519.5,654.2 520.5,654.2 520.5,668.7 521.5,654.2 522.5,654.2 522.5,683.3 523.5,668.7 523.5,668.7 524.5,654.2 525.5,697.8 525.5,668.7 526.5,668.7 527.5,668.7 527.5,668.7 528.5,668.7 529.5,668.7 529.5,654.2 530.5,668.7 531.5,654.2 531.5,668.7 532.5,668.7 533.5,654.2 533.5,668.7 534.5,683.3 534.5,654.2 535.5,654.2 536.5,654.2 536.5,668.7 537.5,654.2 538.5,697.8 538.5,668.7 539.5,668.7 540.5,654.2 540.5,668.7 541.5,668.7 542.5,668.7 542.5,712.4 543.5,668.7 543.5,697.8 544.5,668.7 545.5,683.3 545.5,668.7 546.5,654.2 547.5,654.2 547.5,668.7 548.5,668.7 549.5,668.7 549.5,654.2 550.5,683.3 551.5,654.2 551.5,683.3 552.5,668.7 553.5,668.7 553.5,668.7 554.5,654.2 554.5,683.3 555.5,668.7 556.5,654.2 556.5,654.2 557.5,654.2 558.5,668.7 558.5,683.3 559.5,654.2 560.5,668.7 560.5,668.7 561.5,683.3 562.5,668.7 562.5,668.7 563.5,654.2 563.5,654.2 564.5,668.7 565.5,683.3 565.5,668.7 566.5,654.2 567.5,654.2 567.5,683.3 568.5,668.7 569.5,683.3 569.5,654.2 570.5,654.2 571.5,654.2 571.5,697.8 572.5,683.3 572.5,654.2 573.5,683.3 574.5,683.3 574.5,668.7 575.5,683.3 576.5,668.7 576.5,668.7 577.5,668.7 578.5,654.2 578.5,654.2 579.5,654.2 580.5,683.3 580.5,654.2 581.5,668.7 582.5,683.3 582.5,654.2 583.5,654.2 583.5,654.2 584.5,654.2 585.5,654.2 585.5,668.7 586.5,668.7 587.5,683.3 587.5,654.2 588.5,654.2 589.5,654.2 589.5,654.2 590.5,697.8 591.5,683.3 591.5,668.7 592.5,683.3 592.5,668.7 593.5,683.3 594.5,668.7 594.5,668.7 595.5,668.7 596.5,668.7 596.5,654.2 597.5,654.2 598.5,654.2 598.5,683.3 599.5,654.2 600.5,683.3 600.5,683.3 601.5,668.7 601.5,654.2 602.5,654.2 603.5,683.3 603.5,654.2 604.5,654.2 605.5,683.3 605.5,683.3 606.5,654.2 607.5,683.3 607.5,668.7 608.5,668.7 609.5,668.7 609.5,697.8 610.5,668.7 611.5,668.7 611.5,654.2 612.5,683.3 612.5,654.2 613.5,654.2 614.5,668.7 614.5,654.2 615.5,654.2 616.5,668.7 616.5,668.7 617.5,683.3 618.5,654.2 618.5,668.7 619.5,683.3 620.5,668.7 620.5,654.2 621.5,683.3 621.5,668.7 622.5,683.3 623.5,683.3 623.5,668.7 624.5,683.3 625.5,654.2 625.5,654.2 626.5,654.2 627.5,697.8 627.5,654.2 628.5,654.2 629.5,654.2 629.5,668.7 630.5,654.2 630.5,654.2 631.5,683.3 632.5,654.2 632.5,668.7 633.5,697.8 634.5,654.2 634.5,654.2 635.5,654.2 636.5,654.2 636.5,668.7 637.5,668.7 638.5,683.3 638.5,654.2 639.5,683.3 640.5,683.3 640.5,668.7 641.5,668.7 641.5,654.2 642.5,668.7 643.5,697.8 643.5,683.3 644.5,668.7 645.5,683.3 645.5,654.2 646.5,654.2 647.5,668.7 647.5,654.2 648.5,668.7 649.5,668.7 649.5,668.7 650.5,668.7 650.5,683.3 651.5,683.3 652.5,683.3 652.5,654.2 653.5,668.7 654.5,683.3 654.5,683.3 655.5,654.2 656.5,654.2 656.5,697.8 657.5,654.2 658.5,668.7 658.5,654.2 659.5,697.8 659.5,697.8 660.5,697.8 661.5,668.7 661.5,683.3 662.5,654.2 663.5,654.2 663.5,668.7 664.5,668.7 665.5,668.7 665.5,668.7 666.5,668.7 667.5,668.7 667.5,683.3 668.5,668.7 669.5,654.2 669.5,654.2 670.5,683.3 670.5,668.7 671.5,654.2 672.5,683.3 672.5,654.2 673.5,697.8 674.5,668.7 674.5,683.3 675.5,654.2 676.5,683.3 676.5,668.7 677.5,668.7 678.5,654.2 678.5,654.2 679.5,697.8 679.5,668.7 680.5,683.3 681.5,683.3 681.5,654.2 682.5,683.3 683.5,668.7 683.5,654.2 684.5,668.7 685.5,668.7 685.5,683.3 686.5,683.3 687.5,654.2 687.5,668.7 688.5,668.7 688.5,668.7 689.5,668.7 690.5,654.2 690.5,654.2 691.5,683.3 692.5,654.2 692.5,654.2 693.5,654.2 694.5,683.3 694.5,654.2 695.5,668.7 696.5,654.2 696.5,668.7 697.5,668.7 697.5,668.7 698.5,683.3 699.5,668.7 699.5,683.3 700.5,668.7 701.5,683.3 701.5,668.7 702.5,668.7 703.5,683.3 703.5,654.2 704.5,668.7 705.5,668.7 705.5,668.7 706.5,668.7 707.5,654.2 707.5,654.2 708.5,668.7 708.5,668.7 709.5,668.7 710.5,654.2 710.5,683.3 711.5,668.7 712.5,654.2 712.5,654.2 713.5,668.7 714.5,668.7 714.5,668.7 715.5,683.3 716.5,654.2 716.5,697.8 717.5,712.4 717.5,683.3 718.5,654.2 719.5,668.7 719.5,668.7 720.5,683.3 721.5,654.2 721.5,683.3 722.5,654.2 723.5,668.7 723.5,668.7 724.5,654.2 725.5,697.8 725.5,697.8 726.5,683.3 726.5,683.3 727.5,683.3 728.5,683.3 728.5,668.7 729.5,654.2 730.5,668.7 730.5,683.3 731.5,683.3 732.5,683.3 732.5,668.7 733.5,668.7 734.5,668.7 734.5,668.7 735.5,654.2 736.5,697.8 736.5,654.2 737.5,683.3 737.5,654.2 738.5,668.7 739.5,683.3 739.5,668.7 740.5,668.7 741.5,668.7 741.5,654.2 742.5,654.2 743.5,654.2 743.5,697.8 744.5,668.7 745.5,654.2 745.5,668.7 746.5,668.7 746.5,654.2 747.5,668.7 748.5,668.7 748.5,668.7 749.5,668.7 750.5,654.2 750.5,654.2 751.5,654.2 752.5,654.2 752.5,668.7 753.5,683.3 754.5,654.2 754.5,697.8 755.5,654.2 755.5,683.3 756.5,639.6 757.5,668.7 757.5,668.7 758.5,668.7 759.5,654.2 759.5,697.8 760.5,654.2 761.5,668.7 761.5,654.2 762.5,654.2 763.5,654.2 763.5,668.7 764.5,668.7 765.5,683.3 765.5,654.2 766.5,654.2 766.5,697.8 767.5,654.2 768.5,668.7 768.5,668.7 769.5,668.7 770.5,654.2 770.5,683.3 771.5,654.2 772.5,654.2 772.5,654.2 773.5,697.8 774.5,668.7 774.5,668.7 775.5,683.3 775.5,668.7 776.5,668.7 777.5,654.2 777.5,654.2 778.5,697.8 779.5,654.2 779.5,654.2 780.5,683.3 781.5,683.3 781.5,668.7 782.5,683.3 783.5,654.2 783.5,654.2 784.5,697.8 784.5,654.2 785.5,683.3 786.5,668.7 786.5,654.2 787.5,683.3 788.5,639.6 788.5,697.8 789.5,654.2 790.5,654.2 790.5,654.2 791.5,668.7 792.5,668.7 792.5,654.2 793.5,654.2 794.5,654.2 794.5,668.7 795.5,668.7 795.5,654.2 796.5,654.2 797.5,668.7 797.5,654.2 798.5,668.7 799.5,654.2 799.5,654.2 800.5,668.7 801.5,668.7 801.5,668.7 802.5,668.7 803.5,683.3 803.5,683.3 804.5,654.2 804.5,654.2 805.5,683.3 806.5,654.2 806.5,654.2 807.5,654.2 808.5,668.7 808.5,683.3 809.5,654.2 810.5,697.8 810.5,697.8 811.5,697.8 812.5,683.3 812.5,668.7 813.5,654.2 814.5,654.2 814.5,654.2 815.5,654.2 815.5,683.3 816.5,683.3 817.5,654.2 817.5,668.7 818.5,654.2 819.5,654.2 819.5,654.2 820.5,668.7 821.5,654.2 821.5,683.3 822.5,668.7 823.5,668.7 823.5,654.2 824.5,668.7 824.5,654.2 825.5,668.7 826.5,654.2 826.5,668.7 827.5,654.2 828.5,697.8 828.5,654.2 829.5,668.7 830.5,654.2 830.5,654.2 831.5,654.2 832.5,668.7 832.5,668.7 833.5,668.7 833.5,683.3 834.5,683.3 835.5,668.7 835.5,668.7 836.5,654.2 837.5,668.7 837.5,668.7 838.5,683.3 839.5,683.3 839.5,654.2 840.5,654.2 841.5,654.2 841.5,697.8 842.5,668.7 843.5,654.2 843.5,697.8 844.5,668.7 844.5,654.2 845.5,683.3 846.5,668.7 846.5,654.2 847.5,668.7 848.5,668.7 848.5,683.3 849.5,654.2 850.5,683.3 850.5,683.3 851.5,668.7 852.5,654.2 852.5,668.7 853.5,668.7 853.5,654.2 854.5,668.7 855.5,654.2 855.5,654.2 856.5,654.2 857.5,683.3 857.5,654.2 858.5,654.2 859.5,668.7 859.5,668.7 860.5,668.7 861.5,654.2 861.5,654.2 862.5,668.7 862.5,654.2 863.5,668.7 864.5,668.7 864.5,697.8 865.5,654.2 866.5,683.3 866.5,668.7 867.5,683.3 868.5,654.2 868.5,668.7 869.5,712.4 870.5,654.2 870.5,697.8 871.5,654.2 872.5,654.2 872.5,668.7 873.5,668.7 873.5,683.3 874.5,697.8 875.5,654.2 875.5,668.7 876.5,668.7 877.5,668.7 877.5,654.2 878.5,668.7 879.5,668.7 879.5,668.7 880.5,668.7 881.5,654.2 881.5,668.7 882.5,668.7 882.5,683.3 883.5,654.2 884.5,668.7 884.5,668.7 885.5,668.7 886.5,654.2 886.5,668.7 887.5,654.2 888.5,654.2 888.5,668.7 889.5,668.7 890.5,683.3 890.5,683.3 891.5,683.3 891.5,683.3 892.5,683.3 893.5,683.3 893.5,668.7 894.5,668.7 895.5,654.2 895.5,683.3 896.5,668.7 897.5,668.7 897.5,654.2 898.5,654.2 899.5,668.7 899.5,654.2 900.5,683.3 901.5,668.7 901.5,668.7 902.5,668.7 902.5,654.2 903.5,654.2 904.5,668.7 904.5,683.3 905.5,654.2 906.5,668.7 906.5,668.7" fill="none" stroke="#f080f0" stroke-width="1"/>
<line x1="906.8" y1="668.7" x2="923" y2="668.7" stroke="#f080f0" stroke-width="2.5"/>
</svg></div>
<div class="ab" style="left:931.7px;top:112.5px;font-size:10.5px;line-height:12px;letter-spacing:-0.25px;color:#2f7ae0">Device :</div>
<div class="ab" style="left:973.4px;top:113px;font-size:10px;line-height:12px;letter-spacing:-0.2px;color:#8a8a8a">select...</div>
<svg class="ab" style="left:1017.5px;top:114px" width="12" height="11" viewBox="0 0 12 11"><path d="M5 10.3 H1.5 V0.7 H5.8 L8.2 3.1 V5" fill="none" stroke="#222" stroke-width="1"/><circle cx="8.3" cy="8" r="2" fill="none" stroke="#222" stroke-width="1"/><path d="M6.8 9.5 L5.6 10.7" stroke="#222" stroke-width="1"/></svg>
<div class="ab" style="left:1041px;top:113px;font-size:9.5px;line-height:12px;color:#111">Write All</div>
<div class="ab" style="left:1095.3px;top:113px;font-size:9.5px;line-height:12px;color:#111">Read All</div>
<div class="ab" style="left:927.2px;top:128.9px;width:230.3px;height:35.1px;border:1px solid #e3e3e3"></div>
<div class="ab" style="left:927.2px;top:145px;width:230.3px;height:1px;background:#e3e3e3"></div>
<div class="ab" style="left:965.4px;top:128.9px;width:1px;height:35px;background:#e3e3e3"></div>
<div class="ab" style="left:1038.2px;top:128.9px;width:1px;height:35px;background:#e3e3e3"></div>
<div class="ab" style="left:1087.3px;top:128.9px;width:1px;height:35px;background:#e3e3e3"></div>
<div class="ab" style="left:1117.6px;top:128.9px;width:1px;height:35px;background:#e3e3e3"></div>
<div class="ab" style="left:1137.3px;top:128.9px;width:1px;height:35px;background:#e3e3e3"></div>
<div class="ab" style="left:927.2px;top:131px;width:38.19999999999993px;text-align:center;font-size:9.5px;line-height:12px;color:#111">Addr</div>
<div class="ab" style="left:965.4px;top:131px;width:72.80000000000007px;text-align:center;font-size:9.5px;line-height:12px;color:#111">Name</div>
<div class="ab" style="left:1038.2px;top:131px;width:49.09999999999991px;text-align:center;font-size:9.5px;line-height:12px;color:#111">Data</div>
<div class="ab" style="left:1087.3px;top:131px;width:30.299999999999955px;text-align:center;font-size:9.5px;line-height:12px;color:#111">Value</div>
<div class="ab" style="left:1117.6px;top:131px;width:19.700000000000045px;text-align:center;font-size:9.5px;line-height:12px;color:#111">W</div>
<div class="ab" style="left:1137.3px;top:131px;width:20.200000000000045px;text-align:center;font-size:9.5px;line-height:12px;color:#111">R</div>
<div class="ab" style="left:1118.4px;top:146.1px;width:18.3px;height:17.2px;border:1.5px solid #222;background:#fff"></div>
<div class="ab" style="left:1138px;top:146.1px;width:18.7px;height:17.2px;border:1.5px solid #222;background:#fff"></div>
</body></html>
